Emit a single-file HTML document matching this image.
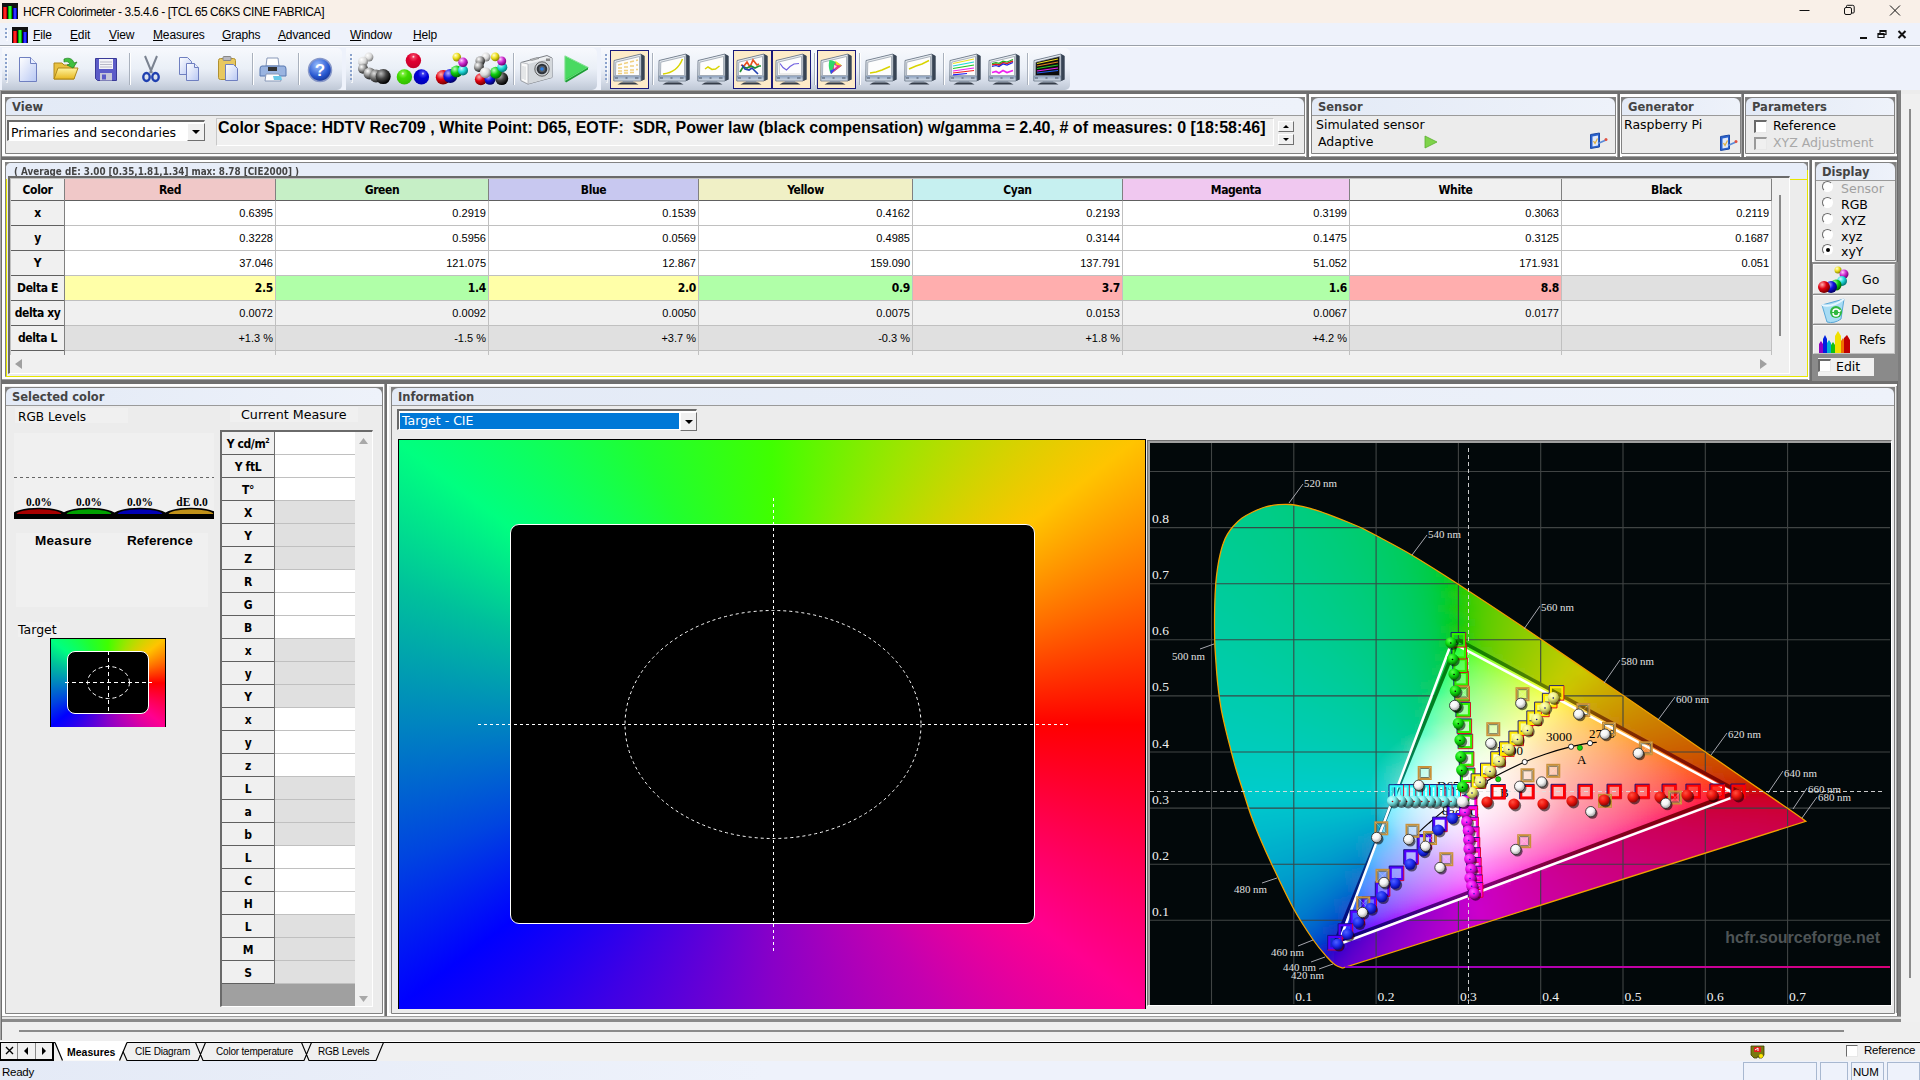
<!DOCTYPE html>
<html lang="en"><head><meta charset="utf-8"><title>HCFR Colorimeter</title>
<style>
html,body{margin:0;padding:0}
body{width:1920px;height:1080px;overflow:hidden;position:relative;background:#ececec;font-family:"Liberation Sans",sans-serif;color:#000}
.abs{position:absolute;white-space:nowrap}
.seg{font-family:"Liberation Sans",sans-serif}
.lsb{font-family:"Liberation Sans",sans-serif;font-weight:bold}
.vd{font-family:"DejaVu Sans","Liberation Sans",sans-serif}
.vdb{font-family:"DejaVu Sans","Liberation Sans",sans-serif;font-weight:bold}
.grip{width:2px;background:repeating-linear-gradient(180deg,#8aa2cc 0,#8aa2cc 2px,transparent 2px,transparent 4px);box-shadow:1px 1px 0 rgba(255,255,255,0.7)}
.tband{background:linear-gradient(180deg,#f7f9fd 0,#eaeff7 50%,#d5dce8 78%,#bfc8d6 100%);border-radius:0 5px 5px 0}
.gbox{background:#ececec;border:1px solid #828282;box-shadow:inset 0 0 0 0 #fff;border-radius:6px 6px 0 0}
.gbox::before{content:"";position:absolute;left:-1px;top:-1px;width:8px;height:8px;background:#828282;z-index:0}
.gbox::after{content:"";position:absolute;right:-1px;top:-1px;width:8px;height:8px;background:#828282;z-index:0}
.ghdr{position:relative;z-index:1;background:linear-gradient(90deg,#e3eaf6,#eef2fa);border-bottom:1px solid #9a9a9a;border-radius:6px 6px 0 0;box-sizing:border-box}
.ghdr span{position:absolute;left:6px;top:2px;font-family:"DejaVu Sans","Liberation Sans",sans-serif;font-weight:bold;font-size:11.500px;line-height:15px;color:#444}
.combo{background:#fff;border-left:2px solid #6a6a6a;border-top:2px solid #6a6a6a;border-right:1px solid #fff;border-bottom:1px solid #fff;box-sizing:border-box}
.cbtn{position:absolute;background:#f0f0f0;border-right:1px solid #707070;border-bottom:1px solid #707070;border-left:1px solid #fff;border-top:1px solid #fff;box-sizing:border-box}
.cbtn i{position:absolute;left:50%;top:50%;margin:-2px 0 0 -4px;border:4px solid transparent;border-top:4px solid #000;border-bottom:0}
.spin{width:16px;height:11px;background:#f0f0f0;border-right:1px solid #707070;border-bottom:1px solid #707070;border-left:1px solid #fff;border-top:1px solid #fff;box-sizing:border-box}
.spin i{position:absolute;left:4px;top:3px;border:3px solid transparent}
.spin i.up{border-bottom:3px solid #000;border-top:0}
.spin i.dn{border-top:3px solid #000;border-bottom:0}
.chk{width:13px;height:13px;background:#fff;border-left:2px solid #6a6a6a;border-top:2px solid #6a6a6a;border-right:1px solid #e8e8e8;border-bottom:1px solid #e8e8e8;box-sizing:border-box}
.chk.dis{background:#f0f0f0;border-left-color:#9a9a9a;border-top-color:#9a9a9a}
.chk.sm{width:12px;height:12px;border-left-width:1px;border-top-width:1px}
.radio{width:11px;height:11px;border-radius:50%;background:#fff;border:1px solid #fff;border-left:1.500px solid #6a6a6a;border-top:1.500px solid #6a6a6a;box-sizing:border-box}
.radio i{position:absolute;left:2.500px;top:2.500px;width:4px;height:4px;border-radius:50%;background:#000}
.hc,.rh,.cv{box-sizing:border-box;overflow:hidden}
.hc span,.rh span{display:block;text-align:center;font-family:"DejaVu Sans Condensed","DejaVu Sans","Liberation Sans",sans-serif;font-weight:bold;font-size:12px;letter-spacing:-0.4px}
.hc span{line-height:23px}
.rh{background:#f0f0f0}
.rh span{line-height:24px}
.rh sup{font-size:7px;line-height:0;vertical-align:5px}
.cv span{display:block;text-align:right;padding-right:2px;font-family:"Liberation Sans",sans-serif;font-size:11px;line-height:24px}
.cv.b span{font-family:"DejaVu Sans Condensed","DejaVu Sans",sans-serif;font-weight:bold;font-size:12px;letter-spacing:-0.3px}
.btn{background:#ebebeb;border-left:1px solid #f8f8f8;border-top:1px solid #f8f8f8;border-right:1px solid #c8c8c8;border-bottom:1px solid #c0c0c0;box-sizing:border-box}
</style></head>
<body>
<div class="abs" style="left:0;top:0;width:1920px;height:23px;background:#f9f0e8"></div>
<svg class="abs" style="left:2px;top:3px" width="18" height="18" viewBox="0 0 18 18"><rect x="0" y="0" width="16" height="16" fill="#111"/><rect x="1" y="4" width="4" height="12" fill="#c00"/><rect x="2" y="4" width="2" height="12" fill="#f22"/><rect x="6" y="3" width="4" height="13" fill="#0a0"/><rect x="7" y="3" width="2" height="13" fill="#3e3"/><rect x="11" y="5" width="4" height="11" fill="#00c"/><rect x="12" y="5" width="2" height="11" fill="#33f"/></svg>
<div class="abs seg" style="left:23px;top:4px;font-size:12px;line-height:16px;letter-spacing:-0.41px">HCFR Colorimeter - 3.5.4.6 - [TCL 65 C6KS CINE FABRICA]</div>
<svg class="abs" style="left:1780px;top:0" width="140" height="23" viewBox="0 0 140 23" fill="none" stroke="#111" stroke-width="1"><path d="M19.5 10.5h10"/><rect x="64.5" y="7.5" width="7" height="7" rx="1.5"/><path d="M66.5 7.5v-1.2a1 1 0 0 1 1-1h5.2a1.5 1.5 0 0 1 1.5 1.5v5.2a1 1 0 0 1 -1 1h-1.2"/><path d="M110 5.5l10 10M120 5.5l-10 10"/></svg>
<div class="abs" style="left:0;top:23px;width:1920px;height:23px;background:#eef2fb"></div>
<div class="abs" style="left:0;top:45px;width:1920px;height:1px;background:#9aa0a8"></div>
<div class="abs" style="left:0;top:46px;width:1920px;height:44px;background:#eef2fb"></div><div class="abs" style="left:0;top:46px;width:1920px;height:1px;background:#fff"></div>
<div class="abs grip" style="left:5px;top:28px;height:12px"></div>
<svg class="abs" style="left:12px;top:27px" width="18" height="18" viewBox="0 0 18 18"><rect x="0" y="0" width="16" height="16" fill="#111"/><rect x="1" y="4" width="4" height="12" fill="#c00"/><rect x="2" y="4" width="2" height="12" fill="#f22"/><rect x="6" y="3" width="4" height="13" fill="#0a0"/><rect x="7" y="3" width="2" height="13" fill="#3e3"/><rect x="11" y="5" width="4" height="11" fill="#00c"/><rect x="12" y="5" width="2" height="11" fill="#33f"/></svg>
<div class="abs seg" style="left:33px;top:27px;font-size:12px;line-height:16px;letter-spacing:-0.15px"><u>F</u>ile</div>
<div class="abs seg" style="left:70px;top:27px;font-size:12px;line-height:16px;letter-spacing:-0.15px"><u>E</u>dit</div>
<div class="abs seg" style="left:109px;top:27px;font-size:12px;line-height:16px;letter-spacing:-0.15px"><u>V</u>iew</div>
<div class="abs seg" style="left:153px;top:27px;font-size:12px;line-height:16px;letter-spacing:-0.15px"><u>M</u>easures</div>
<div class="abs seg" style="left:222px;top:27px;font-size:12px;line-height:16px;letter-spacing:-0.15px"><u>G</u>raphs</div>
<div class="abs seg" style="left:278px;top:27px;font-size:12px;line-height:16px;letter-spacing:-0.15px"><u>A</u>dvanced</div>
<div class="abs seg" style="left:350px;top:27px;font-size:12px;line-height:16px;letter-spacing:-0.15px"><u>W</u>indow</div>
<div class="abs seg" style="left:413px;top:27px;font-size:12px;line-height:16px;letter-spacing:-0.15px"><u>H</u>elp</div>
<svg class="abs" style="left:1850px;top:26px" width="70" height="16" viewBox="0 0 70 16" fill="none" stroke="#111"><path d="M10 12h7" stroke-width="2"/><path d="M28 7.5h6v4h-6z M28 8.5h6 M30 7v-2.5h6v4h-2 M30 5.5h6" stroke-width="1.2"/><path d="M48.500 5l7 7M55.500 5l-7 7" stroke-width="2"/></svg>
<div class="abs tband" style="left:2px;top:48px;width:340px;height:42px"></div>
<div class="abs grip" style="left:5px;top:54px;height:28px"></div>
<div class="abs tband" style="left:346px;top:48px;width:251px;height:42px"></div>
<div class="abs grip" style="left:350px;top:54px;height:28px"></div>
<div class="abs tband" style="left:601px;top:48px;width:469px;height:42px"></div>
<div class="abs grip" style="left:605px;top:54px;height:28px"></div>
<div class="abs" style="left:129px;top:53px;width:1px;height:32px;background:#a9b1bd"></div><div class="abs" style="left:130px;top:53px;width:1px;height:32px;background:#fff"></div>
<div class="abs" style="left:252px;top:53px;width:1px;height:32px;background:#a9b1bd"></div><div class="abs" style="left:253px;top:53px;width:1px;height:32px;background:#fff"></div>
<div class="abs" style="left:298px;top:53px;width:1px;height:32px;background:#a9b1bd"></div><div class="abs" style="left:299px;top:53px;width:1px;height:32px;background:#fff"></div>
<div class="abs" style="left:513px;top:53px;width:1px;height:32px;background:#a9b1bd"></div><div class="abs" style="left:514px;top:53px;width:1px;height:32px;background:#fff"></div>
<div class="abs" style="left:652px;top:53px;width:1px;height:32px;background:#a9b1bd"></div><div class="abs" style="left:653px;top:53px;width:1px;height:32px;background:#fff"></div>
<div class="abs" style="left:814px;top:53px;width:1px;height:32px;background:#a9b1bd"></div><div class="abs" style="left:815px;top:53px;width:1px;height:32px;background:#fff"></div>
<div class="abs" style="left:859px;top:53px;width:1px;height:32px;background:#a9b1bd"></div><div class="abs" style="left:860px;top:53px;width:1px;height:32px;background:#fff"></div>
<div class="abs" style="left:943px;top:53px;width:1px;height:32px;background:#a9b1bd"></div><div class="abs" style="left:944px;top:53px;width:1px;height:32px;background:#fff"></div>
<div class="abs" style="left:1027px;top:53px;width:1px;height:32px;background:#a9b1bd"></div><div class="abs" style="left:1028px;top:53px;width:1px;height:32px;background:#fff"></div>
<div class="abs" style="left:610px;top:50px;width:37px;height:37px;background:#fdebc8;border:1px solid #1a1a7a"></div>
<div class="abs" style="left:733px;top:50px;width:37px;height:37px;background:#fdebc8;border:1px solid #1a1a7a"></div>
<div class="abs" style="left:772px;top:50px;width:37px;height:37px;background:#fdebc8;border:1px solid #1a1a7a"></div>
<div class="abs" style="left:817px;top:50px;width:37px;height:37px;background:#fdebc8;border:1px solid #1a1a7a"></div>
<svg width="0" height="0" style="position:absolute"><defs><linearGradient id="gdoc" x1="0" y1="0" x2="1" y2="1"><stop offset="0" stop-color="#fff"/><stop offset="1" stop-color="#b8c8f4"/></linearGradient><linearGradient id="gfold" x1="0" y1="0" x2="0" y2="1"><stop offset="0" stop-color="#fff4a0"/><stop offset="1" stop-color="#e8b820"/></linearGradient><linearGradient id="gmon" x1="0" y1="0" x2="1" y2="1"><stop offset="0" stop-color="#f4f6f8"/><stop offset="1" stop-color="#8a95a3"/></linearGradient><radialGradient id="bgray" cx="0.35" cy="0.3" r="0.7"><stop offset="0" stop-color="#fff"/><stop offset="0.5" stop-color="#999"/><stop offset="1" stop-color="#222"/></radialGradient><radialGradient id="bdark" cx="0.35" cy="0.3" r="0.7"><stop offset="0" stop-color="#bbb"/><stop offset="0.5" stop-color="#444"/><stop offset="1" stop-color="#000"/></radialGradient><radialGradient id="bred" cx="0.35" cy="0.3" r="0.7"><stop offset="0" stop-color="#ffb0b0"/><stop offset="0.5" stop-color="#e00010"/><stop offset="1" stop-color="#700"/></radialGradient><radialGradient id="bgreen" cx="0.35" cy="0.3" r="0.7"><stop offset="0" stop-color="#c0ffc0"/><stop offset="0.5" stop-color="#10d010"/><stop offset="1" stop-color="#060"/></radialGradient><radialGradient id="bblue" cx="0.35" cy="0.3" r="0.7"><stop offset="0" stop-color="#b0b0ff"/><stop offset="0.5" stop-color="#1010e0"/><stop offset="1" stop-color="#006"/></radialGradient><radialGradient id="byel" cx="0.35" cy="0.3" r="0.7"><stop offset="0" stop-color="#ffffd0"/><stop offset="0.5" stop-color="#f0e020"/><stop offset="1" stop-color="#880"/></radialGradient><radialGradient id="bcya" cx="0.35" cy="0.3" r="0.7"><stop offset="0" stop-color="#d0ffff"/><stop offset="0.5" stop-color="#20d8d8"/><stop offset="1" stop-color="#077"/></radialGradient><radialGradient id="bmag" cx="0.35" cy="0.3" r="0.7"><stop offset="0" stop-color="#ffd0ff"/><stop offset="0.5" stop-color="#d030d0"/><stop offset="1" stop-color="#707"/></radialGradient><radialGradient id="bhelp" cx="0.4" cy="0.3" r="0.8"><stop offset="0" stop-color="#9cc0ff"/><stop offset="0.6" stop-color="#2858d0"/><stop offset="1" stop-color="#102880"/></radialGradient><radialGradient id="bwht" cx="0.35" cy="0.3" r="0.75"><stop offset="0" stop-color="#fff"/><stop offset="0.55" stop-color="#d8d8d8"/><stop offset="1" stop-color="#707070"/></radialGradient><radialGradient id="bmid" cx="0.35" cy="0.3" r="0.75"><stop offset="0" stop-color="#e0e0e0"/><stop offset="0.5" stop-color="#707070"/><stop offset="1" stop-color="#1a1a1a"/></radialGradient><radialGradient id="bred2" cx="0.5" cy="0.25" r="0.8"><stop offset="0" stop-color="#fff"/><stop offset="0.12" stop-color="#f04060"/><stop offset="0.4" stop-color="#e00030"/><stop offset="1" stop-color="#c00028"/></radialGradient><radialGradient id="bgreen2" cx="0.4" cy="0.28" r="0.8"><stop offset="0" stop-color="#fff"/><stop offset="0.12" stop-color="#80f040"/><stop offset="0.4" stop-color="#40d800"/><stop offset="1" stop-color="#30b800"/></radialGradient><radialGradient id="bblue2" cx="0.6" cy="0.28" r="0.8"><stop offset="0" stop-color="#fff"/><stop offset="0.12" stop-color="#4040f0"/><stop offset="0.4" stop-color="#0000d8"/><stop offset="1" stop-color="#0000a8"/></radialGradient></defs></svg>
<svg class="abs" style="left:12px;top:53px" width="32" height="32" viewBox="0 0 32 32"><path d="M7.5 4.5h11l6 6v18h-17z" fill="url(#gdoc)" stroke="#6f7fc0"/><path d="M18.5 4.5v6h6" fill="#e8eeff" stroke="#6f7fc0"/></svg>
<svg class="abs" style="left:50px;top:53px" width="32" height="32" viewBox="0 0 32 32"><path d="M4 10h8l2 2h10v14h-20z" fill="#e8c040" stroke="#b08818"/><path d="M4 26l4-11h20l-4 11z" fill="url(#gfold)" stroke="#b08818"/><path d="M14 6c5-2 9 0 10 4l3-1-4 6-6-3 3-1c-1-2-3-3-6-2z" fill="#40c040" stroke="#208020" stroke-width="0.7"/></svg>
<svg class="abs" style="left:90px;top:53px" width="32" height="32" viewBox="0 0 32 32"><path d="M5.5 5.5h21v22h-19l-2-2z" fill="#5c5cc8" stroke="#3a3a98"/><rect x="9" y="6" width="14" height="10" fill="#f4f4f8"/><path d="M10 9h12M10 11.5h12M10 14h12" stroke="#aab" stroke-width="0.8"/><rect x="10" y="20" width="12" height="7.5" fill="#c8c8d8"/><rect x="12" y="21.5" width="4" height="5" fill="#5c5cc8"/></svg>
<svg class="abs" style="left:135px;top:53px" width="32" height="32" viewBox="0 0 32 32"><path d="M10 3l7 17M22 3l-7 17" stroke="#7a8290" stroke-width="2" fill="none"/><ellipse cx="11.5" cy="24" rx="3.2" ry="4" fill="none" stroke="#2040b0" stroke-width="2.4"/><ellipse cx="20.5" cy="24" rx="3.2" ry="4" fill="none" stroke="#2040b0" stroke-width="2.4"/></svg>
<svg class="abs" style="left:173px;top:53px" width="32" height="32" viewBox="0 0 32 32"><path d="M6.5 4.5h8l4 4v13h-12z" fill="url(#gdoc)" stroke="#6f7fc0"/><path d="M13.5 10.5h8l4 4v13h-12z" fill="url(#gdoc)" stroke="#6f7fc0"/><path d="M21.5 10.5v4h4" fill="#e8eeff" stroke="#6f7fc0"/></svg>
<svg class="abs" style="left:212px;top:53px" width="32" height="32" viewBox="0 0 32 32"><rect x="6.5" y="5.5" width="17" height="21" rx="2" fill="#e8c860" stroke="#b09030"/><rect x="11" y="3.500" width="8" height="4" rx="1" fill="#b8b8c0" stroke="#888"/><path d="M13.5 11.5h8l4 4v12h-12z" fill="url(#gdoc)" stroke="#6f7fc0"/></svg>
<svg class="abs" style="left:257px;top:53px" width="32" height="32" viewBox="0 0 32 32"><path d="M10 5h11l1 8h-13z" fill="#fff" stroke="#8898b8"/><path d="M5 13h22q2 0 2 3v7h-26v-7q0-3 2-3z" fill="#9ab4e0" stroke="#5878b0"/><rect x="11" y="14" width="9" height="4" fill="#333"/><path d="M9 21h13l2 7h-16z" fill="#fff" stroke="#8898b8"/><path d="M16 23h8l1 4h-8z" fill="#68c8e8"/></svg>
<svg class="abs" style="left:304px;top:53px" width="32" height="32" viewBox="0 0 32 32"><circle cx="16" cy="17" r="11.5" fill="url(#bhelp)" stroke="#8898c8" stroke-width="1.5"/><text x="16" y="23" text-anchor="middle" font-family="Liberation Sans,sans-serif" font-weight="bold" font-size="17" fill="#fff">?</text></svg>
<svg class="abs" style="left:350px;top:48px" width="250" height="42" viewBox="350 48 250 42"><circle cx="368.9" cy="57.1" r="4.5" fill="url(#bwht)"/><circle cx="363" cy="61.7" r="5" fill="url(#bwht)"/><circle cx="363" cy="68.8" r="5" fill="url(#bgray)"/><circle cx="369.5" cy="73.4" r="6" fill="url(#bgray)"/><circle cx="376" cy="76" r="6.5" fill="url(#bmid)"/><circle cx="383.2" cy="76.6" r="7.5" fill="url(#bdark)"/><circle cx="413.4" cy="60.6" r="7.7" fill="url(#bred2)"/><circle cx="404.4" cy="76.9" r="7.7" fill="url(#bgreen2)"/><circle cx="421.4" cy="76.9" r="7.7" fill="url(#bblue2)"/><circle cx="443.1" cy="77.3" r="7.3" fill="url(#bred)"/><circle cx="450.3" cy="76" r="7" fill="url(#bblue)"/><circle cx="456.5" cy="71.4" r="6" fill="url(#bgreen)"/><circle cx="463" cy="70.4" r="5" fill="url(#bcya)"/><circle cx="456.8" cy="57.1" r="4.3" fill="url(#byel)"/><circle cx="463" cy="62.3" r="4.8" fill="url(#bmag)"/><circle cx="480.9" cy="79.3" r="6" fill="url(#bred)"/><circle cx="490" cy="79.3" r="5.5" fill="url(#bblue)"/><circle cx="501.7" cy="78.6" r="6.5" fill="url(#bdark)"/><circle cx="495.8" cy="72.7" r="6" fill="url(#bgreen)"/><circle cx="502.3" cy="67.3" r="5" fill="url(#bcya)"/><circle cx="501.7" cy="61" r="4.5" fill="url(#bmag)"/><circle cx="495.2" cy="56.9" r="4.3" fill="url(#byel)"/><circle cx="486" cy="57.1" r="4.5" fill="url(#bwht)"/><circle cx="480.2" cy="61" r="4.8" fill="url(#bgray)"/><circle cx="478.9" cy="66.9" r="5" fill="url(#bgray)"/><circle cx="485.4" cy="72.7" r="5.5" fill="url(#bwht)"/><path d="M521 62.500L547 55.500l5 2.500v19.500L528 84l-7-3.500z" fill="#eef0f2" stroke="#6e7278" stroke-width="0.900"/><path d="M552 58v19.500L528 84V64z" fill="#d4d8dc"/><path d="M521 62.500l7 1.500v20l-7-3.500z" fill="#fafafa" stroke="#9a9ea4" stroke-width="0.600"/><path d="M523 66v13M525 66.500v13.500" stroke="#c4c8cc" stroke-width="0.800"/><path d="M530 59.500l7-2 2 1-7 2z" fill="#b8bcc0" stroke="#777" stroke-width="0.500"/><rect x="546" y="58.500" width="4" height="2.500" fill="#888"/><circle cx="542" cy="69" r="7.200" fill="#c8ccd0" stroke="#555" stroke-width="0.900"/><circle cx="542" cy="69" r="5.300" fill="#30343a"/><circle cx="542" cy="69" r="3.300" fill="#555c66"/><circle cx="542" cy="69" r="1.800" fill="#2a80e8"/><path d="M565 56l23 11.500-23 13.500z" fill="#38d050" stroke="#7ee08e" stroke-width="1.200" stroke-linejoin="round"/><path d="M566 78.500l21-11-21-10z" fill="#58e070" opacity="0.550"/><path d="M565 81l23-13.500v2L566 82.500z" fill="#1c9c34"/></svg>
<svg width="0" height="0" style="position:absolute"><defs><linearGradient id="gmon2" x1="0" y1="0" x2="0" y2="1"><stop offset="0" stop-color="#e8ecf0"/><stop offset="0.780" stop-color="#dfe5ec"/><stop offset="0.820" stop-color="#90a4c0"/><stop offset="1" stop-color="#d8e0ea"/></linearGradient></defs></svg>
<svg class="abs" style="left:613px;top:53px" width="32" height="32" viewBox="0 0 32 32"><path d="M1 7.500L28 1l3.500 2v23.500L28 28H0.800z" fill="#5c6878"/><path d="M28 1l3.500 2v23.500L28 28z" fill="#384454"/><path d="M1 7.500L28 1v27H0.800z" fill="url(#gmon2)" stroke="#6a7686" stroke-width="0.800"/><path d="M2.800 9.200L26.500 3.500v19H2.500z" fill="#fdfdfd" stroke="#7a8696" stroke-width="0.600"/><path d="M5 12l4-1M11 10.500l4-1M17 9l4-1M23 7.500l2-.5M5 15h4M11 14h4M17 13h4M23 12h2M5 18h4M11 17.500h4M17 17h4M23 16.500h2M5 20.500h4M11 20h4M17 19.500h4" fill="none" stroke="#f0d080" stroke-width="1.6"/><path d="M2 25h3M12.500 25h2M22 25h3.500" stroke="#4a5666" stroke-width="1.200"/><path d="M10 28h10l1 1.500h-12z" fill="#8a96a6"/><path d="M4.500 31.500l3.500-2h14l3.500 2z" fill="#343c48"/></svg>
<svg class="abs" style="left:658px;top:53px" width="32" height="32" viewBox="0 0 32 32"><path d="M1 7.500L28 1l3.500 2v23.500L28 28H0.800z" fill="#5c6878"/><path d="M28 1l3.500 2v23.500L28 28z" fill="#384454"/><path d="M1 7.500L28 1v27H0.800z" fill="url(#gmon2)" stroke="#6a7686" stroke-width="0.800"/><path d="M2.800 9.200L26.500 3.500v19H2.500z" fill="#fdfdfd" stroke="#7a8696" stroke-width="0.600"/><path d="M5 21c9-1 16-6 19.500-15" fill="none" stroke="#d8d400" stroke-width="1.5"/><path d="M2 25h3M12.500 25h2M22 25h3.500" stroke="#4a5666" stroke-width="1.200"/><path d="M10 28h10l1 1.500h-12z" fill="#8a96a6"/><path d="M4.500 31.500l3.500-2h14l3.500 2z" fill="#343c48"/></svg>
<svg class="abs" style="left:697px;top:53px" width="32" height="32" viewBox="0 0 32 32"><path d="M1 7.500L28 1l3.500 2v23.500L28 28H0.800z" fill="#5c6878"/><path d="M28 1l3.500 2v23.500L28 28z" fill="#384454"/><path d="M1 7.500L28 1v27H0.800z" fill="url(#gmon2)" stroke="#6a7686" stroke-width="0.800"/><path d="M2.800 9.200L26.500 3.500v19H2.500z" fill="#fdfdfd" stroke="#7a8696" stroke-width="0.600"/><path d="M8 16l3-2 4 2.500 3.500-.5 4-3" fill="none" stroke="#d8d400" stroke-width="1.5"/><path d="M2 25h3M12.500 25h2M22 25h3.500" stroke="#4a5666" stroke-width="1.200"/><path d="M10 28h10l1 1.500h-12z" fill="#8a96a6"/><path d="M4.500 31.500l3.500-2h14l3.500 2z" fill="#343c48"/></svg>
<svg class="abs" style="left:736px;top:53px" width="32" height="32" viewBox="0 0 32 32"><path d="M1 7.500L28 1l3.500 2v23.500L28 28H0.800z" fill="#5c6878"/><path d="M28 1l3.500 2v23.500L28 28z" fill="#384454"/><path d="M1 7.500L28 1v27H0.800z" fill="url(#gmon2)" stroke="#6a7686" stroke-width="0.800"/><path d="M2.800 9.200L26.500 3.500v19H2.500z" fill="#fdfdfd" stroke="#7a8696" stroke-width="0.600"/><path d="M5 12l3 1 3-4 3 5 3-7 4 5 2-1" fill="none" stroke="#e85020" stroke-width="1.7"/><path d="M4 19l3-5 4 1 4-2 4 2 4-2 2 0" fill="none" stroke="#209030" stroke-width="1.7"/><path d="M6 12l3 4 4 1 3-2 3 3 3 3" fill="none" stroke="#2040b0" stroke-width="1.7"/><path d="M2 25h3M12.500 25h2M22 25h3.500" stroke="#4a5666" stroke-width="1.200"/><path d="M10 28h10l1 1.500h-12z" fill="#8a96a6"/><path d="M4.500 31.500l3.500-2h14l3.500 2z" fill="#343c48"/></svg>
<svg class="abs" style="left:775px;top:53px" width="32" height="32" viewBox="0 0 32 32"><path d="M1 7.500L28 1l3.500 2v23.500L28 28H0.800z" fill="#5c6878"/><path d="M28 1l3.500 2v23.500L28 28z" fill="#384454"/><path d="M1 7.500L28 1v27H0.800z" fill="url(#gmon2)" stroke="#6a7686" stroke-width="0.800"/><path d="M2.800 9.200L26.500 3.500v19H2.500z" fill="#fdfdfd" stroke="#7a8696" stroke-width="0.600"/><path d="M5 10.500l3 4 3.500 2.500 3.500-3.500 4-2.500 5-.5" fill="none" stroke="#7060e0" stroke-width="1.2"/><path d="M4.500 8v13h21" fill="none" stroke="#c8c8c8" stroke-width="0.7"/><path d="M2 25h3M12.500 25h2M22 25h3.500" stroke="#4a5666" stroke-width="1.200"/><path d="M10 28h10l1 1.500h-12z" fill="#8a96a6"/><path d="M4.500 31.500l3.500-2h14l3.500 2z" fill="#343c48"/></svg>
<svg class="abs" style="left:820px;top:53px" width="32" height="32" viewBox="0 0 32 32"><path d="M1 7.500L28 1l3.500 2v23.500L28 28H0.800z" fill="#5c6878"/><path d="M28 1l3.500 2v23.500L28 28z" fill="#384454"/><path d="M1 7.500L28 1v27H0.800z" fill="url(#gmon2)" stroke="#6a7686" stroke-width="0.800"/><path d="M2.800 9.200L26.500 3.500v19H2.500z" fill="#fdfdfd" stroke="#7a8696" stroke-width="0.600"/><path d="M9.500 7c-1.500 5-.5 10.500 1.500 14l11-8.500c-4.500-3-9-5.500-12.500-5.500z" fill="#30d868"/><path d="M11 21l11-8.500-7-2.500z" fill="#f03888"/><path d="M10 17.500l1 3.500 5-5.500z" fill="#3848f0"/><path d="M22 12.500l-7-5 1.500 4.500z" fill="#f0e020"/><path d="M14 12l3 1-3 3z" fill="#fff" opacity="0.800"/><path d="M2 25h3M12.500 25h2M22 25h3.500" stroke="#4a5666" stroke-width="1.200"/><path d="M10 28h10l1 1.500h-12z" fill="#8a96a6"/><path d="M4.500 31.500l3.500-2h14l3.500 2z" fill="#343c48"/></svg>
<svg class="abs" style="left:865px;top:53px" width="32" height="32" viewBox="0 0 32 32"><path d="M1 7.500L28 1l3.500 2v23.500L28 28H0.800z" fill="#5c6878"/><path d="M28 1l3.500 2v23.500L28 28z" fill="#384454"/><path d="M1 7.500L28 1v27H0.800z" fill="url(#gmon2)" stroke="#6a7686" stroke-width="0.800"/><path d="M2.800 9.200L26.500 3.500v19H2.500z" fill="#fdfdfd" stroke="#7a8696" stroke-width="0.600"/><path d="M5 20l6-1 6-2 8-3.500" fill="none" stroke="#d8d400" stroke-width="1.5"/><path d="M2 25h3M12.500 25h2M22 25h3.500" stroke="#4a5666" stroke-width="1.200"/><path d="M10 28h10l1 1.500h-12z" fill="#8a96a6"/><path d="M4.500 31.500l3.500-2h14l3.500 2z" fill="#343c48"/></svg>
<svg class="abs" style="left:904px;top:53px" width="32" height="32" viewBox="0 0 32 32"><path d="M1 7.500L28 1l3.500 2v23.500L28 28H0.800z" fill="#5c6878"/><path d="M28 1l3.500 2v23.500L28 28z" fill="#384454"/><path d="M1 7.500L28 1v27H0.800z" fill="url(#gmon2)" stroke="#6a7686" stroke-width="0.800"/><path d="M2.800 9.200L26.500 3.500v19H2.500z" fill="#fdfdfd" stroke="#7a8696" stroke-width="0.600"/><path d="M5 16l7-3 6-2 7-3.500" fill="none" stroke="#d8d400" stroke-width="1.5"/><path d="M2 25h3M12.500 25h2M22 25h3.500" stroke="#4a5666" stroke-width="1.200"/><path d="M10 28h10l1 1.500h-12z" fill="#8a96a6"/><path d="M4.500 31.500l3.500-2h14l3.500 2z" fill="#343c48"/></svg>
<svg class="abs" style="left:949px;top:53px" width="32" height="32" viewBox="0 0 32 32"><path d="M1 7.500L28 1l3.500 2v23.500L28 28H0.800z" fill="#5c6878"/><path d="M28 1l3.500 2v23.500L28 28z" fill="#384454"/><path d="M1 7.500L28 1v27H0.800z" fill="url(#gmon2)" stroke="#6a7686" stroke-width="0.800"/><path d="M2.800 9.200L26.500 3.500v19H2.500z" fill="#fdfdfd" stroke="#7a8696" stroke-width="0.600"/><path d="M4 10.500l21-4.500" fill="none" stroke="#f0e020" stroke-width="1.2"/><path d="M4 13l21-4" fill="none" stroke="#20d8d8" stroke-width="1.2"/><path d="M4 15.500l21-3.500" fill="none" stroke="#20c820" stroke-width="1.2"/><path d="M4 18l21-3" fill="none" stroke="#f020f0" stroke-width="1.2"/><path d="M4 20l21-2.500" fill="none" stroke="#f02020" stroke-width="1.2"/><path d="M4 21.800l14-1.300" fill="none" stroke="#2020f0" stroke-width="1.2"/><path d="M2 25h3M12.500 25h2M22 25h3.500" stroke="#4a5666" stroke-width="1.200"/><path d="M10 28h10l1 1.500h-12z" fill="#8a96a6"/><path d="M4.500 31.500l3.500-2h14l3.500 2z" fill="#343c48"/></svg>
<svg class="abs" style="left:988px;top:53px" width="32" height="32" viewBox="0 0 32 32"><path d="M1 7.500L28 1l3.500 2v23.500L28 28H0.800z" fill="#5c6878"/><path d="M28 1l3.500 2v23.500L28 28z" fill="#384454"/><path d="M1 7.500L28 1v27H0.800z" fill="url(#gmon2)" stroke="#6a7686" stroke-width="0.800"/><path d="M2.800 9.200L26.500 3.500v19H2.500z" fill="#fdfdfd" stroke="#7a8696" stroke-width="0.600"/><path d="M4 12l4-1 3 1 4-2.500 4 1 6-2.500" fill="none" stroke="#e02020" stroke-width="1.6"/><path d="M4 13.500l4-1 3 1 4-2.500 4 1 6-2.500" fill="none" stroke="#2020e0" stroke-width="1.2"/><path d="M4 10.700l4-1 3 .7 4-2.200 4 .8 6-2.500" fill="none" stroke="#20b020" stroke-width="1.2"/><path d="M4 19.500l4-1 3 1.500 4-2.500 4 2 6-2" fill="none" stroke="#f020f0" stroke-width="1.7"/><path d="M2 25h3M12.500 25h2M22 25h3.500" stroke="#4a5666" stroke-width="1.200"/><path d="M10 28h10l1 1.500h-12z" fill="#8a96a6"/><path d="M4.500 31.500l3.500-2h14l3.500 2z" fill="#343c48"/></svg>
<svg class="abs" style="left:1033px;top:53px" width="32" height="32" viewBox="0 0 32 32"><path d="M1 7.500L28 1l3.500 2v23.500L28 28H0.800z" fill="#5c6878"/><path d="M28 1l3.500 2v23.500L28 28z" fill="#384454"/><path d="M1 7.500L28 1v27H0.800z" fill="url(#gmon2)" stroke="#6a7686" stroke-width="0.800"/><path d="M2.800 9.200L26.500 3.500v19H2.500z" fill="#0c0c0c" stroke="#7a8696" stroke-width="0.600"/><path d="M4 10.500l21-4.500" fill="none" stroke="#f0e020" stroke-width="1.2"/><path d="M4 13l21-4" fill="none" stroke="#e08020" stroke-width="1.2"/><path d="M4 15.500l21-3.500" fill="none" stroke="#20c820" stroke-width="1.2"/><path d="M4 18l21-3" fill="none" stroke="#f020f0" stroke-width="1.2"/><path d="M4 20l21-2.500" fill="none" stroke="#2060f0" stroke-width="1.2"/><path d="M2 25h3M12.500 25h2M22 25h3.500" stroke="#4a5666" stroke-width="1.200"/><path d="M10 28h10l1 1.500h-12z" fill="#8a96a6"/><path d="M4.500 31.500l3.500-2h14l3.500 2z" fill="#343c48"/></svg>
<div class="abs" style="left:0;top:90px;width:1920px;height:950px;background:#ececec"></div>
<div class="abs" style="left:1901px;top:94px;width:19px;height:946px;background:#f0f0f0"></div>
<div class="abs" style="left:1909px;top:109px;width:2px;height:869px;background:#8a8a8a"></div>
<div class="abs" style="left:0;top:90px;width:1901px;height:1px;background:#a0a0a0"></div>
<div class="abs" style="left:1px;top:91px;width:1900px;height:3px;background:#6f6f6f"></div>
<div class="abs" style="left:0;top:90px;width:1px;height:950px;background:#a8a8a8"></div>
<div class="abs" style="left:1px;top:91px;width:1px;height:949px;background:#6f6f6f"></div>
<div class="abs" style="left:2px;top:94px;width:1895px;height:3px;background:#fff"></div>
<div class="abs" style="left:2px;top:94px;width:3px;height:930px;background:#fff"></div>
<div class="abs" style="left:1896px;top:94px;width:1px;height:926px;background:#a0a0a0"></div>
<div class="abs" style="left:1897px;top:91px;width:4px;height:929px;background:#7e7e7e"></div><div class="abs" style="left:1897px;top:94px;width:1px;height:926px;background:#6c6c6c"></div>
<div class="abs" style="left:2px;top:154px;width:1895px;height:8px;background:#fff"></div><div class="abs" style="left:2px;top:156px;width:1895px;height:1px;background:#a0a0a0"></div><div class="abs" style="left:2px;top:157px;width:1895px;height:3px;background:#6f6f6f"></div>
<div class="abs" style="left:2px;top:377px;width:1895px;height:9px;background:#fff"></div><div class="abs" style="left:2px;top:379px;width:1895px;height:1px;background:#a0a0a0"></div><div class="abs" style="left:2px;top:380px;width:1895px;height:4px;background:#6f6f6f"></div>
<div class="abs" style="left:2px;top:1013px;width:1895px;height:3px;background:#fff"></div>
<div class="abs" style="left:2px;top:1016px;width:1899px;height:1px;background:#a0a0a0"></div>
<div class="abs" style="left:2px;top:1017px;width:1899px;height:2px;background:#e4e4e4"></div>
<div class="abs" style="left:2px;top:1019px;width:1899px;height:3px;background:#8a8a8a"></div>
<div class="abs" style="left:2px;top:1022px;width:1918px;height:20px;background:#efefef"></div>
<div class="abs" style="left:19px;top:1030px;width:1825px;height:2px;background:#8a8a8a"></div>
<div class="abs" style="left:1305px;top:94px;width:6px;height:63px;background:#fff"></div><div class="abs" style="left:1306px;top:94px;width:1px;height:63px;background:#a0a0a0"></div><div class="abs" style="left:1307px;top:94px;width:2px;height:63px;background:#6f6f6f"></div>
<div class="abs" style="left:1616px;top:94px;width:6px;height:63px;background:#fff"></div><div class="abs" style="left:1617px;top:94px;width:1px;height:63px;background:#a0a0a0"></div><div class="abs" style="left:1618px;top:94px;width:2px;height:63px;background:#6f6f6f"></div>
<div class="abs" style="left:1740px;top:94px;width:6px;height:63px;background:#fff"></div><div class="abs" style="left:1741px;top:94px;width:1px;height:63px;background:#a0a0a0"></div><div class="abs" style="left:1742px;top:94px;width:2px;height:63px;background:#6f6f6f"></div>
<div class="abs" style="left:1808px;top:160px;width:6px;height:220px;background:#fff"></div><div class="abs" style="left:1809px;top:160px;width:1px;height:220px;background:#a0a0a0"></div><div class="abs" style="left:1810px;top:160px;width:2px;height:220px;background:#6f6f6f"></div>
<div class="abs" style="left:383px;top:384px;width:6px;height:632px;background:#fff"></div><div class="abs" style="left:384px;top:384px;width:1px;height:632px;background:#a0a0a0"></div><div class="abs" style="left:385px;top:384px;width:2px;height:632px;background:#6f6f6f"></div>
<div class="abs gbox " style="left:5px;top:97px;width:1298px;height:55px"><div class="ghdr" style="height:18px"><span>View</span></div><div class="abs combo" style="left:1px;top:22px;width:198px;height:21px"><span class="vd" style="position:absolute;left:2px;top:2px;font-size:12.500px;line-height:17px">Primaries and secondaries</span><div class="cbtn" style="left:178px;top:1px;width:18px;height:18px"><i></i></div></div><div class="abs" style="left:210px;top:20px;width:1056px;height:26px;background:#f0f0f0;border-left:1px solid #c8c8c8;border-top:1px solid #c8c8c8;border-right:1px solid #fff;border-bottom:1px solid #fff"></div><div class="abs lsb" style="left:212px;top:21px;font-size:16px;line-height:18px;letter-spacing:0.025px;white-space:pre" id="cs">Color Space: HDTV Rec709 , White Point: D65, EOTF:  SDR, Power law (black compensation) w/gamma = 2.40, # of measures: 0 [18:58:46]</div><div class="abs spin" style="left:1272px;top:23px"><i class="up"></i></div><div class="abs spin" style="left:1272px;top:36px"><i class="dn"></i></div></div>
<div class="abs gbox " style="left:1311px;top:97px;width:303px;height:55px"><div class="ghdr" style="height:18px"><span>Sensor</span></div><div class="abs vd" style="left:4px;top:18px;font-size:12.500px;line-height:17px">Simulated sensor</div><div class="abs vd" style="left:6px;top:35px;font-size:12.500px;line-height:17px">Adaptive</div><svg class="abs" style="left:112px;top:37px" width="14" height="14"><path d="M1 1l12 6-12 6z" fill="#7ed34a" stroke="#5cb030" stroke-width="0.8"/></svg><svg class="abs" style="left:277px;top:34px" width="20" height="18" viewBox="0 0 20 18"><path d="M1.500 2.500l9-1.500v14l-9 1.500z" fill="#2a62cc" stroke="#1c4aa8" stroke-width="1" stroke-linejoin="round"/><path d="M3.500 4.500l5.500-1v10l-5.500 1z" fill="#dfe9fb"/><path d="M4.500 9l1.500 2.500 2.500-5" fill="none" stroke="#e0b040" stroke-width="1.300"/><path d="M9 11.500l8-3.500" stroke="#5a8ad8" stroke-width="1.800"/><circle cx="17" cy="7.500" r="1.500" fill="#e05040"/></svg></div>
<div class="abs gbox " style="left:1621px;top:97px;width:118px;height:55px"><div class="ghdr" style="height:18px"><span>Generator</span></div><div class="abs vd" style="left:2px;top:18px;font-size:12.500px;line-height:17px">Raspberry Pi</div><svg class="abs" style="left:97px;top:36px" width="20" height="18" viewBox="0 0 20 18"><path d="M1.500 2.500l9-1.500v14l-9 1.500z" fill="#2a62cc" stroke="#1c4aa8" stroke-width="1" stroke-linejoin="round"/><path d="M3.500 4.500l5.500-1v10l-5.500 1z" fill="#dfe9fb"/><path d="M4.500 9l1.500 2.500 2.500-5" fill="none" stroke="#e0b040" stroke-width="1.300"/><path d="M9 11.500l8-3.500" stroke="#5a8ad8" stroke-width="1.800"/><circle cx="17" cy="7.500" r="1.500" fill="#e05040"/></svg></div>
<div class="abs gbox " style="left:1745px;top:97px;width:148px;height:55px"><div class="ghdr" style="height:18px"><span>Parameters</span></div><div class="abs chk" style="left:8px;top:22px"></div><div class="abs vd" style="left:27px;top:19px;font-size:12.500px;line-height:17px">Reference</div><div class="abs chk dis" style="left:8px;top:39px"></div><div class="abs vd" style="left:27px;top:36px;font-size:12.500px;line-height:17px;color:#a8a8a8">XYZ Adjustment</div></div>
<div class="abs" style="left:5px;top:162px;width:8px;height:8px;background:#828282"></div><div class="abs" style="left:1800px;top:162px;width:8px;height:8px;background:#828282"></div>
<div class="abs" style="left:5px;top:162px;width:1803px;height:215px;background:#ececec;border:1px solid #828282;border-radius:6px 6px 0 0;box-sizing:border-box"></div>
<div class="abs" style="left:6px;top:163px;width:1801px;height:15px;background:#e7edf8;border-radius:5px 5px 0 0"></div>
<div class="abs" style="left:6px;top:179px;width:1px;height:198px;background:#e6e600"></div>
<div class="abs" style="left:6px;top:376px;width:1802px;height:1px;background:#e6e600"></div>
<div class="abs" style="left:1807px;top:170px;width:1px;height:207px;background:#e6e600"></div>
<div class="abs" style="left:1790px;top:179px;width:18px;height:1px;background:#e6e600"></div>
<div class="abs" style="left:14px;top:163px;width:600px;height:13px;overflow:hidden"><div class="vdb" style="font-size:10px;line-height:13px;color:#444;margin-top:2px;white-space:pre;transform:scaleX(0.88);transform-origin:0 0">( Average dE: 3.00 [0.35,1.81,1.34] max: 8.78 [CIE2000] )</div></div>
<div class="abs" style="left:8px;top:176px;width:1782px;height:198px;background:#f0f0f0;border-left:2px solid #6a6a6a;border-top:2px solid #6a6a6a;border-right:1px solid #fff;border-bottom:1px solid #fff;box-sizing:border-box"></div>
<div class="abs" style="left:10px;top:178px;width:1762px;height:177px;background:#c0c0c0"></div>
<div class="abs hc" style="left:11px;top:179px;width:53px;height:21px;background:#f0f0f0"><span>Color</span></div>
<div class="abs hc" style="left:65px;top:179px;width:210px;height:21px;background:#f0c8c8"><span>Red</span></div>
<div class="abs hc" style="left:276px;top:179px;width:212px;height:21px;background:#c6efc6"><span>Green</span></div>
<div class="abs hc" style="left:489px;top:179px;width:209px;height:21px;background:#c8c8f0"><span>Blue</span></div>
<div class="abs hc" style="left:699px;top:179px;width:213px;height:21px;background:#f0f0c6"><span>Yellow</span></div>
<div class="abs hc" style="left:913px;top:179px;width:209px;height:21px;background:#c6f0f0"><span>Cyan</span></div>
<div class="abs hc" style="left:1123px;top:179px;width:226px;height:21px;background:#f0c8f0"><span>Magenta</span></div>
<div class="abs hc" style="left:1350px;top:179px;width:211px;height:21px;background:#f0f0f0"><span>White</span></div>
<div class="abs hc" style="left:1562px;top:179px;width:209px;height:21px;background:#f0f0f0"><span>Black</span></div>
<div class="abs" style="left:11px;top:200px;width:1760px;height:1px;background:#606060"></div>
<div class="abs" style="left:64px;top:179px;width:1px;height:22px;background:#808080"></div>
<div class="abs" style="left:275px;top:179px;width:1px;height:22px;background:#808080"></div>
<div class="abs" style="left:488px;top:179px;width:1px;height:22px;background:#808080"></div>
<div class="abs" style="left:698px;top:179px;width:1px;height:22px;background:#808080"></div>
<div class="abs" style="left:912px;top:179px;width:1px;height:22px;background:#808080"></div>
<div class="abs" style="left:1122px;top:179px;width:1px;height:22px;background:#808080"></div>
<div class="abs" style="left:1349px;top:179px;width:1px;height:22px;background:#808080"></div>
<div class="abs" style="left:1561px;top:179px;width:1px;height:22px;background:#808080"></div>
<div class="abs" style="left:1771px;top:179px;width:1px;height:22px;background:#808080"></div>
<div class="abs rh" style="left:11px;top:201px;width:53px;height:24px"><span>x</span></div>
<div class="abs" style="left:11px;top:225px;width:53px;height:1px;background:#606060"></div>
<div class="abs cv" style="left:65px;top:201px;width:210px;height:24px;background:#fff"><span>0.6395</span></div>
<div class="abs cv" style="left:276px;top:201px;width:212px;height:24px;background:#fff"><span>0.2919</span></div>
<div class="abs cv" style="left:489px;top:201px;width:209px;height:24px;background:#fff"><span>0.1539</span></div>
<div class="abs cv" style="left:699px;top:201px;width:213px;height:24px;background:#fff"><span>0.4162</span></div>
<div class="abs cv" style="left:913px;top:201px;width:209px;height:24px;background:#fff"><span>0.2193</span></div>
<div class="abs cv" style="left:1123px;top:201px;width:226px;height:24px;background:#fff"><span>0.3199</span></div>
<div class="abs cv" style="left:1350px;top:201px;width:211px;height:24px;background:#fff"><span>0.3063</span></div>
<div class="abs cv" style="left:1562px;top:201px;width:209px;height:24px;background:#fff"><span>0.2119</span></div>
<div class="abs rh" style="left:11px;top:226px;width:53px;height:24px"><span>y</span></div>
<div class="abs" style="left:11px;top:250px;width:53px;height:1px;background:#606060"></div>
<div class="abs cv" style="left:65px;top:226px;width:210px;height:24px;background:#fff"><span>0.3228</span></div>
<div class="abs cv" style="left:276px;top:226px;width:212px;height:24px;background:#fff"><span>0.5956</span></div>
<div class="abs cv" style="left:489px;top:226px;width:209px;height:24px;background:#fff"><span>0.0569</span></div>
<div class="abs cv" style="left:699px;top:226px;width:213px;height:24px;background:#fff"><span>0.4985</span></div>
<div class="abs cv" style="left:913px;top:226px;width:209px;height:24px;background:#fff"><span>0.3144</span></div>
<div class="abs cv" style="left:1123px;top:226px;width:226px;height:24px;background:#fff"><span>0.1475</span></div>
<div class="abs cv" style="left:1350px;top:226px;width:211px;height:24px;background:#fff"><span>0.3125</span></div>
<div class="abs cv" style="left:1562px;top:226px;width:209px;height:24px;background:#fff"><span>0.1687</span></div>
<div class="abs rh" style="left:11px;top:251px;width:53px;height:24px"><span>Y</span></div>
<div class="abs" style="left:11px;top:275px;width:53px;height:1px;background:#606060"></div>
<div class="abs cv" style="left:65px;top:251px;width:210px;height:24px;background:#fff"><span>37.046</span></div>
<div class="abs cv" style="left:276px;top:251px;width:212px;height:24px;background:#fff"><span>121.075</span></div>
<div class="abs cv" style="left:489px;top:251px;width:209px;height:24px;background:#fff"><span>12.867</span></div>
<div class="abs cv" style="left:699px;top:251px;width:213px;height:24px;background:#fff"><span>159.090</span></div>
<div class="abs cv" style="left:913px;top:251px;width:209px;height:24px;background:#fff"><span>137.791</span></div>
<div class="abs cv" style="left:1123px;top:251px;width:226px;height:24px;background:#fff"><span>51.052</span></div>
<div class="abs cv" style="left:1350px;top:251px;width:211px;height:24px;background:#fff"><span>171.931</span></div>
<div class="abs cv" style="left:1562px;top:251px;width:209px;height:24px;background:#fff"><span>0.051</span></div>
<div class="abs rh" style="left:11px;top:276px;width:53px;height:24px"><span>Delta E</span></div>
<div class="abs" style="left:11px;top:300px;width:53px;height:1px;background:#606060"></div>
<div class="abs cv b" style="left:65px;top:276px;width:210px;height:24px;background:#ffffa8"><span>2.5</span></div>
<div class="abs cv b" style="left:276px;top:276px;width:212px;height:24px;background:#b0ffa8"><span>1.4</span></div>
<div class="abs cv b" style="left:489px;top:276px;width:209px;height:24px;background:#ffffa8"><span>2.0</span></div>
<div class="abs cv b" style="left:699px;top:276px;width:213px;height:24px;background:#b0ffa8"><span>0.9</span></div>
<div class="abs cv b" style="left:913px;top:276px;width:209px;height:24px;background:#ffaeae"><span>3.7</span></div>
<div class="abs cv b" style="left:1123px;top:276px;width:226px;height:24px;background:#b0ffa8"><span>1.6</span></div>
<div class="abs cv b" style="left:1350px;top:276px;width:211px;height:24px;background:#ffaeae"><span>8.8</span></div>
<div class="abs cv b" style="left:1562px;top:276px;width:209px;height:24px;background:#e0e0e0"><span></span></div>
<div class="abs rh" style="left:11px;top:301px;width:53px;height:24px"><span>delta xy</span></div>
<div class="abs" style="left:11px;top:325px;width:53px;height:1px;background:#606060"></div>
<div class="abs cv" style="left:65px;top:301px;width:210px;height:24px;background:#f0f0f0"><span>0.0072</span></div>
<div class="abs cv" style="left:276px;top:301px;width:212px;height:24px;background:#f0f0f0"><span>0.0092</span></div>
<div class="abs cv" style="left:489px;top:301px;width:209px;height:24px;background:#f0f0f0"><span>0.0050</span></div>
<div class="abs cv" style="left:699px;top:301px;width:213px;height:24px;background:#f0f0f0"><span>0.0075</span></div>
<div class="abs cv" style="left:913px;top:301px;width:209px;height:24px;background:#f0f0f0"><span>0.0153</span></div>
<div class="abs cv" style="left:1123px;top:301px;width:226px;height:24px;background:#f0f0f0"><span>0.0067</span></div>
<div class="abs cv" style="left:1350px;top:301px;width:211px;height:24px;background:#f0f0f0"><span>0.0177</span></div>
<div class="abs cv" style="left:1562px;top:301px;width:209px;height:24px;background:#f0f0f0"><span></span></div>
<div class="abs rh" style="left:11px;top:326px;width:53px;height:24px"><span>delta L</span></div>
<div class="abs" style="left:11px;top:350px;width:53px;height:1px;background:#606060"></div>
<div class="abs cv" style="left:65px;top:326px;width:210px;height:24px;background:#e0e0e0"><span>+1.3 %</span></div>
<div class="abs cv" style="left:276px;top:326px;width:212px;height:24px;background:#e0e0e0"><span>-1.5 %</span></div>
<div class="abs cv" style="left:489px;top:326px;width:209px;height:24px;background:#e0e0e0"><span>+3.7 %</span></div>
<div class="abs cv" style="left:699px;top:326px;width:213px;height:24px;background:#e0e0e0"><span>-0.3 %</span></div>
<div class="abs cv" style="left:913px;top:326px;width:209px;height:24px;background:#e0e0e0"><span>+1.8 %</span></div>
<div class="abs cv" style="left:1123px;top:326px;width:226px;height:24px;background:#e0e0e0"><span>+4.2 %</span></div>
<div class="abs cv" style="left:1350px;top:326px;width:211px;height:24px;background:#e0e0e0"><span></span></div>
<div class="abs cv" style="left:1562px;top:326px;width:209px;height:24px;background:#e0e0e0"><span></span></div>
<div class="abs rh" style="left:11px;top:351px;width:53px;height:4px"></div>
<div class="abs" style="left:65px;top:351px;width:210px;height:4px;background:#f0f0f0"></div>
<div class="abs" style="left:276px;top:351px;width:212px;height:4px;background:#f0f0f0"></div>
<div class="abs" style="left:489px;top:351px;width:209px;height:4px;background:#f0f0f0"></div>
<div class="abs" style="left:699px;top:351px;width:213px;height:4px;background:#f0f0f0"></div>
<div class="abs" style="left:913px;top:351px;width:209px;height:4px;background:#f0f0f0"></div>
<div class="abs" style="left:1123px;top:351px;width:226px;height:4px;background:#f0f0f0"></div>
<div class="abs" style="left:1350px;top:351px;width:211px;height:4px;background:#f0f0f0"></div>
<div class="abs" style="left:1562px;top:351px;width:209px;height:4px;background:#f0f0f0"></div>
<div class="abs" style="left:64px;top:201px;width:1px;height:154px;background:#808080"></div>
<div class="abs" style="left:1772px;top:178px;width:17px;height:177px;background:#f0f0f0"></div>
<div class="abs" style="left:1779px;top:195px;width:2px;height:141px;background:#8a8a8a"></div>
<div class="abs" style="left:10px;top:355px;width:1779px;height:18px;background:#f0f0f0"></div>
<svg class="abs" style="left:14px;top:358px" width="10" height="12"><path d="M8 1v10l-7-5z" fill="#a0a0a0"/></svg>
<svg class="abs" style="left:1758px;top:358px" width="10" height="12"><path d="M2 1v10l7-5z" fill="#a0a0a0"/></svg>
<div class="abs gbox " style="left:1815px;top:162px;width:79px;height:97px"><div class="ghdr" style="height:18px"><span>Display</span></div><div class="abs radio" style="left:6px;top:18px"></div><div class="abs vd" style="left:25px;top:18px;font-size:12.500px;line-height:16px;color:#a0a0a0">Sensor</div><div class="abs radio" style="left:6px;top:34px"></div><div class="abs vd" style="left:25px;top:34px;font-size:12.500px;line-height:16px;color:#000">RGB</div><div class="abs radio" style="left:6px;top:50px"></div><div class="abs vd" style="left:25px;top:50px;font-size:12.500px;line-height:16px;color:#000">XYZ</div><div class="abs radio" style="left:6px;top:66px"></div><div class="abs vd" style="left:25px;top:66px;font-size:12.500px;line-height:16px;color:#000">xyz</div><div class="abs radio" style="left:6px;top:81px"><i></i></div><div class="abs vd" style="left:25px;top:81px;font-size:12.500px;line-height:16px;color:#000">xyY</div></div>
<div class="abs" style="left:1812px;top:262px;width:86px;height:119px;background:#8a8a8a"></div>
<div class="abs btn" style="left:1813px;top:264px;width:82px;height:30px"><svg style="position:absolute;left:4px;top:1px" width="32" height="28" viewBox="0 0 32 28"><circle cx="20" cy="4" r="3.5" fill="url(#byel)"/><circle cx="26" cy="8" r="4.5" fill="url(#bmag)"/><circle cx="24" cy="15" r="5" fill="url(#bcya)"/><circle cx="18" cy="19" r="5.500" fill="url(#bgreen)"/><circle cx="13" cy="21" r="6" fill="url(#bblue)"/><circle cx="6" cy="21" r="6" fill="url(#bred)"/></svg><span class="vd" style="position:absolute;left:48px;top:6px;font-size:12.500px;line-height:17px">Go</span></div>
<div class="abs btn" style="left:1813px;top:295px;width:82px;height:29px"><svg style="position:absolute;left:5px;top:1px" width="30" height="28" viewBox="0 0 30 28"><path d="M3 8l22-6-3 20q-7 5-14 3z" fill="#a8dcf4" stroke="#5aa8d8" stroke-width="1"/><path d="M3 8q10 3 22-6" fill="none" stroke="#e8f6ff" stroke-width="2"/><circle cx="17" cy="15" r="6" fill="#30b840"/><path d="M14 15a3 3 0 0 1 6 0M20 15l1.500-2M14 16a3 3 0 0 0 6 0" stroke="#fff" stroke-width="1.500" fill="none"/></svg><span class="vd" style="position:absolute;left:37px;top:5px;font-size:12.500px;line-height:17px">Delete</span></div>
<div class="abs btn" style="left:1813px;top:325px;width:82px;height:29px"><svg style="position:absolute;left:4px;top:2px" width="34" height="26" viewBox="0 0 34 26"><path d="M1 25v-9l2-3 2 3v9z" fill="#9000c0"/><path d="M5 25v-14l2-4 2 4v14z" fill="#0020e0"/><path d="M9 25v-10l2-3 2 3v10z" fill="#00b0d0"/><path d="M13 25v-8l2-3 2 3v8z" fill="#10c010"/><path d="M17 25v-17l3-5 3 5v17z" fill="#f0e000"/><path d="M23 25v-12l2-3 2 3v12z" fill="#f07000"/><path d="M26 25v-15l3-3 3 5v13z" fill="#c00000"/></svg><span class="vd" style="position:absolute;left:45px;top:5px;font-size:12.500px;line-height:17px">Refs</span></div>
<div class="abs" style="left:1818px;top:358px;width:56px;height:18px;background:#f0f0f0"></div>
<div class="abs chk" style="left:1818px;top:359px"></div><div class="abs vd" style="left:1836px;top:358px;font-size:12.500px;line-height:17px">Edit</div>
<div class="abs gbox " style="left:5px;top:387px;width:376px;height:625px"><div class="ghdr" style="height:18px"><span>Selected color</span></div><div class="abs" style="left:12px;top:234px;width:42px;height:15px;background:#f0f0f0"></div><div class="abs" style="left:9px;top:20px;width:113px;height:15px;background:#f0f0f0"></div><div class="abs vd" style="left:12px;top:21px;font-size:12.100px;line-height:16px">RGB Levels</div><div class="abs" style="left:224px;top:19px;width:128px;height:15px;background:#f0f0f0"></div><div class="abs vd" style="left:235px;top:19px;font-size:12.700px;line-height:16px">Current Measure</div><div class="abs" style="left:8px;top:45px;width:200px;height:86px;background:#f0f0f0"></div><svg class="abs" style="left:8px;top:45px" width="200" height="86" viewBox="14 433 200 86"><path d="M14 477.500H214" stroke="#666" stroke-width="1" stroke-dasharray="3 3"/><rect x="14" y="513" width="200" height="6" fill="#000"/><clipPath id="mc"><rect x="14" y="500" width="200" height="14"/></clipPath><g clip-path="url(#mc)"><ellipse cx="39" cy="515" rx="27" ry="7.200" fill="#000"/><ellipse cx="39" cy="514.500" rx="22.500" ry="5.200" fill="#a80000"/><ellipse cx="89" cy="515" rx="27" ry="7.200" fill="#000"/><ellipse cx="89" cy="514.500" rx="22.500" ry="5.200" fill="#00a000"/><ellipse cx="140" cy="515" rx="27" ry="7.200" fill="#000"/><ellipse cx="140" cy="514.500" rx="22.500" ry="5.200" fill="#0000b4"/><ellipse cx="191" cy="515" rx="27" ry="7.200" fill="#000"/><ellipse cx="191" cy="514.500" rx="22.500" ry="5.200" fill="#c09018"/></g><g font-family="Liberation Serif,serif" font-weight="bold" font-size="11.500" text-anchor="middle" fill="#000"><text x="39" y="506">0.0%</text><text x="89" y="506">0.0%</text><text x="140" y="506">0.0%</text><text x="192" y="506">dE 0.0</text></g></svg><div class="abs" style="left:10px;top:145px;width:192px;height:74px;background:#f0f0f0"></div><div class="abs lsb" style="left:29px;top:145px;font-size:13.500px;line-height:16px;letter-spacing:0.3px">Measure</div><div class="abs lsb" style="left:121px;top:145px;font-size:13.500px;line-height:16px;letter-spacing:0.05px">Reference</div><div class="abs vd" style="left:12px;top:234px;font-size:12.500px;line-height:16px">Target</div><div class="abs" style="left:44px;top:250px;width:116px;height:89px;background:conic-gradient(from 0deg at 50% 50%, #40ff00 0deg, #a0e400 26deg, #ffc400 52deg, #ff6a00 70deg, #ff0000 90deg, #ff0050 110deg, #ff0090 127deg, #c400b0 150deg, #8800c8 180deg, #4000e4 210deg, #0000ff 233deg, #0044e0 250deg, #0084c0 270deg, #00c09c 290deg, #00ff80 307deg, #20ff30 335deg, #40ff00 360deg);border-left:1px solid #000;border-top:1px solid #000;border-right:1px solid #000;box-sizing:border-box"><div class="abs" style="left:16px;top:12px;width:80px;height:61px;background:#000;border:1px solid #fff;border-radius:8px"></div><svg class="abs" style="left:-1px;top:-1px" width="116" height="89"><path d="M58.500 13V76M15 44.500H102" stroke="#fff" stroke-width="1" stroke-dasharray="4 3"/><ellipse cx="58.500" cy="44.500" rx="21" ry="16" fill="none" stroke="#fff" stroke-width="1" stroke-dasharray="4 3"/></svg></div><div class="abs" style="left:214px;top:42px;width:153px;height:577px;background:#f0f0f0;border-left:2px solid #6a6a6a;border-top:2px solid #6a6a6a;border-right:1px solid #fff;border-bottom:1px solid #fff;box-sizing:border-box"></div><div class="abs" style="left:216px;top:44px;width:133px;height:552px;background:#c0c0c0"></div><div class="abs rh" style="left:216px;top:44px;width:52px;height:22px"><span>Y cd/m<sup>2</sup></span></div><div class="abs" style="left:216px;top:66px;width:53px;height:1px;background:#606060"></div><div class="abs" style="left:269px;top:44px;width:80px;height:22px;background:#fff"></div><div class="abs rh" style="left:216px;top:67px;width:52px;height:22px"><span>Y ftL</span></div><div class="abs" style="left:216px;top:89px;width:53px;height:1px;background:#606060"></div><div class="abs" style="left:269px;top:67px;width:80px;height:22px;background:#fff"></div><div class="abs rh" style="left:216px;top:90px;width:52px;height:22px"><span>T°</span></div><div class="abs" style="left:216px;top:112px;width:53px;height:1px;background:#606060"></div><div class="abs" style="left:269px;top:90px;width:80px;height:22px;background:#fff"></div><div class="abs rh" style="left:216px;top:113px;width:52px;height:22px"><span>X</span></div><div class="abs" style="left:216px;top:135px;width:53px;height:1px;background:#606060"></div><div class="abs" style="left:269px;top:113px;width:80px;height:22px;background:#e0e0e0"></div><div class="abs rh" style="left:216px;top:136px;width:52px;height:22px"><span>Y</span></div><div class="abs" style="left:216px;top:158px;width:53px;height:1px;background:#606060"></div><div class="abs" style="left:269px;top:136px;width:80px;height:22px;background:#e0e0e0"></div><div class="abs rh" style="left:216px;top:159px;width:52px;height:22px"><span>Z</span></div><div class="abs" style="left:216px;top:181px;width:53px;height:1px;background:#606060"></div><div class="abs" style="left:269px;top:159px;width:80px;height:22px;background:#e0e0e0"></div><div class="abs rh" style="left:216px;top:182px;width:52px;height:22px"><span>R</span></div><div class="abs" style="left:216px;top:204px;width:53px;height:1px;background:#606060"></div><div class="abs" style="left:269px;top:182px;width:80px;height:22px;background:#fff"></div><div class="abs rh" style="left:216px;top:205px;width:52px;height:22px"><span>G</span></div><div class="abs" style="left:216px;top:227px;width:53px;height:1px;background:#606060"></div><div class="abs" style="left:269px;top:205px;width:80px;height:22px;background:#fff"></div><div class="abs rh" style="left:216px;top:228px;width:52px;height:22px"><span>B</span></div><div class="abs" style="left:216px;top:250px;width:53px;height:1px;background:#606060"></div><div class="abs" style="left:269px;top:228px;width:80px;height:22px;background:#fff"></div><div class="abs rh" style="left:216px;top:251px;width:52px;height:22px"><span>x</span></div><div class="abs" style="left:216px;top:273px;width:53px;height:1px;background:#606060"></div><div class="abs" style="left:269px;top:251px;width:80px;height:22px;background:#e0e0e0"></div><div class="abs rh" style="left:216px;top:274px;width:52px;height:22px"><span>y</span></div><div class="abs" style="left:216px;top:296px;width:53px;height:1px;background:#606060"></div><div class="abs" style="left:269px;top:274px;width:80px;height:22px;background:#e0e0e0"></div><div class="abs rh" style="left:216px;top:297px;width:52px;height:22px"><span>Y</span></div><div class="abs" style="left:216px;top:319px;width:53px;height:1px;background:#606060"></div><div class="abs" style="left:269px;top:297px;width:80px;height:22px;background:#e0e0e0"></div><div class="abs rh" style="left:216px;top:320px;width:52px;height:22px"><span>x</span></div><div class="abs" style="left:216px;top:342px;width:53px;height:1px;background:#606060"></div><div class="abs" style="left:269px;top:320px;width:80px;height:22px;background:#fff"></div><div class="abs rh" style="left:216px;top:343px;width:52px;height:22px"><span>y</span></div><div class="abs" style="left:216px;top:365px;width:53px;height:1px;background:#606060"></div><div class="abs" style="left:269px;top:343px;width:80px;height:22px;background:#fff"></div><div class="abs rh" style="left:216px;top:366px;width:52px;height:22px"><span>z</span></div><div class="abs" style="left:216px;top:388px;width:53px;height:1px;background:#606060"></div><div class="abs" style="left:269px;top:366px;width:80px;height:22px;background:#fff"></div><div class="abs rh" style="left:216px;top:389px;width:52px;height:22px"><span>L</span></div><div class="abs" style="left:216px;top:411px;width:53px;height:1px;background:#606060"></div><div class="abs" style="left:269px;top:389px;width:80px;height:22px;background:#e0e0e0"></div><div class="abs rh" style="left:216px;top:412px;width:52px;height:22px"><span>a</span></div><div class="abs" style="left:216px;top:434px;width:53px;height:1px;background:#606060"></div><div class="abs" style="left:269px;top:412px;width:80px;height:22px;background:#e0e0e0"></div><div class="abs rh" style="left:216px;top:435px;width:52px;height:22px"><span>b</span></div><div class="abs" style="left:216px;top:457px;width:53px;height:1px;background:#606060"></div><div class="abs" style="left:269px;top:435px;width:80px;height:22px;background:#e0e0e0"></div><div class="abs rh" style="left:216px;top:458px;width:52px;height:22px"><span>L</span></div><div class="abs" style="left:216px;top:480px;width:53px;height:1px;background:#606060"></div><div class="abs" style="left:269px;top:458px;width:80px;height:22px;background:#fff"></div><div class="abs rh" style="left:216px;top:481px;width:52px;height:22px"><span>C</span></div><div class="abs" style="left:216px;top:503px;width:53px;height:1px;background:#606060"></div><div class="abs" style="left:269px;top:481px;width:80px;height:22px;background:#fff"></div><div class="abs rh" style="left:216px;top:504px;width:52px;height:22px"><span>H</span></div><div class="abs" style="left:216px;top:526px;width:53px;height:1px;background:#606060"></div><div class="abs" style="left:269px;top:504px;width:80px;height:22px;background:#fff"></div><div class="abs rh" style="left:216px;top:527px;width:52px;height:22px"><span>L</span></div><div class="abs" style="left:216px;top:549px;width:53px;height:1px;background:#606060"></div><div class="abs" style="left:269px;top:527px;width:80px;height:22px;background:#e0e0e0"></div><div class="abs rh" style="left:216px;top:550px;width:52px;height:22px"><span>M</span></div><div class="abs" style="left:216px;top:572px;width:53px;height:1px;background:#606060"></div><div class="abs" style="left:269px;top:550px;width:80px;height:22px;background:#e0e0e0"></div><div class="abs rh" style="left:216px;top:573px;width:52px;height:22px"><span>S</span></div><div class="abs" style="left:216px;top:595px;width:53px;height:1px;background:#606060"></div><div class="abs" style="left:269px;top:573px;width:80px;height:22px;background:#e0e0e0"></div><div class="abs" style="left:268px;top:44px;width:1px;height:552px;background:#707070"></div><div class="abs" style="left:216px;top:596px;width:133px;height:22px;background:#a0a0a0"></div><svg class="abs" style="left:353px;top:49px" width="10" height="8"><path d="M0 7h9l-4.500-6z" fill="#a8a8a8"/></svg><svg class="abs" style="left:353px;top:607px" width="10" height="8"><path d="M0 1h9l-4.500 6z" fill="#a8a8a8"/></svg></div>
<div class="abs gbox " style="left:391px;top:387px;width:1502px;height:625px"><div class="ghdr" style="height:18px"><span>Information</span></div><div class="abs combo" style="left:5px;top:21px;width:300px;height:21px"><div class="abs" style="left:1px;top:2px;width:279px;height:16px;background:#0078d7"></div><span class="vd" style="position:absolute;left:3px;top:1px;font-size:12.500px;line-height:17px;color:#fff">Target - CIE</span><div class="cbtn" style="left:281px;top:1px;width:17px;height:19px"><i></i></div></div><div class="abs" style="left:6px;top:51px;width:748px;height:570px;background:conic-gradient(from 0deg at 50% 50%, #40ff00 0deg, #a0e400 26deg, #ffc400 52deg, #ff6a00 70deg, #ff0000 90deg, #ff0050 110deg, #ff0090 127deg, #c400b0 150deg, #8800c8 180deg, #4000e4 210deg, #0000ff 233deg, #0044e0 250deg, #0084c0 270deg, #00c09c 290deg, #00ff80 307deg, #20ff30 335deg, #40ff00 360deg);border-left:1px solid #000;border-top:1px solid #000;border-right:1px solid #000;box-sizing:border-box"><div class="abs" style="left:111px;top:84px;width:523px;height:398px;background:#000;border:1px solid #fff;border-radius:9px"></div><svg class="abs" style="left:0;top:0" width="748" height="570"><path d="M374.500 58V513M79 284.500H669" stroke="#fff" stroke-width="1" stroke-dasharray="3 3" fill="none"/><ellipse cx="374" cy="284.500" rx="148" ry="114" fill="none" stroke="#fff" stroke-width="1" stroke-dasharray="3 3"/></svg></div><div class="abs" style="left:755px;top:52px;width:745px;height:566px;background:#02080a;border-left:1px solid #707070;border-top:1px solid #707070;border-right:1px solid #fff;border-bottom:1px solid #fff;box-shadow:inset 2px 2px 0 #a0a0a0;box-sizing:border-box"></div></div>
<svg class="abs" style="left:1150px;top:443px" width="740" height="561" viewBox="1150 443 740 561">
<defs>
<clipPath id="cl"><path d="M1342.5 968.0C1341.2 967.5 1337.6 966.6 1335.0 964.7C1332.4 962.8 1330.3 960.8 1326.7 956.7C1323.1 952.6 1318.9 948.1 1313.3 940.0C1307.7 931.9 1300.2 920.9 1293.3 908.3C1286.4 895.7 1277.1 875.6 1271.7 864.2C1266.3 852.8 1264.2 848.0 1260.8 840.0C1257.4 832.0 1254.1 824.0 1251.2 816.0C1248.3 808.0 1245.9 799.7 1243.3 791.7C1240.7 783.8 1238.0 775.8 1235.8 768.3C1233.6 760.8 1231.8 753.6 1230.0 746.7C1228.2 739.8 1226.5 733.4 1225.0 726.7C1223.5 720.0 1222.0 714.2 1220.8 706.7C1219.5 699.2 1218.3 689.5 1217.5 681.7C1216.7 673.9 1216.3 667.0 1215.8 660.0C1215.3 653.0 1214.9 648.9 1214.7 640.0C1214.5 631.1 1214.5 616.2 1214.7 606.7C1214.9 597.2 1215.3 589.7 1215.8 583.3C1216.3 576.9 1216.8 573.0 1217.5 568.3C1218.2 563.6 1219.0 559.2 1220.0 555.0C1221.0 550.8 1222.0 546.8 1223.3 543.3C1224.5 539.8 1225.8 537.0 1227.5 534.2C1229.2 531.4 1230.9 528.9 1233.3 526.3C1235.7 523.6 1238.6 520.6 1241.7 518.3C1244.8 516.0 1247.8 514.4 1251.7 512.5C1255.6 510.6 1260.6 508.3 1265.0 507.0C1269.4 505.7 1274.1 505.1 1278.3 504.7C1282.5 504.3 1285.8 504.2 1290.0 504.5C1294.2 504.8 1298.8 505.7 1303.3 506.7C1307.8 507.7 1311.7 508.7 1316.7 510.3C1321.7 511.9 1327.8 514.2 1333.3 516.3C1338.8 518.4 1345.3 521.0 1350.0 523.0C1354.7 525.0 1357.2 525.9 1361.7 528.0C1366.2 530.1 1368.4 531.3 1376.7 535.8C1385.0 540.3 1398.1 546.9 1411.7 555.0C1425.3 563.1 1440.2 572.5 1458.3 584.2C1476.3 595.9 1492.6 606.5 1520.0 625.0C1547.4 643.5 1591.7 673.9 1622.5 695.0C1653.3 716.1 1677.5 732.8 1705.0 751.7C1732.5 770.6 1770.7 796.7 1787.5 808.3C1804.3 819.9 1802.8 819.1 1805.8 821.3Z"/></clipPath>
<linearGradient id="s0" gradientUnits="userSpaceOnUse" x1="1255" x2="1316" y1="0" y2="0"><stop offset="0.000" stop-color="#00ffab"/><stop offset="0.333" stop-color="#00ffa5"/><stop offset="0.667" stop-color="#00ffa0"/><stop offset="1.000" stop-color="#00ff99"/></linearGradient>
<linearGradient id="s1" gradientUnits="userSpaceOnUse" x1="1239" x2="1338" y1="0" y2="0"><stop offset="0.000" stop-color="#00ffaf"/><stop offset="0.250" stop-color="#00ffaa"/><stop offset="0.500" stop-color="#00ffa3"/><stop offset="0.750" stop-color="#00ff9b"/><stop offset="1.000" stop-color="#00ff92"/></linearGradient>
<linearGradient id="s2" gradientUnits="userSpaceOnUse" x1="1230" x2="1356" y1="0" y2="0"><stop offset="0.000" stop-color="#00ffb2"/><stop offset="0.200" stop-color="#00ffad"/><stop offset="0.400" stop-color="#00ffa7"/><stop offset="0.600" stop-color="#00ff9f"/><stop offset="0.800" stop-color="#00ff96"/><stop offset="1.000" stop-color="#00ff8b"/></linearGradient>
<linearGradient id="s3" gradientUnits="userSpaceOnUse" x1="1223" x2="1372" y1="0" y2="0"><stop offset="0.000" stop-color="#00ffb5"/><stop offset="0.167" stop-color="#00ffb0"/><stop offset="0.333" stop-color="#00ffaa"/><stop offset="0.500" stop-color="#00ffa3"/><stop offset="0.667" stop-color="#00ff9b"/><stop offset="0.833" stop-color="#00ff91"/><stop offset="1.000" stop-color="#00ff84"/></linearGradient>
<linearGradient id="s4" gradientUnits="userSpaceOnUse" x1="1219" x2="1385" y1="0" y2="0"><stop offset="0.000" stop-color="#00ffb7"/><stop offset="0.143" stop-color="#00ffb2"/><stop offset="0.286" stop-color="#00ffad"/><stop offset="0.429" stop-color="#00ffa7"/><stop offset="0.571" stop-color="#00ff9f"/><stop offset="0.714" stop-color="#00ff96"/><stop offset="0.857" stop-color="#00ff8b"/><stop offset="1.000" stop-color="#00ff7d"/></linearGradient>
<linearGradient id="s5" gradientUnits="userSpaceOnUse" x1="1215" x2="1398" y1="0" y2="0"><stop offset="0.000" stop-color="#00ffb9"/><stop offset="0.125" stop-color="#00ffb4"/><stop offset="0.250" stop-color="#00ffaf"/><stop offset="0.375" stop-color="#00ffaa"/><stop offset="0.500" stop-color="#00ffa3"/><stop offset="0.625" stop-color="#00ff9b"/><stop offset="0.750" stop-color="#00ff91"/><stop offset="0.875" stop-color="#00ff85"/><stop offset="1.000" stop-color="#00ff75"/></linearGradient>
<linearGradient id="s6" gradientUnits="userSpaceOnUse" x1="1213" x2="1411" y1="0" y2="0"><stop offset="0.000" stop-color="#00ffba"/><stop offset="0.125" stop-color="#00ffb6"/><stop offset="0.250" stop-color="#00ffb0"/><stop offset="0.375" stop-color="#00ffaa"/><stop offset="0.500" stop-color="#00ffa3"/><stop offset="0.625" stop-color="#00ff9a"/><stop offset="0.750" stop-color="#00ff8e"/><stop offset="0.875" stop-color="#00ff80"/><stop offset="1.000" stop-color="#00ff6b"/></linearGradient>
<linearGradient id="s7" gradientUnits="userSpaceOnUse" x1="1212" x2="1423" y1="0" y2="0"><stop offset="0.000" stop-color="#00ffbc"/><stop offset="0.111" stop-color="#00ffb8"/><stop offset="0.222" stop-color="#00ffb3"/><stop offset="0.333" stop-color="#00ffad"/><stop offset="0.444" stop-color="#00ffa6"/><stop offset="0.556" stop-color="#00ff9e"/><stop offset="0.667" stop-color="#00ff94"/><stop offset="0.778" stop-color="#00ff88"/><stop offset="0.889" stop-color="#00ff77"/><stop offset="1.000" stop-color="#00ff5f"/></linearGradient>
<linearGradient id="s8" gradientUnits="userSpaceOnUse" x1="1210" x2="1434" y1="0" y2="0"><stop offset="0.000" stop-color="#00ffbe"/><stop offset="0.111" stop-color="#00ffb9"/><stop offset="0.222" stop-color="#00ffb4"/><stop offset="0.333" stop-color="#00ffae"/><stop offset="0.444" stop-color="#00ffa6"/><stop offset="0.556" stop-color="#00ff9e"/><stop offset="0.667" stop-color="#00ff92"/><stop offset="0.778" stop-color="#00ff84"/><stop offset="0.889" stop-color="#00ff70"/><stop offset="1.000" stop-color="#00ff50"/></linearGradient>
<linearGradient id="s9" gradientUnits="userSpaceOnUse" x1="1209" x2="1445" y1="0" y2="0"><stop offset="0.000" stop-color="#00ffbf"/><stop offset="0.100" stop-color="#00ffbb"/><stop offset="0.200" stop-color="#00ffb6"/><stop offset="0.300" stop-color="#00ffb0"/><stop offset="0.400" stop-color="#00ffaa"/><stop offset="0.500" stop-color="#00ffa2"/><stop offset="0.600" stop-color="#00ff98"/><stop offset="0.700" stop-color="#00ff8c"/><stop offset="0.800" stop-color="#00ff7c"/><stop offset="0.900" stop-color="#00ff64"/><stop offset="1.000" stop-color="#00ff38"/></linearGradient>
<linearGradient id="s10" gradientUnits="userSpaceOnUse" x1="1208" x2="1456" y1="0" y2="0"><stop offset="0.000" stop-color="#00ffc1"/><stop offset="0.100" stop-color="#00ffbc"/><stop offset="0.200" stop-color="#00ffb7"/><stop offset="0.300" stop-color="#00ffb1"/><stop offset="0.400" stop-color="#00ffaa"/><stop offset="0.500" stop-color="#00ffa2"/><stop offset="0.600" stop-color="#00ff97"/><stop offset="0.700" stop-color="#00ff89"/><stop offset="0.800" stop-color="#00ff76"/><stop offset="0.900" stop-color="#00ff58"/><stop offset="1.000" stop-color="#23ff00"/></linearGradient>
<linearGradient id="s11" gradientUnits="userSpaceOnUse" x1="1208" x2="1468" y1="0" y2="0"><stop offset="0.000" stop-color="#00ffc2"/><stop offset="0.100" stop-color="#00ffbe"/><stop offset="0.200" stop-color="#00ffb8"/><stop offset="0.300" stop-color="#00ffb2"/><stop offset="0.400" stop-color="#00ffab"/><stop offset="0.500" stop-color="#00ffa1"/><stop offset="0.600" stop-color="#00ff96"/><stop offset="0.700" stop-color="#00ff86"/><stop offset="0.800" stop-color="#00ff6f"/><stop offset="0.900" stop-color="#00ff47"/><stop offset="1.000" stop-color="#4aff00"/></linearGradient>
<linearGradient id="s12" gradientUnits="userSpaceOnUse" x1="1207" x2="1478" y1="0" y2="0"><stop offset="0.000" stop-color="#00ffc4"/><stop offset="0.091" stop-color="#00ffbf"/><stop offset="0.182" stop-color="#00ffbb"/><stop offset="0.273" stop-color="#00ffb5"/><stop offset="0.364" stop-color="#00ffae"/><stop offset="0.455" stop-color="#00ffa6"/><stop offset="0.545" stop-color="#00ff9c"/><stop offset="0.636" stop-color="#00ff8e"/><stop offset="0.727" stop-color="#00ff7c"/><stop offset="0.818" stop-color="#00ff60"/><stop offset="0.909" stop-color="#00ff1a"/><stop offset="1.000" stop-color="#61ff00"/></linearGradient>
<linearGradient id="s13" gradientUnits="userSpaceOnUse" x1="1207" x2="1489" y1="0" y2="0"><stop offset="0.000" stop-color="#00ffc5"/><stop offset="0.091" stop-color="#00ffc1"/><stop offset="0.182" stop-color="#00ffbc"/><stop offset="0.273" stop-color="#00ffb6"/><stop offset="0.364" stop-color="#00ffaf"/><stop offset="0.455" stop-color="#00ffa6"/><stop offset="0.545" stop-color="#00ff9b"/><stop offset="0.636" stop-color="#00ff8c"/><stop offset="0.727" stop-color="#00ff77"/><stop offset="0.818" stop-color="#00ff54"/><stop offset="0.909" stop-color="#3cff00"/><stop offset="1.000" stop-color="#74ff00"/></linearGradient>
<linearGradient id="s14" gradientUnits="userSpaceOnUse" x1="1207" x2="1499" y1="0" y2="0"><stop offset="0.000" stop-color="#00ffc7"/><stop offset="0.083" stop-color="#00ffc3"/><stop offset="0.167" stop-color="#00ffbe"/><stop offset="0.250" stop-color="#00ffb8"/><stop offset="0.333" stop-color="#00ffb2"/><stop offset="0.417" stop-color="#00ffaa"/><stop offset="0.500" stop-color="#00ffa0"/><stop offset="0.583" stop-color="#00ff94"/><stop offset="0.667" stop-color="#00ff82"/><stop offset="0.750" stop-color="#00ff68"/><stop offset="0.833" stop-color="#00ff32"/><stop offset="0.917" stop-color="#5cff00"/><stop offset="1.000" stop-color="#85ff00"/></linearGradient>
<linearGradient id="s15" gradientUnits="userSpaceOnUse" x1="1207" x2="1510" y1="0" y2="0"><stop offset="0.000" stop-color="#00ffc8"/><stop offset="0.083" stop-color="#00ffc4"/><stop offset="0.167" stop-color="#00ffbf"/><stop offset="0.250" stop-color="#00ffba"/><stop offset="0.333" stop-color="#00ffb3"/><stop offset="0.417" stop-color="#00ffaa"/><stop offset="0.500" stop-color="#00ffa0"/><stop offset="0.583" stop-color="#00ff92"/><stop offset="0.667" stop-color="#00ff7e"/><stop offset="0.750" stop-color="#00ff5e"/><stop offset="0.833" stop-color="#29ff00"/><stop offset="0.917" stop-color="#6fff00"/><stop offset="1.000" stop-color="#95ff00"/></linearGradient>
<linearGradient id="s16" gradientUnits="userSpaceOnUse" x1="1207" x2="1520" y1="0" y2="0"><stop offset="0.000" stop-color="#00ffca"/><stop offset="0.077" stop-color="#00ffc6"/><stop offset="0.154" stop-color="#00ffc1"/><stop offset="0.231" stop-color="#00ffbc"/><stop offset="0.308" stop-color="#00ffb6"/><stop offset="0.385" stop-color="#00ffae"/><stop offset="0.462" stop-color="#00ffa5"/><stop offset="0.538" stop-color="#00ff99"/><stop offset="0.615" stop-color="#00ff88"/><stop offset="0.692" stop-color="#00ff70"/><stop offset="0.769" stop-color="#00ff41"/><stop offset="0.846" stop-color="#56ff00"/><stop offset="0.923" stop-color="#84ff00"/><stop offset="1.000" stop-color="#a4ff00"/></linearGradient>
<linearGradient id="s17" gradientUnits="userSpaceOnUse" x1="1207" x2="1531" y1="0" y2="0"><stop offset="0.000" stop-color="#00ffcb"/><stop offset="0.077" stop-color="#00ffc7"/><stop offset="0.154" stop-color="#00ffc3"/><stop offset="0.231" stop-color="#00ffbd"/><stop offset="0.308" stop-color="#00ffb7"/><stop offset="0.385" stop-color="#00ffaf"/><stop offset="0.462" stop-color="#00ffa5"/><stop offset="0.538" stop-color="#00ff98"/><stop offset="0.615" stop-color="#00ff85"/><stop offset="0.692" stop-color="#00ff68"/><stop offset="0.769" stop-color="#00ff1a"/><stop offset="0.846" stop-color="#6bff00"/><stop offset="0.923" stop-color="#94ff00"/><stop offset="1.000" stop-color="#b2ff00"/></linearGradient>
<linearGradient id="s18" gradientUnits="userSpaceOnUse" x1="1207" x2="1541" y1="0" y2="0"><stop offset="0.000" stop-color="#00ffcd"/><stop offset="0.077" stop-color="#00ffc9"/><stop offset="0.154" stop-color="#00ffc4"/><stop offset="0.231" stop-color="#00ffbf"/><stop offset="0.308" stop-color="#00ffb8"/><stop offset="0.385" stop-color="#00ffb0"/><stop offset="0.462" stop-color="#00ffa5"/><stop offset="0.538" stop-color="#00ff96"/><stop offset="0.615" stop-color="#00ff81"/><stop offset="0.692" stop-color="#00ff5e"/><stop offset="0.769" stop-color="#3bff00"/><stop offset="0.846" stop-color="#7cff00"/><stop offset="0.923" stop-color="#a3ff00"/><stop offset="1.000" stop-color="#c0ff00"/></linearGradient>
<linearGradient id="s19" gradientUnits="userSpaceOnUse" x1="1207" x2="1551" y1="0" y2="0"><stop offset="0.000" stop-color="#00ffce"/><stop offset="0.071" stop-color="#00ffcb"/><stop offset="0.143" stop-color="#00ffc6"/><stop offset="0.214" stop-color="#00ffc1"/><stop offset="0.286" stop-color="#00ffbb"/><stop offset="0.357" stop-color="#00ffb4"/><stop offset="0.429" stop-color="#00ffaa"/><stop offset="0.500" stop-color="#00ff9e"/><stop offset="0.571" stop-color="#00ff8c"/><stop offset="0.643" stop-color="#00ff71"/><stop offset="0.714" stop-color="#00ff37"/><stop offset="0.786" stop-color="#65ff00"/><stop offset="0.857" stop-color="#93ff00"/><stop offset="0.929" stop-color="#b3ff00"/><stop offset="1.000" stop-color="#ceff00"/></linearGradient>
<linearGradient id="s20" gradientUnits="userSpaceOnUse" x1="1207" x2="1562" y1="0" y2="0"><stop offset="0.000" stop-color="#00ffd0"/><stop offset="0.071" stop-color="#00ffcc"/><stop offset="0.143" stop-color="#00ffc8"/><stop offset="0.214" stop-color="#00ffc3"/><stop offset="0.286" stop-color="#00ffbc"/><stop offset="0.357" stop-color="#00ffb5"/><stop offset="0.429" stop-color="#00ffaa"/><stop offset="0.500" stop-color="#00ff9d"/><stop offset="0.571" stop-color="#00ff89"/><stop offset="0.643" stop-color="#00ff69"/><stop offset="0.714" stop-color="#2aff1b"/><stop offset="0.786" stop-color="#78ff00"/><stop offset="0.857" stop-color="#a2ff00"/><stop offset="0.929" stop-color="#c2ff00"/><stop offset="1.000" stop-color="#dcff00"/></linearGradient>
<linearGradient id="s21" gradientUnits="userSpaceOnUse" x1="1207" x2="1572" y1="0" y2="0"><stop offset="0.000" stop-color="#00ffd2"/><stop offset="0.067" stop-color="#00ffce"/><stop offset="0.133" stop-color="#00ffca"/><stop offset="0.200" stop-color="#00ffc5"/><stop offset="0.267" stop-color="#00ffc0"/><stop offset="0.333" stop-color="#00ffb8"/><stop offset="0.400" stop-color="#00ffaf"/><stop offset="0.467" stop-color="#00ffa4"/><stop offset="0.533" stop-color="#00ff93"/><stop offset="0.600" stop-color="#00ff7a"/><stop offset="0.667" stop-color="#00ff48"/><stop offset="0.733" stop-color="#61ff18"/><stop offset="0.800" stop-color="#92ff00"/><stop offset="0.867" stop-color="#b6ff00"/><stop offset="0.933" stop-color="#d2ff00"/><stop offset="1.000" stop-color="#ebff00"/></linearGradient>
<linearGradient id="s22" gradientUnits="userSpaceOnUse" x1="1207" x2="1582" y1="0" y2="0"><stop offset="0.000" stop-color="#00ffd3"/><stop offset="0.067" stop-color="#00ffd0"/><stop offset="0.133" stop-color="#00ffcc"/><stop offset="0.200" stop-color="#00ffc7"/><stop offset="0.267" stop-color="#00ffc1"/><stop offset="0.333" stop-color="#00ffba"/><stop offset="0.400" stop-color="#00ffb0"/><stop offset="0.467" stop-color="#00ffa3"/><stop offset="0.533" stop-color="#00ff91"/><stop offset="0.600" stop-color="#00ff74"/><stop offset="0.667" stop-color="#38ff43"/><stop offset="0.733" stop-color="#77ff25"/><stop offset="0.800" stop-color="#a2ff00"/><stop offset="0.867" stop-color="#c5ff00"/><stop offset="0.933" stop-color="#e1ff00"/><stop offset="1.000" stop-color="#faff00"/></linearGradient>
<linearGradient id="s23" gradientUnits="userSpaceOnUse" x1="1208" x2="1592" y1="0" y2="0"><stop offset="0.000" stop-color="#00ffd5"/><stop offset="0.067" stop-color="#00ffd2"/><stop offset="0.133" stop-color="#00ffcd"/><stop offset="0.200" stop-color="#00ffc8"/><stop offset="0.267" stop-color="#00ffc2"/><stop offset="0.333" stop-color="#00ffbb"/><stop offset="0.400" stop-color="#00ffb1"/><stop offset="0.467" stop-color="#00ffa3"/><stop offset="0.533" stop-color="#00ff8f"/><stop offset="0.600" stop-color="#00ff6c"/><stop offset="0.667" stop-color="#58ff49"/><stop offset="0.733" stop-color="#8bff2f"/><stop offset="0.800" stop-color="#b2ff00"/><stop offset="0.867" stop-color="#d4ff00"/><stop offset="0.933" stop-color="#f0ff00"/><stop offset="1.000" stop-color="#fff600"/></linearGradient>
<linearGradient id="s24" gradientUnits="userSpaceOnUse" x1="1208" x2="1603" y1="0" y2="0"><stop offset="0.000" stop-color="#00ffd7"/><stop offset="0.062" stop-color="#00ffd4"/><stop offset="0.125" stop-color="#00ffd0"/><stop offset="0.188" stop-color="#00ffcb"/><stop offset="0.250" stop-color="#00ffc6"/><stop offset="0.312" stop-color="#00ffbf"/><stop offset="0.375" stop-color="#00ffb6"/><stop offset="0.438" stop-color="#00ffaa"/><stop offset="0.500" stop-color="#00ff99"/><stop offset="0.562" stop-color="#00ff7d"/><stop offset="0.625" stop-color="#45ff5a"/><stop offset="0.688" stop-color="#7fff49"/><stop offset="0.750" stop-color="#a7ff2e"/><stop offset="0.812" stop-color="#c9ff00"/><stop offset="0.875" stop-color="#e7ff00"/><stop offset="0.938" stop-color="#fffd00"/><stop offset="1.000" stop-color="#ffe800"/></linearGradient>
<linearGradient id="s25" gradientUnits="userSpaceOnUse" x1="1209" x2="1613" y1="0" y2="0"><stop offset="0.000" stop-color="#00ffd9"/><stop offset="0.062" stop-color="#00ffd5"/><stop offset="0.125" stop-color="#00ffd2"/><stop offset="0.188" stop-color="#00ffcd"/><stop offset="0.250" stop-color="#00ffc7"/><stop offset="0.312" stop-color="#00ffc0"/><stop offset="0.375" stop-color="#00ffb7"/><stop offset="0.438" stop-color="#00ffaa"/><stop offset="0.500" stop-color="#00ff97"/><stop offset="0.562" stop-color="#00ff77"/><stop offset="0.625" stop-color="#61ff60"/><stop offset="0.688" stop-color="#92ff50"/><stop offset="0.750" stop-color="#b8ff37"/><stop offset="0.812" stop-color="#d9ff00"/><stop offset="0.875" stop-color="#f7ff00"/><stop offset="0.938" stop-color="#ffee00"/><stop offset="1.000" stop-color="#ffdb00"/></linearGradient>
<linearGradient id="s26" gradientUnits="userSpaceOnUse" x1="1209" x2="1623" y1="0" y2="0"><stop offset="0.000" stop-color="#00ffda"/><stop offset="0.062" stop-color="#00ffd7"/><stop offset="0.125" stop-color="#00ffd3"/><stop offset="0.188" stop-color="#00ffcf"/><stop offset="0.250" stop-color="#00ffc9"/><stop offset="0.312" stop-color="#00ffc2"/><stop offset="0.375" stop-color="#00ffb8"/><stop offset="0.438" stop-color="#00ffaa"/><stop offset="0.500" stop-color="#00ff95"/><stop offset="0.562" stop-color="#26ff73"/><stop offset="0.625" stop-color="#78ff66"/><stop offset="0.688" stop-color="#a4ff56"/><stop offset="0.750" stop-color="#c9ff3f"/><stop offset="0.812" stop-color="#eaff00"/><stop offset="0.875" stop-color="#fff600"/><stop offset="0.938" stop-color="#ffe000"/><stop offset="1.000" stop-color="#ffce00"/></linearGradient>
<linearGradient id="s27" gradientUnits="userSpaceOnUse" x1="1210" x2="1633" y1="0" y2="0"><stop offset="0.000" stop-color="#00ffdc"/><stop offset="0.059" stop-color="#00ffd9"/><stop offset="0.118" stop-color="#00ffd6"/><stop offset="0.176" stop-color="#00ffd2"/><stop offset="0.235" stop-color="#00ffcc"/><stop offset="0.294" stop-color="#00ffc6"/><stop offset="0.353" stop-color="#00ffbd"/><stop offset="0.412" stop-color="#00ffb1"/><stop offset="0.471" stop-color="#00ff9f"/><stop offset="0.529" stop-color="#00ff82"/><stop offset="0.588" stop-color="#6cff74"/><stop offset="0.647" stop-color="#9cff67"/><stop offset="0.706" stop-color="#c1ff57"/><stop offset="0.765" stop-color="#e2ff3f"/><stop offset="0.824" stop-color="#fffd00"/><stop offset="0.882" stop-color="#ffe400"/><stop offset="0.941" stop-color="#ffd100"/><stop offset="1.000" stop-color="#ffc300"/></linearGradient>
<linearGradient id="s28" gradientUnits="userSpaceOnUse" x1="1211" x2="1644" y1="0" y2="0"><stop offset="0.000" stop-color="#00ffde"/><stop offset="0.059" stop-color="#00ffdb"/><stop offset="0.118" stop-color="#00ffd8"/><stop offset="0.176" stop-color="#00ffd4"/><stop offset="0.235" stop-color="#00ffce"/><stop offset="0.294" stop-color="#00ffc8"/><stop offset="0.353" stop-color="#00ffbf"/><stop offset="0.412" stop-color="#00ffb2"/><stop offset="0.471" stop-color="#00ff9e"/><stop offset="0.529" stop-color="#3cff84"/><stop offset="0.588" stop-color="#82ff7a"/><stop offset="0.647" stop-color="#adff6e"/><stop offset="0.706" stop-color="#d2ff5e"/><stop offset="0.765" stop-color="#f4ff47"/><stop offset="0.824" stop-color="#ffec12"/><stop offset="0.882" stop-color="#ffd600"/><stop offset="0.941" stop-color="#ffc500"/><stop offset="1.000" stop-color="#ffb800"/></linearGradient>
<linearGradient id="s29" gradientUnits="userSpaceOnUse" x1="1212" x2="1654" y1="0" y2="0"><stop offset="0.000" stop-color="#00ffe0"/><stop offset="0.059" stop-color="#00ffdd"/><stop offset="0.118" stop-color="#00ffda"/><stop offset="0.176" stop-color="#00ffd6"/><stop offset="0.235" stop-color="#00ffd0"/><stop offset="0.294" stop-color="#00ffca"/><stop offset="0.353" stop-color="#00ffc0"/><stop offset="0.412" stop-color="#00ffb3"/><stop offset="0.471" stop-color="#00ff9d"/><stop offset="0.529" stop-color="#5cff8a"/><stop offset="0.588" stop-color="#95ff80"/><stop offset="0.647" stop-color="#bfff74"/><stop offset="0.706" stop-color="#e4ff65"/><stop offset="0.765" stop-color="#fff84d"/><stop offset="0.824" stop-color="#ffdc20"/><stop offset="0.882" stop-color="#ffc800"/><stop offset="0.941" stop-color="#ffb900"/><stop offset="1.000" stop-color="#ffad00"/></linearGradient>
<linearGradient id="s30" gradientUnits="userSpaceOnUse" x1="1213" x2="1664" y1="0" y2="0"><stop offset="0.000" stop-color="#00ffe2"/><stop offset="0.056" stop-color="#00ffe0"/><stop offset="0.111" stop-color="#00ffdc"/><stop offset="0.167" stop-color="#00ffd9"/><stop offset="0.222" stop-color="#00ffd4"/><stop offset="0.278" stop-color="#00ffce"/><stop offset="0.333" stop-color="#00ffc6"/><stop offset="0.389" stop-color="#00ffba"/><stop offset="0.444" stop-color="#00ffa8"/><stop offset="0.500" stop-color="#4fff95"/><stop offset="0.556" stop-color="#8dff8c"/><stop offset="0.611" stop-color="#b8ff83"/><stop offset="0.667" stop-color="#ddff77"/><stop offset="0.722" stop-color="#fffe67"/><stop offset="0.778" stop-color="#ffe147"/><stop offset="0.833" stop-color="#ffca1f"/><stop offset="0.889" stop-color="#ffba00"/><stop offset="0.944" stop-color="#ffad00"/><stop offset="1.000" stop-color="#ffa300"/></linearGradient>
<linearGradient id="s31" gradientUnits="userSpaceOnUse" x1="1215" x2="1674" y1="0" y2="0"><stop offset="0.000" stop-color="#00ffe4"/><stop offset="0.056" stop-color="#00ffe2"/><stop offset="0.111" stop-color="#00ffdf"/><stop offset="0.167" stop-color="#00ffdb"/><stop offset="0.222" stop-color="#00ffd6"/><stop offset="0.278" stop-color="#00ffd0"/><stop offset="0.333" stop-color="#00ffc8"/><stop offset="0.389" stop-color="#00ffbb"/><stop offset="0.444" stop-color="#00ffa8"/><stop offset="0.500" stop-color="#6aff9b"/><stop offset="0.556" stop-color="#a0ff93"/><stop offset="0.611" stop-color="#caff8a"/><stop offset="0.667" stop-color="#efff7e"/><stop offset="0.722" stop-color="#ffed67"/><stop offset="0.778" stop-color="#ffd249"/><stop offset="0.833" stop-color="#ffbd26"/><stop offset="0.889" stop-color="#ffad00"/><stop offset="0.944" stop-color="#ffa200"/><stop offset="1.000" stop-color="#ff9900"/></linearGradient>
<linearGradient id="s32" gradientUnits="userSpaceOnUse" x1="1216" x2="1684" y1="0" y2="0"><stop offset="0.000" stop-color="#00ffe6"/><stop offset="0.053" stop-color="#00ffe4"/><stop offset="0.105" stop-color="#00ffe1"/><stop offset="0.158" stop-color="#00ffde"/><stop offset="0.211" stop-color="#00ffda"/><stop offset="0.263" stop-color="#00ffd4"/><stop offset="0.316" stop-color="#00ffcd"/><stop offset="0.368" stop-color="#00ffc2"/><stop offset="0.421" stop-color="#00ffb2"/><stop offset="0.474" stop-color="#61ffa5"/><stop offset="0.526" stop-color="#9aff9e"/><stop offset="0.579" stop-color="#c5ff97"/><stop offset="0.632" stop-color="#ebff8d"/><stop offset="0.684" stop-color="#fff17a"/><stop offset="0.737" stop-color="#ffd65f"/><stop offset="0.789" stop-color="#ffc045"/><stop offset="0.842" stop-color="#ffad25"/><stop offset="0.895" stop-color="#ffa000"/><stop offset="0.947" stop-color="#ff9700"/><stop offset="1.000" stop-color="#ff8f00"/></linearGradient>
<linearGradient id="s33" gradientUnits="userSpaceOnUse" x1="1218" x2="1695" y1="0" y2="0"><stop offset="0.000" stop-color="#00ffe9"/><stop offset="0.053" stop-color="#00ffe6"/><stop offset="0.105" stop-color="#00ffe4"/><stop offset="0.158" stop-color="#00ffe1"/><stop offset="0.211" stop-color="#00ffdd"/><stop offset="0.263" stop-color="#00ffd7"/><stop offset="0.316" stop-color="#00ffd0"/><stop offset="0.368" stop-color="#00ffc5"/><stop offset="0.421" stop-color="#00ffb3"/><stop offset="0.474" stop-color="#7affac"/><stop offset="0.526" stop-color="#aeffa6"/><stop offset="0.579" stop-color="#d8ff9e"/><stop offset="0.632" stop-color="#feff95"/><stop offset="0.684" stop-color="#ffe079"/><stop offset="0.737" stop-color="#ffc760"/><stop offset="0.789" stop-color="#ffb347"/><stop offset="0.842" stop-color="#ffa22a"/><stop offset="0.895" stop-color="#ff9400"/><stop offset="0.947" stop-color="#ff8c00"/><stop offset="1.000" stop-color="#ff8500"/></linearGradient>
<linearGradient id="s34" gradientUnits="userSpaceOnUse" x1="1220" x2="1705" y1="0" y2="0"><stop offset="0.000" stop-color="#00ffeb"/><stop offset="0.053" stop-color="#00ffe9"/><stop offset="0.105" stop-color="#00ffe6"/><stop offset="0.158" stop-color="#00ffe3"/><stop offset="0.211" stop-color="#00ffdf"/><stop offset="0.263" stop-color="#00ffda"/><stop offset="0.316" stop-color="#00ffd3"/><stop offset="0.368" stop-color="#00ffc7"/><stop offset="0.421" stop-color="#45ffb9"/><stop offset="0.474" stop-color="#90ffb4"/><stop offset="0.526" stop-color="#c1ffae"/><stop offset="0.579" stop-color="#ebffa6"/><stop offset="0.632" stop-color="#ffed93"/><stop offset="0.684" stop-color="#ffd077"/><stop offset="0.737" stop-color="#ffb960"/><stop offset="0.789" stop-color="#ffa649"/><stop offset="0.842" stop-color="#ff962e"/><stop offset="0.895" stop-color="#ff8900"/><stop offset="0.947" stop-color="#ff8100"/><stop offset="1.000" stop-color="#ff7b00"/></linearGradient>
<linearGradient id="s35" gradientUnits="userSpaceOnUse" x1="1221" x2="1715" y1="0" y2="0"><stop offset="0.000" stop-color="#00ffed"/><stop offset="0.053" stop-color="#00ffeb"/><stop offset="0.105" stop-color="#00ffe9"/><stop offset="0.158" stop-color="#00ffe6"/><stop offset="0.211" stop-color="#00ffe3"/><stop offset="0.263" stop-color="#00ffdd"/><stop offset="0.316" stop-color="#00ffd6"/><stop offset="0.368" stop-color="#00ffca"/><stop offset="0.421" stop-color="#65ffc1"/><stop offset="0.474" stop-color="#a5ffbc"/><stop offset="0.526" stop-color="#d4ffb6"/><stop offset="0.579" stop-color="#ffffaf"/><stop offset="0.632" stop-color="#ffdc90"/><stop offset="0.684" stop-color="#ffc276"/><stop offset="0.737" stop-color="#ffac60"/><stop offset="0.789" stop-color="#ff9a4a"/><stop offset="0.842" stop-color="#ff8a31"/><stop offset="0.895" stop-color="#ff7d00"/><stop offset="0.947" stop-color="#ff7600"/><stop offset="1.000" stop-color="#ff7000"/></linearGradient>
<linearGradient id="s36" gradientUnits="userSpaceOnUse" x1="1223" x2="1725" y1="0" y2="0"><stop offset="0.000" stop-color="#00fff0"/><stop offset="0.050" stop-color="#00ffee"/><stop offset="0.100" stop-color="#00ffec"/><stop offset="0.150" stop-color="#00ffea"/><stop offset="0.200" stop-color="#00ffe7"/><stop offset="0.250" stop-color="#00ffe3"/><stop offset="0.300" stop-color="#00ffdc"/><stop offset="0.350" stop-color="#00ffd3"/><stop offset="0.400" stop-color="#5fffca"/><stop offset="0.450" stop-color="#a1ffc6"/><stop offset="0.500" stop-color="#d1ffc2"/><stop offset="0.550" stop-color="#fcffbc"/><stop offset="0.600" stop-color="#ffde9e"/><stop offset="0.650" stop-color="#ffc385"/><stop offset="0.700" stop-color="#ffae6f"/><stop offset="0.750" stop-color="#ff9b5b"/><stop offset="0.800" stop-color="#ff8b47"/><stop offset="0.850" stop-color="#ff7d30"/><stop offset="0.900" stop-color="#ff7000"/><stop offset="0.950" stop-color="#ff6b00"/><stop offset="1.000" stop-color="#ff6600"/></linearGradient>
<linearGradient id="s37" gradientUnits="userSpaceOnUse" x1="1225" x2="1735" y1="0" y2="0"><stop offset="0.000" stop-color="#00fff2"/><stop offset="0.050" stop-color="#00fff1"/><stop offset="0.100" stop-color="#00ffef"/><stop offset="0.150" stop-color="#00ffed"/><stop offset="0.200" stop-color="#00ffea"/><stop offset="0.250" stop-color="#00ffe7"/><stop offset="0.300" stop-color="#00ffe1"/><stop offset="0.350" stop-color="#00ffd8"/><stop offset="0.400" stop-color="#7affd3"/><stop offset="0.450" stop-color="#b6ffcf"/><stop offset="0.500" stop-color="#e6ffcb"/><stop offset="0.550" stop-color="#ffeeb9"/><stop offset="0.600" stop-color="#ffce9b"/><stop offset="0.650" stop-color="#ffb583"/><stop offset="0.700" stop-color="#ffa16e"/><stop offset="0.750" stop-color="#ff8f5b"/><stop offset="0.800" stop-color="#ff8048"/><stop offset="0.850" stop-color="#ff7232"/><stop offset="0.900" stop-color="#ff640a"/><stop offset="0.950" stop-color="#ff5f00"/><stop offset="1.000" stop-color="#ff5b00"/></linearGradient>
<linearGradient id="s38" gradientUnits="userSpaceOnUse" x1="1227" x2="1746" y1="0" y2="0"><stop offset="0.000" stop-color="#00fff5"/><stop offset="0.050" stop-color="#00fff4"/><stop offset="0.100" stop-color="#00fff3"/><stop offset="0.150" stop-color="#00fff1"/><stop offset="0.200" stop-color="#00ffef"/><stop offset="0.250" stop-color="#00ffeb"/><stop offset="0.300" stop-color="#00ffe6"/><stop offset="0.350" stop-color="#32ffde"/><stop offset="0.400" stop-color="#92ffdc"/><stop offset="0.450" stop-color="#cbffd9"/><stop offset="0.500" stop-color="#fbffd6"/><stop offset="0.550" stop-color="#ffdcb4"/><stop offset="0.600" stop-color="#ffbf99"/><stop offset="0.650" stop-color="#ffa782"/><stop offset="0.700" stop-color="#ff946e"/><stop offset="0.750" stop-color="#ff835b"/><stop offset="0.800" stop-color="#ff7449"/><stop offset="0.850" stop-color="#ff6635"/><stop offset="0.900" stop-color="#ff5815"/><stop offset="0.950" stop-color="#ff5200"/><stop offset="1.000" stop-color="#ff4f00"/></linearGradient>
<linearGradient id="s39" gradientUnits="userSpaceOnUse" x1="1229" x2="1756" y1="0" y2="0"><stop offset="0.000" stop-color="#00fff8"/><stop offset="0.048" stop-color="#00fff7"/><stop offset="0.095" stop-color="#00fff6"/><stop offset="0.143" stop-color="#00fff5"/><stop offset="0.190" stop-color="#00fff3"/><stop offset="0.238" stop-color="#00fff1"/><stop offset="0.286" stop-color="#00ffee"/><stop offset="0.333" stop-color="#2affe8"/><stop offset="0.381" stop-color="#90ffe7"/><stop offset="0.429" stop-color="#caffe5"/><stop offset="0.476" stop-color="#faffe2"/><stop offset="0.524" stop-color="#ffdcc1"/><stop offset="0.571" stop-color="#ffbea4"/><stop offset="0.619" stop-color="#ffa78e"/><stop offset="0.667" stop-color="#ff947a"/><stop offset="0.714" stop-color="#ff8368"/><stop offset="0.762" stop-color="#ff7357"/><stop offset="0.810" stop-color="#ff6546"/><stop offset="0.857" stop-color="#ff5733"/><stop offset="0.905" stop-color="#ff4917"/><stop offset="0.952" stop-color="#ff4400"/><stop offset="1.000" stop-color="#ff4100"/></linearGradient>
<linearGradient id="s40" gradientUnits="userSpaceOnUse" x1="1231" x2="1766" y1="0" y2="0"><stop offset="0.000" stop-color="#00fffb"/><stop offset="0.048" stop-color="#00fffb"/><stop offset="0.095" stop-color="#00fffa"/><stop offset="0.143" stop-color="#00fff9"/><stop offset="0.190" stop-color="#00fff8"/><stop offset="0.238" stop-color="#00fff7"/><stop offset="0.286" stop-color="#00fff5"/><stop offset="0.333" stop-color="#5afff2"/><stop offset="0.381" stop-color="#a8fff1"/><stop offset="0.429" stop-color="#e0fff0"/><stop offset="0.476" stop-color="#ffeedf"/><stop offset="0.524" stop-color="#ffcabc"/><stop offset="0.571" stop-color="#ffafa1"/><stop offset="0.619" stop-color="#ff9a8c"/><stop offset="0.667" stop-color="#ff8779"/><stop offset="0.714" stop-color="#ff7668"/><stop offset="0.762" stop-color="#ff6758"/><stop offset="0.810" stop-color="#ff5847"/><stop offset="0.857" stop-color="#ff4a35"/><stop offset="0.905" stop-color="#ff3a1c"/><stop offset="0.952" stop-color="#ff3200"/><stop offset="1.000" stop-color="#ff3000"/></linearGradient>
<linearGradient id="s41" gradientUnits="userSpaceOnUse" x1="1233" x2="1776" y1="0" y2="0"><stop offset="0.000" stop-color="#00fffe"/><stop offset="0.048" stop-color="#00fffe"/><stop offset="0.095" stop-color="#00fffe"/><stop offset="0.143" stop-color="#00fffe"/><stop offset="0.190" stop-color="#00fffe"/><stop offset="0.238" stop-color="#00fffd"/><stop offset="0.286" stop-color="#00fffd"/><stop offset="0.333" stop-color="#7afffd"/><stop offset="0.381" stop-color="#bffffd"/><stop offset="0.429" stop-color="#f7fffc"/><stop offset="0.476" stop-color="#ffdad8"/><stop offset="0.524" stop-color="#ffbab8"/><stop offset="0.571" stop-color="#ffa19f"/><stop offset="0.619" stop-color="#ff8c8a"/><stop offset="0.667" stop-color="#ff7a78"/><stop offset="0.714" stop-color="#ff6a68"/><stop offset="0.762" stop-color="#ff5a58"/><stop offset="0.810" stop-color="#ff4a48"/><stop offset="0.857" stop-color="#ff3937"/><stop offset="0.905" stop-color="#ff2420"/><stop offset="0.952" stop-color="#ff1100"/><stop offset="1.000" stop-color="#ff1000"/></linearGradient>
<linearGradient id="s42" gradientUnits="userSpaceOnUse" x1="1236" x2="1786" y1="0" y2="0"><stop offset="0.000" stop-color="#00fdff"/><stop offset="0.045" stop-color="#00fcff"/><stop offset="0.091" stop-color="#00fcff"/><stop offset="0.136" stop-color="#00fbff"/><stop offset="0.182" stop-color="#00faff"/><stop offset="0.227" stop-color="#00f9ff"/><stop offset="0.273" stop-color="#00f8ff"/><stop offset="0.318" stop-color="#76f6ff"/><stop offset="0.364" stop-color="#baf5ff"/><stop offset="0.409" stop-color="#eff4ff"/><stop offset="0.455" stop-color="#ffd8e2"/><stop offset="0.500" stop-color="#ffb8c2"/><stop offset="0.545" stop-color="#ff9fa9"/><stop offset="0.591" stop-color="#ff8a94"/><stop offset="0.636" stop-color="#ff7882"/><stop offset="0.682" stop-color="#ff6872"/><stop offset="0.727" stop-color="#ff5863"/><stop offset="0.773" stop-color="#ff4855"/><stop offset="0.818" stop-color="#ff3646"/><stop offset="0.864" stop-color="#ff1e36"/><stop offset="0.909" stop-color="#ff002d"/><stop offset="0.955" stop-color="#ff002b"/><stop offset="1.000" stop-color="#ff002a"/></linearGradient>
<linearGradient id="s43" gradientUnits="userSpaceOnUse" x1="1238" x2="1796" y1="0" y2="0"><stop offset="0.000" stop-color="#00f9ff"/><stop offset="0.045" stop-color="#00f8ff"/><stop offset="0.091" stop-color="#00f7ff"/><stop offset="0.136" stop-color="#00f6ff"/><stop offset="0.182" stop-color="#00f4ff"/><stop offset="0.227" stop-color="#00f1ff"/><stop offset="0.273" stop-color="#00edff"/><stop offset="0.318" stop-color="#8bebff"/><stop offset="0.364" stop-color="#c7e9ff"/><stop offset="0.409" stop-color="#f9e7ff"/><stop offset="0.455" stop-color="#ffc5dc"/><stop offset="0.500" stop-color="#ffa8be"/><stop offset="0.545" stop-color="#ff90a6"/><stop offset="0.591" stop-color="#ff7d92"/><stop offset="0.636" stop-color="#ff6b81"/><stop offset="0.682" stop-color="#ff5a72"/><stop offset="0.727" stop-color="#ff4963"/><stop offset="0.773" stop-color="#ff3655"/><stop offset="0.818" stop-color="#ff1b47"/><stop offset="0.864" stop-color="#ff0040"/><stop offset="0.909" stop-color="#ff003e"/><stop offset="0.955" stop-color="#ff003b"/><stop offset="1.000" stop-color="#ff0039"/></linearGradient>
<linearGradient id="s44" gradientUnits="userSpaceOnUse" x1="1240" x2="1806" y1="0" y2="0"><stop offset="0.000" stop-color="#00f6ff"/><stop offset="0.045" stop-color="#00f4ff"/><stop offset="0.091" stop-color="#00f3ff"/><stop offset="0.136" stop-color="#00f0ff"/><stop offset="0.182" stop-color="#00edff"/><stop offset="0.227" stop-color="#00e8ff"/><stop offset="0.273" stop-color="#48e2ff"/><stop offset="0.318" stop-color="#9be0ff"/><stop offset="0.364" stop-color="#d2ddff"/><stop offset="0.409" stop-color="#ffd7fc"/><stop offset="0.455" stop-color="#ffb4d6"/><stop offset="0.500" stop-color="#ff99ba"/><stop offset="0.545" stop-color="#ff82a4"/><stop offset="0.591" stop-color="#ff6f91"/><stop offset="0.636" stop-color="#ff5c80"/><stop offset="0.682" stop-color="#ff4a71"/><stop offset="0.727" stop-color="#ff3663"/><stop offset="0.773" stop-color="#ff1a56"/><stop offset="0.818" stop-color="#ff004f"/><stop offset="0.864" stop-color="#ff004c"/><stop offset="0.909" stop-color="#ff0049"/><stop offset="0.955" stop-color="#ff0046"/><stop offset="1.000" stop-color="#ff0044"/></linearGradient>
<linearGradient id="s45" gradientUnits="userSpaceOnUse" x1="1243" x2="1814" y1="0" y2="0"><stop offset="0.000" stop-color="#00f2ff"/><stop offset="0.045" stop-color="#00f0ff"/><stop offset="0.091" stop-color="#00eeff"/><stop offset="0.136" stop-color="#00ebff"/><stop offset="0.182" stop-color="#00e6ff"/><stop offset="0.227" stop-color="#00dfff"/><stop offset="0.273" stop-color="#62d8ff"/><stop offset="0.318" stop-color="#a8d4ff"/><stop offset="0.364" stop-color="#dbd1ff"/><stop offset="0.409" stop-color="#ffc5f6"/><stop offset="0.455" stop-color="#ffa4d3"/><stop offset="0.500" stop-color="#ff8ab8"/><stop offset="0.545" stop-color="#ff75a3"/><stop offset="0.591" stop-color="#ff6191"/><stop offset="0.636" stop-color="#ff4e81"/><stop offset="0.682" stop-color="#ff3972"/><stop offset="0.727" stop-color="#ff1c64"/><stop offset="0.773" stop-color="#ff005d"/><stop offset="0.818" stop-color="#ff0059"/><stop offset="0.864" stop-color="#ff0055"/><stop offset="0.909" stop-color="#ff0052"/><stop offset="0.955" stop-color="#ff004f"/><stop offset="1.000" stop-color="#ff004d"/></linearGradient>
<linearGradient id="s46" gradientUnits="userSpaceOnUse" x1="1245" x2="1814" y1="0" y2="0"><stop offset="0.000" stop-color="#00eeff"/><stop offset="0.045" stop-color="#00ecff"/><stop offset="0.091" stop-color="#00e9ff"/><stop offset="0.136" stop-color="#00e4ff"/><stop offset="0.182" stop-color="#00deff"/><stop offset="0.227" stop-color="#00d4ff"/><stop offset="0.273" stop-color="#70cdff"/><stop offset="0.318" stop-color="#aec9ff"/><stop offset="0.364" stop-color="#dec4ff"/><stop offset="0.409" stop-color="#ffb7f4"/><stop offset="0.455" stop-color="#ff98d3"/><stop offset="0.500" stop-color="#ff7fb9"/><stop offset="0.545" stop-color="#ff6aa5"/><stop offset="0.591" stop-color="#ff5593"/><stop offset="0.636" stop-color="#ff4083"/><stop offset="0.682" stop-color="#ff2675"/><stop offset="0.727" stop-color="#ff006b"/><stop offset="0.773" stop-color="#ff0066"/><stop offset="0.818" stop-color="#ff0061"/><stop offset="0.864" stop-color="#ff005d"/><stop offset="0.909" stop-color="#ff005a"/><stop offset="0.955" stop-color="#ff0057"/><stop offset="1.000" stop-color="#ff0054"/></linearGradient>
<linearGradient id="s47" gradientUnits="userSpaceOnUse" x1="1248" x2="1793" y1="0" y2="0"><stop offset="0.000" stop-color="#00eaff"/><stop offset="0.048" stop-color="#00e7ff"/><stop offset="0.095" stop-color="#00e3ff"/><stop offset="0.143" stop-color="#00deff"/><stop offset="0.190" stop-color="#00d6ff"/><stop offset="0.238" stop-color="#00c8ff"/><stop offset="0.286" stop-color="#7fc3ff"/><stop offset="0.333" stop-color="#b7beff"/><stop offset="0.381" stop-color="#e5b8ff"/><stop offset="0.429" stop-color="#ffa7f0"/><stop offset="0.476" stop-color="#ff89d1"/><stop offset="0.524" stop-color="#ff71b9"/><stop offset="0.571" stop-color="#ff5ba4"/><stop offset="0.619" stop-color="#ff4593"/><stop offset="0.667" stop-color="#ff2b84"/><stop offset="0.714" stop-color="#ff0078"/><stop offset="0.762" stop-color="#ff0072"/><stop offset="0.810" stop-color="#ff006d"/><stop offset="0.857" stop-color="#ff0068"/><stop offset="0.905" stop-color="#ff0064"/><stop offset="0.952" stop-color="#ff0061"/><stop offset="1.000" stop-color="#ff005d"/></linearGradient>
<linearGradient id="s48" gradientUnits="userSpaceOnUse" x1="1251" x2="1771" y1="0" y2="0"><stop offset="0.000" stop-color="#00e6ff"/><stop offset="0.050" stop-color="#00e2ff"/><stop offset="0.100" stop-color="#00ddff"/><stop offset="0.150" stop-color="#00d6ff"/><stop offset="0.200" stop-color="#00ccff"/><stop offset="0.250" stop-color="#35bdff"/><stop offset="0.300" stop-color="#8bb8ff"/><stop offset="0.350" stop-color="#bfb2ff"/><stop offset="0.400" stop-color="#eaabff"/><stop offset="0.450" stop-color="#ff97ed"/><stop offset="0.500" stop-color="#ff7bcf"/><stop offset="0.550" stop-color="#ff63b8"/><stop offset="0.600" stop-color="#ff4ca5"/><stop offset="0.650" stop-color="#ff3294"/><stop offset="0.700" stop-color="#ff0086"/><stop offset="0.750" stop-color="#ff007f"/><stop offset="0.800" stop-color="#ff0078"/><stop offset="0.850" stop-color="#ff0073"/><stop offset="0.900" stop-color="#ff006e"/><stop offset="0.950" stop-color="#ff006a"/><stop offset="1.000" stop-color="#ff0066"/></linearGradient>
<linearGradient id="s49" gradientUnits="userSpaceOnUse" x1="1254" x2="1748" y1="0" y2="0"><stop offset="0.000" stop-color="#00e1ff"/><stop offset="0.050" stop-color="#00ddff"/><stop offset="0.100" stop-color="#00d8ff"/><stop offset="0.150" stop-color="#00d0ff"/><stop offset="0.200" stop-color="#00c5ff"/><stop offset="0.250" stop-color="#30b4ff"/><stop offset="0.300" stop-color="#85afff"/><stop offset="0.350" stop-color="#b6a8ff"/><stop offset="0.400" stop-color="#dfa1ff"/><stop offset="0.450" stop-color="#ff94fa"/><stop offset="0.500" stop-color="#ff78db"/><stop offset="0.550" stop-color="#ff60c3"/><stop offset="0.600" stop-color="#ff48b0"/><stop offset="0.650" stop-color="#ff2d9f"/><stop offset="0.700" stop-color="#ff0092"/><stop offset="0.750" stop-color="#ff008a"/><stop offset="0.800" stop-color="#ff0083"/><stop offset="0.850" stop-color="#ff007d"/><stop offset="0.900" stop-color="#ff0078"/><stop offset="0.950" stop-color="#ff0073"/><stop offset="1.000" stop-color="#ff006f"/></linearGradient>
<linearGradient id="s50" gradientUnits="userSpaceOnUse" x1="1257" x2="1726" y1="0" y2="0"><stop offset="0.000" stop-color="#00ddff"/><stop offset="0.053" stop-color="#00d8ff"/><stop offset="0.105" stop-color="#00d1ff"/><stop offset="0.158" stop-color="#00c8ff"/><stop offset="0.211" stop-color="#00baff"/><stop offset="0.263" stop-color="#4daaff"/><stop offset="0.316" stop-color="#8fa4ff"/><stop offset="0.368" stop-color="#bd9cff"/><stop offset="0.421" stop-color="#e493ff"/><stop offset="0.474" stop-color="#ff84f6"/><stop offset="0.526" stop-color="#ff68da"/><stop offset="0.579" stop-color="#ff4fc3"/><stop offset="0.632" stop-color="#ff33b0"/><stop offset="0.684" stop-color="#ff00a0"/><stop offset="0.737" stop-color="#ff0097"/><stop offset="0.789" stop-color="#ff008e"/><stop offset="0.842" stop-color="#ff0088"/><stop offset="0.895" stop-color="#ff0082"/><stop offset="0.947" stop-color="#ff007d"/><stop offset="1.000" stop-color="#ff0078"/></linearGradient>
<linearGradient id="s51" gradientUnits="userSpaceOnUse" x1="1260" x2="1704" y1="0" y2="0"><stop offset="0.000" stop-color="#00d8ff"/><stop offset="0.056" stop-color="#00d2ff"/><stop offset="0.111" stop-color="#00caff"/><stop offset="0.167" stop-color="#00bfff"/><stop offset="0.222" stop-color="#00aeff"/><stop offset="0.278" stop-color="#60a0ff"/><stop offset="0.333" stop-color="#9998ff"/><stop offset="0.389" stop-color="#c38fff"/><stop offset="0.444" stop-color="#e885ff"/><stop offset="0.500" stop-color="#ff72f4"/><stop offset="0.556" stop-color="#ff56d8"/><stop offset="0.611" stop-color="#ff39c2"/><stop offset="0.667" stop-color="#ff00b0"/><stop offset="0.722" stop-color="#ff00a4"/><stop offset="0.778" stop-color="#ff009b"/><stop offset="0.833" stop-color="#ff0093"/><stop offset="0.889" stop-color="#ff008c"/><stop offset="0.944" stop-color="#ff0086"/><stop offset="1.000" stop-color="#ff0081"/></linearGradient>
<linearGradient id="s52" gradientUnits="userSpaceOnUse" x1="1263" x2="1682" y1="0" y2="0"><stop offset="0.000" stop-color="#00d3ff"/><stop offset="0.059" stop-color="#00ccff"/><stop offset="0.118" stop-color="#00c3ff"/><stop offset="0.176" stop-color="#00b5ff"/><stop offset="0.235" stop-color="#00a0ff"/><stop offset="0.294" stop-color="#6e95ff"/><stop offset="0.353" stop-color="#a18cff"/><stop offset="0.412" stop-color="#c982ff"/><stop offset="0.471" stop-color="#ec75ff"/><stop offset="0.529" stop-color="#ff5ff1"/><stop offset="0.588" stop-color="#ff40d7"/><stop offset="0.647" stop-color="#ff0ec2"/><stop offset="0.706" stop-color="#ff00b3"/><stop offset="0.765" stop-color="#ff00a8"/><stop offset="0.824" stop-color="#ff009f"/><stop offset="0.882" stop-color="#ff0097"/><stop offset="0.941" stop-color="#ff0090"/><stop offset="1.000" stop-color="#ff008a"/></linearGradient>
<linearGradient id="s53" gradientUnits="userSpaceOnUse" x1="1267" x2="1660" y1="0" y2="0"><stop offset="0.000" stop-color="#00cdff"/><stop offset="0.062" stop-color="#00c6ff"/><stop offset="0.125" stop-color="#00bbff"/><stop offset="0.188" stop-color="#00aaff"/><stop offset="0.250" stop-color="#2691ff"/><stop offset="0.312" stop-color="#7a89ff"/><stop offset="0.375" stop-color="#a87fff"/><stop offset="0.438" stop-color="#ce73ff"/><stop offset="0.500" stop-color="#f063ff"/><stop offset="0.562" stop-color="#ff48ef"/><stop offset="0.625" stop-color="#ff1cd6"/><stop offset="0.688" stop-color="#ff00c4"/><stop offset="0.750" stop-color="#ff00b6"/><stop offset="0.812" stop-color="#ff00ab"/><stop offset="0.875" stop-color="#ff00a2"/><stop offset="0.938" stop-color="#ff009a"/><stop offset="1.000" stop-color="#ff0094"/></linearGradient>
<linearGradient id="s54" gradientUnits="userSpaceOnUse" x1="1270" x2="1638" y1="0" y2="0"><stop offset="0.000" stop-color="#00c8ff"/><stop offset="0.067" stop-color="#00beff"/><stop offset="0.133" stop-color="#00b2ff"/><stop offset="0.200" stop-color="#009eff"/><stop offset="0.267" stop-color="#4586ff"/><stop offset="0.333" stop-color="#857dff"/><stop offset="0.400" stop-color="#af71ff"/><stop offset="0.467" stop-color="#d362ff"/><stop offset="0.533" stop-color="#f44eff"/><stop offset="0.600" stop-color="#ff26ed"/><stop offset="0.667" stop-color="#ff00d6"/><stop offset="0.733" stop-color="#ff00c6"/><stop offset="0.800" stop-color="#ff00b9"/><stop offset="0.867" stop-color="#ff00ae"/><stop offset="0.933" stop-color="#ff00a5"/><stop offset="1.000" stop-color="#ff009d"/></linearGradient>
<linearGradient id="s55" gradientUnits="userSpaceOnUse" x1="1273" x2="1616" y1="0" y2="0"><stop offset="0.000" stop-color="#00c1ff"/><stop offset="0.071" stop-color="#00b7ff"/><stop offset="0.143" stop-color="#00a8ff"/><stop offset="0.214" stop-color="#0090ff"/><stop offset="0.286" stop-color="#587bff"/><stop offset="0.357" stop-color="#8e6fff"/><stop offset="0.429" stop-color="#b561ff"/><stop offset="0.500" stop-color="#d84eff"/><stop offset="0.571" stop-color="#f72eff"/><stop offset="0.643" stop-color="#ff00eb"/><stop offset="0.714" stop-color="#ff00d7"/><stop offset="0.786" stop-color="#ff00c7"/><stop offset="0.857" stop-color="#ff00bb"/><stop offset="0.929" stop-color="#ff00b0"/><stop offset="1.000" stop-color="#ff00a8"/></linearGradient>
<linearGradient id="s56" gradientUnits="userSpaceOnUse" x1="1277" x2="1594" y1="0" y2="0"><stop offset="0.000" stop-color="#00bbff"/><stop offset="0.077" stop-color="#00aeff"/><stop offset="0.154" stop-color="#009dff"/><stop offset="0.231" stop-color="#007fff"/><stop offset="0.308" stop-color="#676eff"/><stop offset="0.385" stop-color="#9660ff"/><stop offset="0.462" stop-color="#bb4fff"/><stop offset="0.538" stop-color="#dc32ff"/><stop offset="0.615" stop-color="#fa00ff"/><stop offset="0.692" stop-color="#ff00ea"/><stop offset="0.769" stop-color="#ff00d7"/><stop offset="0.846" stop-color="#ff00c9"/><stop offset="0.923" stop-color="#ff00bd"/><stop offset="1.000" stop-color="#ff00b3"/></linearGradient>
<linearGradient id="s57" gradientUnits="userSpaceOnUse" x1="1280" x2="1572" y1="0" y2="0"><stop offset="0.000" stop-color="#00b3ff"/><stop offset="0.083" stop-color="#00a5ff"/><stop offset="0.167" stop-color="#0090ff"/><stop offset="0.250" stop-color="#216cff"/><stop offset="0.333" stop-color="#7260ff"/><stop offset="0.417" stop-color="#9d4fff"/><stop offset="0.500" stop-color="#c035ff"/><stop offset="0.583" stop-color="#e000ff"/><stop offset="0.667" stop-color="#fd00ff"/><stop offset="0.750" stop-color="#ff00ea"/><stop offset="0.833" stop-color="#ff00d8"/><stop offset="0.917" stop-color="#ff00ca"/><stop offset="1.000" stop-color="#ff00bf"/></linearGradient>
<linearGradient id="s58" gradientUnits="userSpaceOnUse" x1="1284" x2="1549" y1="0" y2="0"><stop offset="0.000" stop-color="#00acff"/><stop offset="0.091" stop-color="#009bff"/><stop offset="0.182" stop-color="#0081ff"/><stop offset="0.273" stop-color="#405fff"/><stop offset="0.364" stop-color="#7c4fff"/><stop offset="0.455" stop-color="#a437ff"/><stop offset="0.545" stop-color="#c600ff"/><stop offset="0.636" stop-color="#e500ff"/><stop offset="0.727" stop-color="#ff00ff"/><stop offset="0.818" stop-color="#ff00e9"/><stop offset="0.909" stop-color="#ff00d9"/><stop offset="1.000" stop-color="#ff00cc"/></linearGradient>
<linearGradient id="s59" gradientUnits="userSpaceOnUse" x1="1288" x2="1527" y1="0" y2="0"><stop offset="0.000" stop-color="#00a3ff"/><stop offset="0.100" stop-color="#008fff"/><stop offset="0.200" stop-color="#006fff"/><stop offset="0.300" stop-color="#534fff"/><stop offset="0.400" stop-color="#8639ff"/><stop offset="0.500" stop-color="#ab00ff"/><stop offset="0.600" stop-color="#cc00ff"/><stop offset="0.700" stop-color="#e800ff"/><stop offset="0.800" stop-color="#ff00fd"/><stop offset="0.900" stop-color="#ff00e9"/><stop offset="1.000" stop-color="#ff00da"/></linearGradient>
<linearGradient id="s60" gradientUnits="userSpaceOnUse" x1="1292" x2="1505" y1="0" y2="0"><stop offset="0.000" stop-color="#0099ff"/><stop offset="0.111" stop-color="#0081ff"/><stop offset="0.222" stop-color="#0056ff"/><stop offset="0.333" stop-color="#6239ff"/><stop offset="0.444" stop-color="#8e00ff"/><stop offset="0.556" stop-color="#b400ff"/><stop offset="0.667" stop-color="#d200ff"/><stop offset="0.778" stop-color="#ec00ff"/><stop offset="0.889" stop-color="#ff00fc"/><stop offset="1.000" stop-color="#ff00e9"/></linearGradient>
<linearGradient id="s61" gradientUnits="userSpaceOnUse" x1="1296" x2="1483" y1="0" y2="0"><stop offset="0.000" stop-color="#008dff"/><stop offset="0.125" stop-color="#0070ff"/><stop offset="0.250" stop-color="#293aff"/><stop offset="0.375" stop-color="#6e0eff"/><stop offset="0.500" stop-color="#9b00ff"/><stop offset="0.625" stop-color="#bb00ff"/><stop offset="0.750" stop-color="#d700ff"/><stop offset="0.875" stop-color="#ee00ff"/><stop offset="1.000" stop-color="#ff00fb"/></linearGradient>
<linearGradient id="s62" gradientUnits="userSpaceOnUse" x1="1301" x2="1461" y1="0" y2="0"><stop offset="0.000" stop-color="#0080ff"/><stop offset="0.143" stop-color="#005aff"/><stop offset="0.286" stop-color="#4413ff"/><stop offset="0.429" stop-color="#7f00ff"/><stop offset="0.571" stop-color="#a400ff"/><stop offset="0.714" stop-color="#c100ff"/><stop offset="0.857" stop-color="#da00ff"/><stop offset="1.000" stop-color="#f000ff"/></linearGradient>
<linearGradient id="s63" gradientUnits="userSpaceOnUse" x1="1305" x2="1439" y1="0" y2="0"><stop offset="0.000" stop-color="#006fff"/><stop offset="0.167" stop-color="#003aff"/><stop offset="0.333" stop-color="#5f00ff"/><stop offset="0.500" stop-color="#8c00ff"/><stop offset="0.667" stop-color="#ac00ff"/><stop offset="0.833" stop-color="#c600ff"/><stop offset="1.000" stop-color="#dc00ff"/></linearGradient>
<linearGradient id="s64" gradientUnits="userSpaceOnUse" x1="1311" x2="1417" y1="0" y2="0"><stop offset="0.000" stop-color="#0058ff"/><stop offset="0.200" stop-color="#3600ff"/><stop offset="0.400" stop-color="#7200ff"/><stop offset="0.600" stop-color="#9600ff"/><stop offset="0.800" stop-color="#b100ff"/><stop offset="1.000" stop-color="#c800ff"/></linearGradient>
<linearGradient id="s65" gradientUnits="userSpaceOnUse" x1="1317" x2="1395" y1="0" y2="0"><stop offset="0.000" stop-color="#0031ff"/><stop offset="0.250" stop-color="#5700ff"/><stop offset="0.500" stop-color="#8000ff"/><stop offset="0.750" stop-color="#9c00ff"/><stop offset="1.000" stop-color="#b400ff"/></linearGradient>
<linearGradient id="s66" gradientUnits="userSpaceOnUse" x1="1323" x2="1373" y1="0" y2="0"><stop offset="0.000" stop-color="#4200ff"/><stop offset="0.500" stop-color="#7b00ff"/><stop offset="1.000" stop-color="#9e00ff"/></linearGradient>
<linearGradient id="s67" gradientUnits="userSpaceOnUse" x1="1334" x2="1350" y1="0" y2="0"><stop offset="0.000" stop-color="#6c00ff"/><stop offset="0.500" stop-color="#7a00ff"/><stop offset="1.000" stop-color="#8600ff"/></linearGradient>
<filter id="vb" x="-5%" y="-5%" width="110%" height="110%"><feGaussianBlur stdDeviation="2 3"/></filter>
<radialGradient id="glow" cx="0.5" cy="0.5" r="0.5"><stop offset="0" stop-color="#fff" stop-opacity="0.75"/><stop offset="0.55" stop-color="#fff" stop-opacity="0.35"/><stop offset="1" stop-color="#fff" stop-opacity="0"/></radialGradient>
<radialGradient id="pR" cx="0.38" cy="0.32" r="0.75"><stop offset="0" stop-color="#ff5040"/><stop offset="0.45" stop-color="#f01810"/><stop offset="1" stop-color="#800000"/></radialGradient>
<radialGradient id="pG" cx="0.38" cy="0.32" r="0.75"><stop offset="0" stop-color="#60ff50"/><stop offset="0.45" stop-color="#10e010"/><stop offset="1" stop-color="#006000"/></radialGradient>
<radialGradient id="pB" cx="0.38" cy="0.32" r="0.75"><stop offset="0" stop-color="#5060ff"/><stop offset="0.45" stop-color="#2030f0"/><stop offset="1" stop-color="#000080"/></radialGradient>
<radialGradient id="pY" cx="0.38" cy="0.32" r="0.75"><stop offset="0" stop-color="#ffffc0"/><stop offset="0.45" stop-color="#f0f080"/><stop offset="1" stop-color="#808030"/></radialGradient>
<radialGradient id="pC" cx="0.38" cy="0.32" r="0.75"><stop offset="0" stop-color="#c0ffff"/><stop offset="0.45" stop-color="#80f0f0"/><stop offset="1" stop-color="#307070"/></radialGradient>
<radialGradient id="pM" cx="0.38" cy="0.32" r="0.75"><stop offset="0" stop-color="#ff60ff"/><stop offset="0.45" stop-color="#f010f0"/><stop offset="1" stop-color="#700070"/></radialGradient>
<radialGradient id="pW" cx="0.38" cy="0.32" r="0.75"><stop offset="0" stop-color="#ffffff"/><stop offset="0.45" stop-color="#f4f4f4"/><stop offset="1" stop-color="#909090"/></radialGradient>
<linearGradient id="eGR" gradientUnits="userSpaceOnUse" x1="1458.4" y1="639.8" x2="1738.2" y2="791.3"><stop offset="0.000" stop-color="#018001"/><stop offset="0.125" stop-color="#238001"/><stop offset="0.250" stop-color="#4f8001"/><stop offset="0.375" stop-color="#807301"/><stop offset="0.500" stop-color="#804501"/><stop offset="0.625" stop-color="#802a01"/><stop offset="0.750" stop-color="#801801"/><stop offset="0.875" stop-color="#800a01"/><stop offset="1.000" stop-color="#800101"/></linearGradient>
<linearGradient id="eRB" gradientUnits="userSpaceOnUse" x1="1738.2" y1="791.3" x2="1335.0" y2="942.7"><stop offset="0.000" stop-color="#800101"/><stop offset="0.125" stop-color="#80010a"/><stop offset="0.250" stop-color="#800117"/><stop offset="0.375" stop-color="#80012a"/><stop offset="0.500" stop-color="#800145"/><stop offset="0.625" stop-color="#800172"/><stop offset="0.750" stop-color="#500180"/><stop offset="0.875" stop-color="#230180"/><stop offset="1.000" stop-color="#010180"/></linearGradient>
<linearGradient id="eBG" gradientUnits="userSpaceOnUse" x1="1335.0" y1="942.7" x2="1458.4" y2="639.8"><stop offset="0.000" stop-color="#010180"/><stop offset="0.125" stop-color="#011380"/><stop offset="0.250" stop-color="#012c80"/><stop offset="0.375" stop-color="#024e80"/><stop offset="0.500" stop-color="#02807e"/><stop offset="0.625" stop-color="#02804c"/><stop offset="0.750" stop-color="#01802b"/><stop offset="0.875" stop-color="#018013"/><stop offset="1.000" stop-color="#018001"/></linearGradient>
<linearGradient id="pl" x1="0" x2="1" y1="0" y2="0"><stop offset="0" stop-color="#8800c8"/><stop offset="0.5" stop-color="#c000a8"/><stop offset="1" stop-color="#d80078"/></linearGradient>
<clipPath id="it"><path d="M1458.4 639.8L1738.2 791.3L1335.0 942.7Z"/></clipPath><radialGradient id="glow2" cx="0.5" cy="0.5" r="0.5"><stop offset="0" stop-color="#fff" stop-opacity="0.42"/><stop offset="0.6" stop-color="#fff" stop-opacity="0.2"/><stop offset="1" stop-color="#fff" stop-opacity="0"/></radialGradient>
<clipPath id="ot"><path clip-rule="evenodd" d="M1150 442H1890V1005H1150ZM1458.4 639.8L1738.2 791.3L1335.0 942.7Z"/></clipPath>
</defs>
<rect x="1150" y="443" width="740" height="561" fill="#02080a"/>
<path d="M1211.5 443V1004M1293.8 443V1004M1376.1 443V1004M1458.4 443V1004M1540.7 443V1004M1623.0 443V1004M1705.3 443V1004M1787.6 443V1004M1150 920.3H1890M1150 864.2H1890M1150 808.1H1890M1150 752.0H1890M1150 695.9H1890M1150 639.8H1890M1150 583.7H1890M1150 527.6H1890M1150 471.5H1890" stroke="#404444" stroke-width="1.1" fill="none"/>
<g clip-path="url(#cl)"><g filter="url(#vb)"><rect x="1255" y="500" width="62" height="8" fill="url(#s0)"/><rect x="1239" y="507" width="98" height="8" fill="url(#s1)"/><rect x="1230" y="514" width="126" height="8" fill="url(#s2)"/><rect x="1223" y="521" width="148" height="8" fill="url(#s3)"/><rect x="1219" y="528" width="166" height="8" fill="url(#s4)"/><rect x="1215" y="535" width="182" height="8" fill="url(#s5)"/><rect x="1213" y="542" width="197" height="8" fill="url(#s6)"/><rect x="1212" y="549" width="211" height="8" fill="url(#s7)"/><rect x="1210" y="556" width="224" height="8" fill="url(#s8)"/><rect x="1209" y="563" width="236" height="8" fill="url(#s9)"/><rect x="1208" y="570" width="248" height="8" fill="url(#s10)"/><rect x="1208" y="577" width="260" height="8" fill="url(#s11)"/><rect x="1207" y="584" width="271" height="8" fill="url(#s12)"/><rect x="1207" y="591" width="282" height="8" fill="url(#s13)"/><rect x="1207" y="598" width="293" height="8" fill="url(#s14)"/><rect x="1207" y="605" width="303" height="8" fill="url(#s15)"/><rect x="1207" y="612" width="314" height="8" fill="url(#s16)"/><rect x="1207" y="619" width="324" height="8" fill="url(#s17)"/><rect x="1207" y="626" width="334" height="8" fill="url(#s18)"/><rect x="1207" y="633" width="345" height="8" fill="url(#s19)"/><rect x="1207" y="640" width="355" height="8" fill="url(#s20)"/><rect x="1207" y="647" width="365" height="8" fill="url(#s21)"/><rect x="1207" y="654" width="375" height="8" fill="url(#s22)"/><rect x="1208" y="661" width="385" height="8" fill="url(#s23)"/><rect x="1208" y="668" width="394" height="8" fill="url(#s24)"/><rect x="1209" y="675" width="404" height="8" fill="url(#s25)"/><rect x="1209" y="682" width="414" height="8" fill="url(#s26)"/><rect x="1210" y="689" width="423" height="8" fill="url(#s27)"/><rect x="1211" y="696" width="432" height="8" fill="url(#s28)"/><rect x="1212" y="703" width="442" height="8" fill="url(#s29)"/><rect x="1213" y="710" width="451" height="8" fill="url(#s30)"/><rect x="1215" y="717" width="459" height="8" fill="url(#s31)"/><rect x="1216" y="724" width="468" height="8" fill="url(#s32)"/><rect x="1218" y="731" width="477" height="8" fill="url(#s33)"/><rect x="1220" y="738" width="485" height="8" fill="url(#s34)"/><rect x="1221" y="745" width="494" height="8" fill="url(#s35)"/><rect x="1223" y="752" width="502" height="8" fill="url(#s36)"/><rect x="1225" y="759" width="510" height="8" fill="url(#s37)"/><rect x="1227" y="766" width="519" height="8" fill="url(#s38)"/><rect x="1229" y="773" width="527" height="8" fill="url(#s39)"/><rect x="1231" y="780" width="535" height="8" fill="url(#s40)"/><rect x="1233" y="787" width="543" height="8" fill="url(#s41)"/><rect x="1236" y="794" width="551" height="8" fill="url(#s42)"/><rect x="1238" y="801" width="558" height="8" fill="url(#s43)"/><rect x="1240" y="808" width="566" height="8" fill="url(#s44)"/><rect x="1243" y="815" width="571" height="8" fill="url(#s45)"/><rect x="1245" y="822" width="569" height="8" fill="url(#s46)"/><rect x="1248" y="829" width="545" height="8" fill="url(#s47)"/><rect x="1251" y="836" width="520" height="8" fill="url(#s48)"/><rect x="1254" y="843" width="495" height="8" fill="url(#s49)"/><rect x="1257" y="850" width="469" height="8" fill="url(#s50)"/><rect x="1260" y="857" width="444" height="8" fill="url(#s51)"/><rect x="1263" y="864" width="419" height="8" fill="url(#s52)"/><rect x="1267" y="871" width="393" height="8" fill="url(#s53)"/><rect x="1270" y="878" width="368" height="8" fill="url(#s54)"/><rect x="1273" y="885" width="342" height="8" fill="url(#s55)"/><rect x="1277" y="892" width="317" height="8" fill="url(#s56)"/><rect x="1280" y="899" width="291" height="8" fill="url(#s57)"/><rect x="1284" y="906" width="266" height="8" fill="url(#s58)"/><rect x="1288" y="913" width="240" height="8" fill="url(#s59)"/><rect x="1292" y="920" width="213" height="8" fill="url(#s60)"/><rect x="1296" y="927" width="187" height="8" fill="url(#s61)"/><rect x="1301" y="934" width="160" height="8" fill="url(#s62)"/><rect x="1305" y="941" width="134" height="8" fill="url(#s63)"/><rect x="1311" y="948" width="106" height="8" fill="url(#s64)"/><rect x="1317" y="955" width="78" height="8" fill="url(#s65)"/><rect x="1323" y="962" width="49" height="8" fill="url(#s66)"/><rect x="1334" y="969" width="16" height="8" fill="url(#s67)"/></g>
<path d="M1150 442H1890V1005H1150ZM1458.4 639.8L1738.2 791.3L1335.0 942.7Z" fill="#000" fill-opacity="0.2" fill-rule="evenodd"/>
<ellipse cx="1468.9" cy="791.8" rx="100" ry="72" fill="url(#glow)"/>
<g clip-path="url(#it)"><ellipse cx="1478.9" cy="791.8" rx="230" ry="150" fill="url(#glow2)"/></g>
</g>
<g clip-path="url(#cl)"><g clip-path="url(#ot)"><path d="M1211.5 443V1004M1293.8 443V1004M1376.1 443V1004M1458.4 443V1004M1540.7 443V1004M1623.0 443V1004M1705.3 443V1004M1787.6 443V1004M1150 920.3H1890M1150 864.2H1890M1150 808.1H1890M1150 752.0H1890M1150 695.9H1890M1150 639.8H1890M1150 583.7H1890M1150 527.6H1890M1150 471.5H1890" stroke="#3a4242" stroke-width="1.1" fill="none" opacity="0.95"/></g></g>
<path d="M1342.5 968.0C1341.2 967.5 1337.6 966.6 1335.0 964.7C1332.4 962.8 1330.3 960.8 1326.7 956.7C1323.1 952.6 1318.9 948.1 1313.3 940.0C1307.7 931.9 1300.2 920.9 1293.3 908.3C1286.4 895.7 1277.1 875.6 1271.7 864.2C1266.3 852.8 1264.2 848.0 1260.8 840.0C1257.4 832.0 1254.1 824.0 1251.2 816.0C1248.3 808.0 1245.9 799.7 1243.3 791.7C1240.7 783.8 1238.0 775.8 1235.8 768.3C1233.6 760.8 1231.8 753.6 1230.0 746.7C1228.2 739.8 1226.5 733.4 1225.0 726.7C1223.5 720.0 1222.0 714.2 1220.8 706.7C1219.5 699.2 1218.3 689.5 1217.5 681.7C1216.7 673.9 1216.3 667.0 1215.8 660.0C1215.3 653.0 1214.9 648.9 1214.7 640.0C1214.5 631.1 1214.5 616.2 1214.7 606.7C1214.9 597.2 1215.3 589.7 1215.8 583.3C1216.3 576.9 1216.8 573.0 1217.5 568.3C1218.2 563.6 1219.0 559.2 1220.0 555.0C1221.0 550.8 1222.0 546.8 1223.3 543.3C1224.5 539.8 1225.8 537.0 1227.5 534.2C1229.2 531.4 1230.9 528.9 1233.3 526.3C1235.7 523.6 1238.6 520.6 1241.7 518.3C1244.8 516.0 1247.8 514.4 1251.7 512.5C1255.6 510.6 1260.6 508.3 1265.0 507.0C1269.4 505.7 1274.1 505.1 1278.3 504.7C1282.5 504.3 1285.8 504.2 1290.0 504.5C1294.2 504.8 1298.8 505.7 1303.3 506.7C1307.8 507.7 1311.7 508.7 1316.7 510.3C1321.7 511.9 1327.8 514.2 1333.3 516.3C1338.8 518.4 1345.3 521.0 1350.0 523.0C1354.7 525.0 1357.2 525.9 1361.7 528.0C1366.2 530.1 1368.4 531.3 1376.7 535.8C1385.0 540.3 1398.1 546.9 1411.7 555.0C1425.3 563.1 1440.2 572.5 1458.3 584.2C1476.3 595.9 1492.6 606.5 1520.0 625.0C1547.4 643.5 1591.7 673.9 1622.5 695.0C1653.3 716.1 1677.5 732.8 1705.0 751.7C1732.5 770.6 1770.7 796.7 1787.5 808.3C1804.3 819.9 1802.8 819.1 1805.8 821.3Z" fill="none" stroke="#f0a000" stroke-width="1.3"/>
<rect x="1345" y="966" width="545" height="2" fill="url(#pl)"/>
<path d="M1468.5 448V1004M1150 791.5H1884" stroke="#e0e0e0" stroke-width="1" stroke-dasharray="4 3" fill="none" opacity="0.9"/>
<path d="M1458.4 639.8L1738.2 791.3" stroke="url(#eGR)" stroke-width="3.6" fill="none"/>
<path d="M1738.2 791.3L1335.0 942.7" stroke="url(#eRB)" stroke-width="3.6" fill="none"/>
<path d="M1335.0 942.7L1458.4 639.8" stroke="url(#eBG)" stroke-width="3.6" fill="none"/>
<path d="M1451.7 642.3L1737.8 795.3L1338.2 944.5Z" stroke="#fff" stroke-width="2.5" fill="none" stroke-linejoin="round"/>
<path d="M1596.7 742.3C1595.6 742.4 1594.3 742.3 1590.0 743.1C1585.7 743.8 1578.6 744.8 1571.1 746.7C1563.6 748.6 1552.8 751.7 1545.1 754.2C1537.3 756.8 1532.9 758.4 1524.7 762.0C1516.4 765.7 1502.1 772.8 1495.5 776.2C1488.9 779.5 1489.5 779.4 1485.1 782.0C1480.8 784.7 1473.9 788.9 1469.5 791.8C1465.1 794.7 1462.7 796.5 1458.7 799.3C1454.8 802.2 1450.9 804.9 1445.9 808.9C1440.9 812.9 1433.0 819.6 1428.5 823.4C1424.1 827.2 1420.8 830.4 1419.3 831.9" stroke="#000" stroke-width="1.2" fill="none"/>
<g font-family="Liberation Serif,serif" font-size="13" fill="#000"><text x="1546" y="741">3000</text><text x="1589" y="738">2700</text><text x="1577" y="764">A</text><text x="1497" y="755">5500</text><text x="1437" y="790">D65</text><text x="1500" y="797">B</text><text x="1470" y="816">C</text><text x="1442" y="818">9300</text></g>
<circle cx="1571.1" cy="746.7" r="2.6" fill="#fff" stroke="#000" stroke-width="0.8"/>
<circle cx="1590.0" cy="743.1" r="2.6" fill="#fff" stroke="#000" stroke-width="0.8"/>
<circle cx="1524.7" cy="762.0" r="2.6" fill="#fff" stroke="#000" stroke-width="0.8"/>
<circle cx="1485.1" cy="782.0" r="2.6" fill="#fff" stroke="#000" stroke-width="0.8"/>
<circle cx="1445.9" cy="808.9" r="2.6" fill="#fff" stroke="#000" stroke-width="0.8"/>
<circle cx="1579.9" cy="747.8" r="2.6" fill="#10d010" stroke="#006000" stroke-width="0.6"/>
<circle cx="1498.2" cy="779.2" r="2.6" fill="#10d010" stroke="#006000" stroke-width="0.6"/>
<circle cx="1466.7" cy="799.0" r="2.6" fill="#10d010" stroke="#006000" stroke-width="0.6"/>
<path d="M1289 503L1303 484M1412 555L1427 535M1524 629L1540 606M1604 683L1620 660M1658 720L1675 697M1711 755L1727 733M1768 793L1783 771M1793 809L1807 788M1802 818L1817 797M1214 644L1200 649M1277 878L1262 883M1313 940L1298 946M1325 957L1311 962M1333 964L1319 969" stroke="#b8b8c0" stroke-width="0.9" fill="none"/>
<g font-family="Liberation Serif,serif" font-size="10.900" fill="#e0e0e0"><text x="1304" y="487">520 nm</text><text x="1428" y="538">540 nm</text><text x="1541" y="611">560 nm</text><text x="1621" y="665">580 nm</text><text x="1676" y="703">600 nm</text><text x="1728" y="738">620 nm</text><text x="1784" y="777">640 nm</text><text x="1808" y="793">660 nm</text><text x="1818" y="801">680 nm</text><text x="1172" y="660">500 nm</text><text x="1234" y="893">480 nm</text><text x="1271" y="956">460 nm</text><text x="1283" y="971">440 nm</text><text x="1291" y="979">420 nm</text></g>
<g font-family="Liberation Serif,serif" font-size="13.500" fill="#f0f0f0"><text x="1152" y="915.8">0.1</text><text x="1152" y="859.7">0.2</text><text x="1152" y="803.6">0.3</text><text x="1152" y="747.5">0.4</text><text x="1152" y="691.4">0.5</text><text x="1152" y="635.3">0.6</text><text x="1152" y="579.2">0.7</text><text x="1152" y="523.1">0.8</text><text x="1295.3" y="1000.5">0.1</text><text x="1377.6" y="1000.5">0.2</text><text x="1459.9" y="1000.5">0.3</text><text x="1542.2" y="1000.5">0.4</text><text x="1624.5" y="1000.5">0.5</text><text x="1706.8" y="1000.5">0.6</text><text x="1789.1" y="1000.5">0.7</text></g>
<text x="1880" y="943" text-anchor="end" font-family="Liberation Sans,sans-serif" font-weight="bold" font-size="16" fill="#4e5456">hcfr.sourceforge.net</text>
<rect x="1492.2" y="785.8" width="12" height="12" fill="none" stroke="#ff0000" stroke-width="2.6"/><path d="M1490.9 799.1V784.5H1505.5" stroke="#10107a" stroke-width="0.9" fill="none"/><path d="M1490.9 799.1H1505.5V784.5" stroke="#e00020" stroke-width="0.9" fill="none"/>
<rect x="1521.0" y="785.7" width="12" height="12" fill="none" stroke="#ff0000" stroke-width="2.6"/><path d="M1519.7 799.0V784.4H1534.3" stroke="#10107a" stroke-width="0.9" fill="none"/><path d="M1519.7 799.0H1534.3V784.4" stroke="#e00020" stroke-width="0.9" fill="none"/>
<rect x="1552.3" y="785.6" width="12" height="12" fill="none" stroke="#ff0000" stroke-width="2.6"/><path d="M1551.0 798.9V784.3H1565.6" stroke="#10107a" stroke-width="0.9" fill="none"/><path d="M1551.0 798.9H1565.6V784.3" stroke="#e00020" stroke-width="0.9" fill="none"/>
<rect x="1579.2" y="785.6" width="12" height="12" fill="none" stroke="#ff0000" stroke-width="2.6"/><path d="M1577.9 798.9V784.3H1592.5" stroke="#10107a" stroke-width="0.9" fill="none"/><path d="M1577.9 798.9H1592.5V784.3" stroke="#e00020" stroke-width="0.9" fill="none"/>
<rect x="1608.3" y="785.5" width="12" height="12" fill="none" stroke="#ff0000" stroke-width="2.6"/><path d="M1607.0 798.8V784.2H1621.6" stroke="#10107a" stroke-width="0.9" fill="none"/><path d="M1607.0 798.8H1621.6V784.2" stroke="#e00020" stroke-width="0.9" fill="none"/>
<rect x="1636.3" y="785.5" width="12" height="12" fill="none" stroke="#ff0000" stroke-width="2.6"/><path d="M1635.0 798.8V784.2H1649.6" stroke="#10107a" stroke-width="0.9" fill="none"/><path d="M1635.0 798.8H1649.6V784.2" stroke="#e00020" stroke-width="0.9" fill="none"/>
<rect x="1663.3" y="785.4" width="12" height="12" fill="none" stroke="#ff0000" stroke-width="2.6"/><path d="M1662.0 798.7V784.1H1676.6" stroke="#10107a" stroke-width="0.9" fill="none"/><path d="M1662.0 798.7H1676.6V784.1" stroke="#e00020" stroke-width="0.9" fill="none"/>
<rect x="1687.2" y="785.4" width="12" height="12" fill="none" stroke="#ff0000" stroke-width="2.6"/><path d="M1685.9 798.7V784.1H1700.5" stroke="#10107a" stroke-width="0.9" fill="none"/><path d="M1685.9 798.7H1700.5V784.1" stroke="#e00020" stroke-width="0.9" fill="none"/>
<rect x="1711.2" y="785.3" width="12" height="12" fill="none" stroke="#ff0000" stroke-width="2.6"/><path d="M1709.9 798.6V784.0H1724.5" stroke="#10107a" stroke-width="0.9" fill="none"/><path d="M1709.9 798.6H1724.5V784.0" stroke="#e00020" stroke-width="0.9" fill="none"/>
<rect x="1732.2" y="785.3" width="12" height="12" fill="none" stroke="#ff0000" stroke-width="2.6"/><path d="M1730.9 798.6V784.0H1745.5" stroke="#10107a" stroke-width="0.9" fill="none"/><path d="M1730.9 798.6H1745.5V784.0" stroke="#e00020" stroke-width="0.9" fill="none"/>
<rect x="1461.7" y="769.3" width="12" height="12" fill="none" stroke="#30f000" stroke-width="2.6"/><path d="M1460.4 782.6V768.0H1475.0" stroke="#10107a" stroke-width="0.9" fill="none"/><path d="M1460.4 782.6H1475.0V768.0" stroke="#e00020" stroke-width="0.9" fill="none"/>
<rect x="1460.6" y="753.0" width="12" height="12" fill="none" stroke="#30f000" stroke-width="2.6"/><path d="M1459.3 766.3V751.7H1473.9" stroke="#10107a" stroke-width="0.9" fill="none"/><path d="M1459.3 766.3H1473.9V751.7" stroke="#e00020" stroke-width="0.9" fill="none"/>
<rect x="1459.4" y="735.4" width="12" height="12" fill="none" stroke="#30f000" stroke-width="2.6"/><path d="M1458.1 748.7V734.1H1472.7" stroke="#10107a" stroke-width="0.9" fill="none"/><path d="M1458.1 748.7H1472.7V734.1" stroke="#e00020" stroke-width="0.9" fill="none"/>
<rect x="1458.3" y="720.2" width="12" height="12" fill="none" stroke="#30f000" stroke-width="2.6"/><path d="M1457.0 733.5V718.9H1471.6" stroke="#10107a" stroke-width="0.9" fill="none"/><path d="M1457.0 733.5H1471.6V718.9" stroke="#e00020" stroke-width="0.9" fill="none"/>
<rect x="1457.2" y="703.7" width="12" height="12" fill="none" stroke="#30f000" stroke-width="2.6"/><path d="M1455.9 717.0V702.4H1470.5" stroke="#10107a" stroke-width="0.9" fill="none"/><path d="M1455.9 717.0H1470.5V702.4" stroke="#e00020" stroke-width="0.9" fill="none"/>
<rect x="1456.1" y="687.9" width="12" height="12" fill="none" stroke="#30f000" stroke-width="2.6"/><path d="M1454.8 701.2V686.6H1469.4" stroke="#10107a" stroke-width="0.9" fill="none"/><path d="M1454.8 701.2H1469.4V686.6" stroke="#e00020" stroke-width="0.9" fill="none"/>
<rect x="1455.1" y="672.7" width="12" height="12" fill="none" stroke="#30f000" stroke-width="2.6"/><path d="M1453.8 686.0V671.4H1468.4" stroke="#10107a" stroke-width="0.9" fill="none"/><path d="M1453.8 686.0H1468.4V671.4" stroke="#e00020" stroke-width="0.9" fill="none"/>
<rect x="1454.1" y="659.2" width="12" height="12" fill="none" stroke="#30f000" stroke-width="2.6"/><path d="M1452.8 672.5V657.9H1467.4" stroke="#10107a" stroke-width="0.9" fill="none"/><path d="M1452.8 672.5H1467.4V657.9" stroke="#e00020" stroke-width="0.9" fill="none"/>
<rect x="1453.2" y="645.7" width="12" height="12" fill="none" stroke="#30f000" stroke-width="2.6"/><path d="M1451.9 659.0V644.4H1466.5" stroke="#10107a" stroke-width="0.9" fill="none"/><path d="M1451.9 659.0H1466.5V644.4" stroke="#e00020" stroke-width="0.9" fill="none"/>
<rect x="1452.4" y="633.8" width="12" height="12" fill="none" stroke="#30f000" stroke-width="2.6"/><path d="M1451.1 647.1V632.5H1465.7" stroke="#10107a" stroke-width="0.9" fill="none"/><path d="M1451.1 647.1H1465.7V632.5" stroke="#e00020" stroke-width="0.9" fill="none"/>
<rect x="1448.3" y="802.3" width="12" height="12" fill="none" stroke="#5000ff" stroke-width="2.6"/><path d="M1447.0 815.6V801.0H1461.6" stroke="#10107a" stroke-width="0.9" fill="none"/><path d="M1447.0 815.6H1461.6V801.0" stroke="#e00020" stroke-width="0.9" fill="none"/>
<rect x="1433.9" y="818.4" width="12" height="12" fill="none" stroke="#5000ff" stroke-width="2.6"/><path d="M1432.6 831.7V817.1H1447.2" stroke="#10107a" stroke-width="0.9" fill="none"/><path d="M1432.6 831.7H1447.2V817.1" stroke="#e00020" stroke-width="0.9" fill="none"/>
<rect x="1418.4" y="835.9" width="12" height="12" fill="none" stroke="#5000ff" stroke-width="2.6"/><path d="M1417.1 849.2V834.6H1431.7" stroke="#10107a" stroke-width="0.9" fill="none"/><path d="M1417.1 849.2H1431.7V834.6" stroke="#e00020" stroke-width="0.9" fill="none"/>
<rect x="1405.0" y="851.0" width="12" height="12" fill="none" stroke="#5000ff" stroke-width="2.6"/><path d="M1403.7 864.3V849.7H1418.3" stroke="#10107a" stroke-width="0.9" fill="none"/><path d="M1403.7 864.3H1418.3V849.7" stroke="#e00020" stroke-width="0.9" fill="none"/>
<rect x="1390.5" y="867.3" width="12" height="12" fill="none" stroke="#5000ff" stroke-width="2.6"/><path d="M1389.2 880.6V866.0H1403.8" stroke="#10107a" stroke-width="0.9" fill="none"/><path d="M1389.2 880.6H1403.8V866.0" stroke="#e00020" stroke-width="0.9" fill="none"/>
<rect x="1376.6" y="883.0" width="12" height="12" fill="none" stroke="#5000ff" stroke-width="2.6"/><path d="M1375.3 896.3V881.7H1389.9" stroke="#10107a" stroke-width="0.9" fill="none"/><path d="M1375.3 896.3H1389.9V881.7" stroke="#e00020" stroke-width="0.9" fill="none"/>
<rect x="1363.2" y="898.1" width="12" height="12" fill="none" stroke="#5000ff" stroke-width="2.6"/><path d="M1361.9 911.4V896.8H1376.5" stroke="#10107a" stroke-width="0.9" fill="none"/><path d="M1361.9 911.4H1376.5V896.8" stroke="#e00020" stroke-width="0.9" fill="none"/>
<rect x="1351.3" y="911.5" width="12" height="12" fill="none" stroke="#5000ff" stroke-width="2.6"/><path d="M1350.0 924.8V910.2H1364.6" stroke="#10107a" stroke-width="0.9" fill="none"/><path d="M1350.0 924.8H1364.6V910.2" stroke="#e00020" stroke-width="0.9" fill="none"/>
<rect x="1339.4" y="925.0" width="12" height="12" fill="none" stroke="#5000ff" stroke-width="2.6"/><path d="M1338.1 938.3V923.7H1352.7" stroke="#10107a" stroke-width="0.9" fill="none"/><path d="M1338.1 938.3H1352.7V923.7" stroke="#e00020" stroke-width="0.9" fill="none"/>
<rect x="1329.0" y="936.7" width="12" height="12" fill="none" stroke="#5000ff" stroke-width="2.6"/><path d="M1327.7 950.0V935.4H1342.2" stroke="#10107a" stroke-width="0.9" fill="none"/><path d="M1327.7 950.0H1342.2V935.4" stroke="#e00020" stroke-width="0.9" fill="none"/>
<rect x="1472.4" y="775.1" width="12" height="12" fill="none" stroke="#ffe800" stroke-width="2.6"/><path d="M1471.1 788.4V773.8H1485.7" stroke="#10107a" stroke-width="0.9" fill="none"/><path d="M1471.1 788.4H1485.7V773.8" stroke="#e00020" stroke-width="0.9" fill="none"/>
<rect x="1481.8" y="764.5" width="12" height="12" fill="none" stroke="#ffe800" stroke-width="2.6"/><path d="M1480.5 777.8V763.2H1495.1" stroke="#10107a" stroke-width="0.9" fill="none"/><path d="M1480.5 777.8H1495.1V763.2" stroke="#e00020" stroke-width="0.9" fill="none"/>
<rect x="1492.0" y="753.0" width="12" height="12" fill="none" stroke="#ffe800" stroke-width="2.6"/><path d="M1490.7 766.3V751.7H1505.3" stroke="#10107a" stroke-width="0.9" fill="none"/><path d="M1490.7 766.3H1505.3V751.7" stroke="#e00020" stroke-width="0.9" fill="none"/>
<rect x="1500.8" y="743.1" width="12" height="12" fill="none" stroke="#ffe800" stroke-width="2.6"/><path d="M1499.5 756.4V741.8H1514.1" stroke="#10107a" stroke-width="0.9" fill="none"/><path d="M1499.5 756.4H1514.1V741.8" stroke="#e00020" stroke-width="0.9" fill="none"/>
<rect x="1510.2" y="732.4" width="12" height="12" fill="none" stroke="#ffe800" stroke-width="2.6"/><path d="M1508.9 745.7V731.1H1523.5" stroke="#10107a" stroke-width="0.9" fill="none"/><path d="M1508.9 745.7H1523.5V731.1" stroke="#e00020" stroke-width="0.9" fill="none"/>
<rect x="1519.4" y="722.1" width="12" height="12" fill="none" stroke="#ffe800" stroke-width="2.6"/><path d="M1518.1 735.4V720.8H1532.7" stroke="#10107a" stroke-width="0.9" fill="none"/><path d="M1518.1 735.4H1532.7V720.8" stroke="#e00020" stroke-width="0.9" fill="none"/>
<rect x="1528.1" y="712.2" width="12" height="12" fill="none" stroke="#ffe800" stroke-width="2.6"/><path d="M1526.8 725.5V710.9H1541.4" stroke="#10107a" stroke-width="0.9" fill="none"/><path d="M1526.8 725.5H1541.4V710.9" stroke="#e00020" stroke-width="0.9" fill="none"/>
<rect x="1535.9" y="703.4" width="12" height="12" fill="none" stroke="#ffe800" stroke-width="2.6"/><path d="M1534.6 716.7V702.1H1549.2" stroke="#10107a" stroke-width="0.9" fill="none"/><path d="M1534.6 716.7H1549.2V702.1" stroke="#e00020" stroke-width="0.9" fill="none"/>
<rect x="1543.7" y="694.6" width="12" height="12" fill="none" stroke="#ffe800" stroke-width="2.6"/><path d="M1542.4 707.9V693.3H1557.0" stroke="#10107a" stroke-width="0.9" fill="none"/><path d="M1542.4 707.9H1557.0V693.3" stroke="#e00020" stroke-width="0.9" fill="none"/>
<rect x="1550.6" y="686.9" width="12" height="12" fill="none" stroke="#ffe800" stroke-width="2.6"/><path d="M1549.3 700.2V685.6H1563.9" stroke="#10107a" stroke-width="0.9" fill="none"/><path d="M1549.3 700.2H1563.9V685.6" stroke="#e00020" stroke-width="0.9" fill="none"/>
<rect x="1454.9" y="785.8" width="12" height="12" fill="none" stroke="#30ffff" stroke-width="2.6"/><path d="M1453.6 799.1V784.5H1468.2" stroke="#10107a" stroke-width="0.9" fill="none"/><path d="M1453.6 799.1H1468.2V784.5" stroke="#e00020" stroke-width="0.9" fill="none"/>
<rect x="1447.2" y="785.9" width="12" height="12" fill="none" stroke="#30ffff" stroke-width="2.6"/><path d="M1445.9 799.2V784.6H1460.5" stroke="#10107a" stroke-width="0.9" fill="none"/><path d="M1445.9 799.2H1460.5V784.6" stroke="#e00020" stroke-width="0.9" fill="none"/>
<rect x="1438.8" y="785.9" width="12" height="12" fill="none" stroke="#30ffff" stroke-width="2.6"/><path d="M1437.5 799.2V784.6H1452.1" stroke="#10107a" stroke-width="0.9" fill="none"/><path d="M1437.5 799.2H1452.1V784.6" stroke="#e00020" stroke-width="0.9" fill="none"/>
<rect x="1431.5" y="785.9" width="12" height="12" fill="none" stroke="#30ffff" stroke-width="2.6"/><path d="M1430.2 799.2V784.6H1444.8" stroke="#10107a" stroke-width="0.9" fill="none"/><path d="M1430.2 799.2H1444.8V784.6" stroke="#e00020" stroke-width="0.9" fill="none"/>
<rect x="1423.7" y="785.9" width="12" height="12" fill="none" stroke="#30ffff" stroke-width="2.6"/><path d="M1422.4 799.2V784.6H1437.0" stroke="#10107a" stroke-width="0.9" fill="none"/><path d="M1422.4 799.2H1437.0V784.6" stroke="#e00020" stroke-width="0.9" fill="none"/>
<rect x="1416.2" y="785.9" width="12" height="12" fill="none" stroke="#30ffff" stroke-width="2.6"/><path d="M1414.9 799.2V784.6H1429.5" stroke="#10107a" stroke-width="0.9" fill="none"/><path d="M1414.9 799.2H1429.5V784.6" stroke="#e00020" stroke-width="0.9" fill="none"/>
<rect x="1408.9" y="786.0" width="12" height="12" fill="none" stroke="#30ffff" stroke-width="2.6"/><path d="M1407.6 799.3V784.7H1422.2" stroke="#10107a" stroke-width="0.9" fill="none"/><path d="M1407.6 799.3H1422.2V784.7" stroke="#e00020" stroke-width="0.9" fill="none"/>
<rect x="1402.5" y="786.0" width="12" height="12" fill="none" stroke="#30ffff" stroke-width="2.6"/><path d="M1401.2 799.3V784.7H1415.8" stroke="#10107a" stroke-width="0.9" fill="none"/><path d="M1401.2 799.3H1415.8V784.7" stroke="#e00020" stroke-width="0.9" fill="none"/>
<rect x="1396.0" y="786.0" width="12" height="12" fill="none" stroke="#30ffff" stroke-width="2.6"/><path d="M1394.7 799.3V784.7H1409.3" stroke="#10107a" stroke-width="0.9" fill="none"/><path d="M1394.7 799.3H1409.3V784.7" stroke="#e00020" stroke-width="0.9" fill="none"/>
<rect x="1390.3" y="786.0" width="12" height="12" fill="none" stroke="#30ffff" stroke-width="2.6"/><path d="M1389.0 799.3V784.7H1403.6" stroke="#10107a" stroke-width="0.9" fill="none"/><path d="M1389.0 799.3H1403.6V784.7" stroke="#e00020" stroke-width="0.9" fill="none"/>
<rect x="1463.6" y="796.5" width="12" height="12" fill="none" stroke="#ff00e0" stroke-width="2.6"/><path d="M1462.3 809.8V795.2H1476.9" stroke="#10107a" stroke-width="0.9" fill="none"/><path d="M1462.3 809.8H1476.9V795.2" stroke="#e00020" stroke-width="0.9" fill="none"/>
<rect x="1464.3" y="807.0" width="12" height="12" fill="none" stroke="#ff00e0" stroke-width="2.6"/><path d="M1463.0 820.3V805.7H1477.6" stroke="#10107a" stroke-width="0.9" fill="none"/><path d="M1463.0 820.3H1477.6V805.7" stroke="#e00020" stroke-width="0.9" fill="none"/>
<rect x="1465.1" y="818.4" width="12" height="12" fill="none" stroke="#ff00e0" stroke-width="2.6"/><path d="M1463.8 831.7V817.1H1478.4" stroke="#10107a" stroke-width="0.9" fill="none"/><path d="M1463.8 831.7H1478.4V817.1" stroke="#e00020" stroke-width="0.9" fill="none"/>
<rect x="1465.8" y="828.2" width="12" height="12" fill="none" stroke="#ff00e0" stroke-width="2.6"/><path d="M1464.5 841.5V826.9H1479.1" stroke="#10107a" stroke-width="0.9" fill="none"/><path d="M1464.5 841.5H1479.1V826.9" stroke="#e00020" stroke-width="0.9" fill="none"/>
<rect x="1466.5" y="838.8" width="12" height="12" fill="none" stroke="#ff00e0" stroke-width="2.6"/><path d="M1465.2 852.1V837.5H1479.8" stroke="#10107a" stroke-width="0.9" fill="none"/><path d="M1465.2 852.1H1479.8V837.5" stroke="#e00020" stroke-width="0.9" fill="none"/>
<rect x="1467.2" y="849.0" width="12" height="12" fill="none" stroke="#ff00e0" stroke-width="2.6"/><path d="M1465.9 862.3V847.7H1480.5" stroke="#10107a" stroke-width="0.9" fill="none"/><path d="M1465.9 862.3H1480.5V847.7" stroke="#e00020" stroke-width="0.9" fill="none"/>
<rect x="1467.9" y="858.8" width="12" height="12" fill="none" stroke="#ff00e0" stroke-width="2.6"/><path d="M1466.6 872.1V857.5H1481.2" stroke="#10107a" stroke-width="0.9" fill="none"/><path d="M1466.6 872.1H1481.2V857.5" stroke="#e00020" stroke-width="0.9" fill="none"/>
<rect x="1468.5" y="867.5" width="12" height="12" fill="none" stroke="#ff00e0" stroke-width="2.6"/><path d="M1467.2 880.8V866.2H1481.8" stroke="#10107a" stroke-width="0.9" fill="none"/><path d="M1467.2 880.8H1481.8V866.2" stroke="#e00020" stroke-width="0.9" fill="none"/>
<rect x="1469.1" y="876.2" width="12" height="12" fill="none" stroke="#ff00e0" stroke-width="2.6"/><path d="M1467.8 889.5V874.9H1482.4" stroke="#10107a" stroke-width="0.9" fill="none"/><path d="M1467.8 889.5H1482.4V874.9" stroke="#e00020" stroke-width="0.9" fill="none"/>
<rect x="1469.6" y="883.9" width="12" height="12" fill="none" stroke="#ff00e0" stroke-width="2.6"/><path d="M1468.3 897.2V882.6H1482.9" stroke="#10107a" stroke-width="0.9" fill="none"/><path d="M1468.3 897.2H1482.9V882.6" stroke="#e00020" stroke-width="0.9" fill="none"/>
<rect x="1418.7" y="767" width="12" height="12" fill="none" stroke="#c89038" stroke-width="2"/><rect x="1420.2" y="768.5" width="9" height="9" fill="none" stroke="#6a6a50" stroke-width="0.9"/><path d="M1418.7 767l12 12M1430.7 767l-12 12" stroke="#f0e8d8" stroke-width="0.7" opacity="0.5"/>
<rect x="1521.5" y="769.3" width="12" height="12" fill="none" stroke="#c89038" stroke-width="2"/><rect x="1523.0" y="770.8" width="9" height="9" fill="none" stroke="#6a6a50" stroke-width="0.9"/><path d="M1521.5 769.3l12 12M1533.5 769.3l-12 12" stroke="#f0e8d8" stroke-width="0.7" opacity="0.5"/>
<rect x="1547.3" y="764.8" width="12" height="12" fill="none" stroke="#c89038" stroke-width="2"/><rect x="1548.8" y="766.3" width="9" height="9" fill="none" stroke="#6a6a50" stroke-width="0.9"/><path d="M1547.3 764.8l12 12M1559.3 764.8l-12 12" stroke="#f0e8d8" stroke-width="0.7" opacity="0.5"/>
<rect x="1375.3" y="822.3" width="12" height="12" fill="none" stroke="#c89038" stroke-width="2"/><rect x="1376.8" y="823.8" width="9" height="9" fill="none" stroke="#6a6a50" stroke-width="0.9"/><path d="M1375.3 822.3l12 12M1387.3 822.3l-12 12" stroke="#f0e8d8" stroke-width="0.7" opacity="0.5"/>
<rect x="1406.5" y="824.8" width="12" height="12" fill="none" stroke="#c89038" stroke-width="2"/><rect x="1408.0" y="826.3" width="9" height="9" fill="none" stroke="#6a6a50" stroke-width="0.9"/><path d="M1406.5 824.8l12 12M1418.5 824.8l-12 12" stroke="#f0e8d8" stroke-width="0.7" opacity="0.5"/>
<rect x="1424" y="832" width="12" height="12" fill="none" stroke="#c89038" stroke-width="2"/><rect x="1425.5" y="833.5" width="9" height="9" fill="none" stroke="#6a6a50" stroke-width="0.9"/><path d="M1424 832l12 12M1436 832l-12 12" stroke="#f0e8d8" stroke-width="0.7" opacity="0.5"/>
<rect x="1440.3" y="853.2" width="12" height="12" fill="none" stroke="#c89038" stroke-width="2"/><rect x="1441.8" y="854.7" width="9" height="9" fill="none" stroke="#6a6a50" stroke-width="0.9"/><path d="M1440.3 853.2l12 12M1452.3 853.2l-12 12" stroke="#f0e8d8" stroke-width="0.7" opacity="0.5"/>
<rect x="1518.2" y="835.2" width="12" height="12" fill="none" stroke="#c89038" stroke-width="2"/><rect x="1519.7" y="836.7" width="9" height="9" fill="none" stroke="#6a6a50" stroke-width="0.9"/><path d="M1518.2 835.2l12 12M1530.2 835.2l-12 12" stroke="#f0e8d8" stroke-width="0.7" opacity="0.5"/>
<rect x="1376.5" y="869.8" width="12" height="12" fill="none" stroke="#c89038" stroke-width="2"/><rect x="1378.0" y="871.3" width="9" height="9" fill="none" stroke="#6a6a50" stroke-width="0.9"/><path d="M1376.5 869.8l12 12M1388.5 869.8l-12 12" stroke="#f0e8d8" stroke-width="0.7" opacity="0.5"/>
<rect x="1357.3" y="897.3" width="12" height="12" fill="none" stroke="#c89038" stroke-width="2"/><rect x="1358.8" y="898.8" width="9" height="9" fill="none" stroke="#6a6a50" stroke-width="0.9"/><path d="M1357.3 897.3l12 12M1369.3 897.3l-12 12" stroke="#f0e8d8" stroke-width="0.7" opacity="0.5"/>
<rect x="1599" y="794.8" width="12" height="12" fill="none" stroke="#c89038" stroke-width="2"/><rect x="1600.5" y="796.3" width="9" height="9" fill="none" stroke="#6a6a50" stroke-width="0.9"/><path d="M1599 794.8l12 12M1611 794.8l-12 12" stroke="#f0e8d8" stroke-width="0.7" opacity="0.5"/>
<rect x="1516.5" y="688.2" width="12" height="12" fill="none" stroke="#c89038" stroke-width="2"/><rect x="1518.0" y="689.7" width="9" height="9" fill="none" stroke="#6a6a50" stroke-width="0.9"/><path d="M1516.5 688.2l12 12M1528.5 688.2l-12 12" stroke="#f0e8d8" stroke-width="0.7" opacity="0.5"/>
<rect x="1577.3" y="704" width="12" height="12" fill="none" stroke="#c89038" stroke-width="2"/><rect x="1578.8" y="705.5" width="9" height="9" fill="none" stroke="#6a6a50" stroke-width="0.9"/><path d="M1577.3 704l12 12M1589.3 704l-12 12" stroke="#f0e8d8" stroke-width="0.7" opacity="0.5"/>
<rect x="1487.3" y="723.2" width="12" height="12" fill="none" stroke="#c89038" stroke-width="2"/><rect x="1488.8" y="724.7" width="9" height="9" fill="none" stroke="#6a6a50" stroke-width="0.9"/><path d="M1487.3 723.2l12 12M1499.3 723.2l-12 12" stroke="#f0e8d8" stroke-width="0.7" opacity="0.5"/>
<rect x="1456.5" y="686.5" width="12" height="12" fill="none" stroke="#c89038" stroke-width="2"/><rect x="1458.0" y="688.0" width="9" height="9" fill="none" stroke="#6a6a50" stroke-width="0.9"/><path d="M1456.5 686.5l12 12M1468.5 686.5l-12 12" stroke="#f0e8d8" stroke-width="0.7" opacity="0.5"/>
<rect x="1603" y="723" width="12" height="12" fill="none" stroke="#c89038" stroke-width="2"/><rect x="1604.5" y="724.5" width="9" height="9" fill="none" stroke="#6a6a50" stroke-width="0.9"/><path d="M1603 723l12 12M1615 723l-12 12" stroke="#f0e8d8" stroke-width="0.7" opacity="0.5"/>
<rect x="1639.8" y="742.3" width="12" height="12" fill="none" stroke="#c89038" stroke-width="2"/><rect x="1641.3" y="743.8" width="9" height="9" fill="none" stroke="#6a6a50" stroke-width="0.9"/><path d="M1639.8 742.3l12 12M1651.8 742.3l-12 12" stroke="#f0e8d8" stroke-width="0.7" opacity="0.5"/>
<rect x="1669" y="791.5" width="12" height="12" fill="none" stroke="#c89038" stroke-width="2"/><rect x="1670.5" y="793.0" width="9" height="9" fill="none" stroke="#6a6a50" stroke-width="0.9"/><path d="M1669 791.5l12 12M1681 791.5l-12 12" stroke="#f0e8d8" stroke-width="0.7" opacity="0.5"/>
<circle cx="1458.6" cy="802.8" r="5.6" fill="#000" opacity="0.55"/><circle cx="1457.0" cy="801.0" r="5.6" fill="url(#pC)"/><circle cx="1457.0" cy="801.5" r="0.8" fill="#a00000"/>
<circle cx="1452.6" cy="802.8" r="5.6" fill="#000" opacity="0.55"/><circle cx="1451.0" cy="801.0" r="5.6" fill="url(#pC)"/><circle cx="1451.0" cy="801.5" r="0.8" fill="#a00000"/>
<circle cx="1444.6" cy="802.8" r="5.6" fill="#000" opacity="0.55"/><circle cx="1443.0" cy="801.0" r="5.6" fill="url(#pC)"/><circle cx="1443.0" cy="801.5" r="0.8" fill="#a00000"/>
<circle cx="1436.6" cy="803.3" r="5.6" fill="#000" opacity="0.55"/><circle cx="1435.0" cy="801.5" r="5.6" fill="url(#pC)"/><circle cx="1435.0" cy="802.0" r="0.8" fill="#a00000"/>
<circle cx="1430.6" cy="802.8" r="5.6" fill="#000" opacity="0.55"/><circle cx="1429.0" cy="801.0" r="5.6" fill="url(#pC)"/><circle cx="1429.0" cy="801.5" r="0.8" fill="#a00000"/>
<circle cx="1423.3" cy="802.8" r="5.6" fill="#000" opacity="0.55"/><circle cx="1421.7" cy="801.0" r="5.6" fill="url(#pC)"/><circle cx="1421.7" cy="801.5" r="0.8" fill="#a00000"/>
<circle cx="1415.6" cy="802.8" r="5.6" fill="#000" opacity="0.55"/><circle cx="1414.0" cy="801.0" r="5.6" fill="url(#pC)"/><circle cx="1414.0" cy="801.5" r="0.8" fill="#a00000"/>
<circle cx="1408.3" cy="802.8" r="5.6" fill="#000" opacity="0.55"/><circle cx="1406.7" cy="801.0" r="5.6" fill="url(#pC)"/><circle cx="1406.7" cy="801.5" r="0.8" fill="#a00000"/>
<circle cx="1401.6" cy="802.3" r="5.6" fill="#000" opacity="0.55"/><circle cx="1400.0" cy="800.5" r="5.6" fill="url(#pC)"/><circle cx="1400.0" cy="801.0" r="0.8" fill="#a00000"/>
<circle cx="1394.1" cy="802.8" r="5.6" fill="#000" opacity="0.55"/><circle cx="1392.5" cy="801.0" r="5.6" fill="url(#pC)"/><circle cx="1392.5" cy="801.5" r="0.8" fill="#a00000"/>
<circle cx="1466.6" cy="813.8" r="5.6" fill="#000" opacity="0.55"/><circle cx="1465.0" cy="812.0" r="5.6" fill="url(#pM)"/><circle cx="1465.0" cy="812.5" r="0.8" fill="#2020c0"/>
<circle cx="1468.3" cy="823.5" r="5.6" fill="#000" opacity="0.55"/><circle cx="1466.7" cy="821.7" r="5.6" fill="url(#pM)"/><circle cx="1466.7" cy="822.2" r="0.8" fill="#2020c0"/>
<circle cx="1469.9" cy="832.6" r="5.6" fill="#000" opacity="0.55"/><circle cx="1468.3" cy="830.8" r="5.6" fill="url(#pM)"/><circle cx="1468.3" cy="831.3" r="0.8" fill="#2020c0"/>
<circle cx="1470.3" cy="841.8" r="5.6" fill="#000" opacity="0.55"/><circle cx="1468.7" cy="840.0" r="5.6" fill="url(#pM)"/><circle cx="1468.7" cy="840.5" r="0.8" fill="#2020c0"/>
<circle cx="1470.6" cy="850.8" r="5.6" fill="#000" opacity="0.55"/><circle cx="1469.0" cy="849.0" r="5.6" fill="url(#pM)"/><circle cx="1469.0" cy="849.5" r="0.8" fill="#2020c0"/>
<circle cx="1471.3" cy="860.8" r="5.6" fill="#000" opacity="0.55"/><circle cx="1469.7" cy="859.0" r="5.6" fill="url(#pM)"/><circle cx="1469.7" cy="859.5" r="0.8" fill="#2020c0"/>
<circle cx="1472.4" cy="870.8" r="5.6" fill="#000" opacity="0.55"/><circle cx="1470.8" cy="869.0" r="5.6" fill="url(#pM)"/><circle cx="1470.8" cy="869.5" r="0.8" fill="#2020c0"/>
<circle cx="1471.6" cy="879.8" r="5.6" fill="#000" opacity="0.55"/><circle cx="1470.0" cy="878.0" r="5.6" fill="url(#pM)"/><circle cx="1470.0" cy="878.5" r="0.8" fill="#2020c0"/>
<circle cx="1473.3" cy="887.6" r="5.6" fill="#000" opacity="0.55"/><circle cx="1471.7" cy="885.8" r="5.6" fill="url(#pM)"/><circle cx="1471.7" cy="886.3" r="0.8" fill="#2020c0"/>
<circle cx="1475.6" cy="895.1" r="5.6" fill="#000" opacity="0.55"/><circle cx="1474.0" cy="893.3" r="5.6" fill="url(#pM)"/><circle cx="1474.0" cy="893.8" r="0.8" fill="#2020c0"/>
<circle cx="1454.1" cy="820.1" r="5.6" fill="#000" opacity="0.55"/><circle cx="1452.5" cy="818.3" r="5.6" fill="url(#pB)"/>
<circle cx="1439.9" cy="831.8" r="5.6" fill="#000" opacity="0.55"/><circle cx="1438.3" cy="830.0" r="5.6" fill="url(#pB)"/>
<circle cx="1424.9" cy="852.6" r="5.6" fill="#000" opacity="0.55"/><circle cx="1423.3" cy="850.8" r="5.6" fill="url(#pB)"/>
<circle cx="1411.6" cy="866.0" r="5.6" fill="#000" opacity="0.55"/><circle cx="1410.0" cy="864.2" r="5.6" fill="url(#pB)"/>
<circle cx="1396.6" cy="885.1" r="5.6" fill="#000" opacity="0.55"/><circle cx="1395.0" cy="883.3" r="5.6" fill="url(#pB)"/>
<circle cx="1383.3" cy="898.5" r="5.6" fill="#000" opacity="0.55"/><circle cx="1381.7" cy="896.7" r="5.6" fill="url(#pB)"/>
<circle cx="1372.4" cy="910.1" r="5.6" fill="#000" opacity="0.55"/><circle cx="1370.8" cy="908.3" r="5.6" fill="url(#pB)"/>
<circle cx="1359.9" cy="924.3" r="5.6" fill="#000" opacity="0.55"/><circle cx="1358.3" cy="922.5" r="5.6" fill="url(#pB)"/>
<circle cx="1349.1" cy="936.0" r="5.6" fill="#000" opacity="0.55"/><circle cx="1347.5" cy="934.2" r="5.6" fill="url(#pB)"/>
<circle cx="1339.1" cy="946.0" r="5.6" fill="#000" opacity="0.55"/><circle cx="1337.5" cy="944.2" r="5.6" fill="url(#pB)"/>
<circle cx="1488.6" cy="803.8" r="5.6" fill="#000" opacity="0.55"/><circle cx="1487.0" cy="802.0" r="5.6" fill="url(#pR)"/>
<circle cx="1515.6" cy="805.8" r="5.6" fill="#000" opacity="0.55"/><circle cx="1514.0" cy="804.0" r="5.6" fill="url(#pR)"/>
<circle cx="1544.6" cy="805.8" r="5.6" fill="#000" opacity="0.55"/><circle cx="1543.0" cy="804.0" r="5.6" fill="url(#pR)"/>
<circle cx="1573.6" cy="802.8" r="5.6" fill="#000" opacity="0.55"/><circle cx="1572.0" cy="801.0" r="5.6" fill="url(#pR)"/>
<circle cx="1605.6" cy="801.8" r="5.6" fill="#000" opacity="0.55"/><circle cx="1604.0" cy="800.0" r="5.6" fill="url(#pR)"/>
<circle cx="1634.6" cy="798.8" r="5.6" fill="#000" opacity="0.55"/><circle cx="1633.0" cy="797.0" r="5.6" fill="url(#pR)"/>
<circle cx="1661.6" cy="798.8" r="5.6" fill="#000" opacity="0.55"/><circle cx="1660.0" cy="797.0" r="5.6" fill="url(#pR)"/>
<circle cx="1688.6" cy="796.8" r="5.6" fill="#000" opacity="0.55"/><circle cx="1687.0" cy="795.0" r="5.6" fill="url(#pR)"/>
<circle cx="1713.6" cy="796.8" r="5.6" fill="#000" opacity="0.55"/><circle cx="1712.0" cy="795.0" r="5.6" fill="url(#pR)"/>
<circle cx="1738.6" cy="796.8" r="5.6" fill="#000" opacity="0.55"/><circle cx="1737.0" cy="795.0" r="5.6" fill="url(#pR)"/>
<circle cx="1473.6" cy="794.3" r="5.6" fill="#000" opacity="0.55"/><circle cx="1472.0" cy="792.5" r="5.6" fill="url(#pY)"/><circle cx="1472.0" cy="793.0" r="0.8" fill="#000080"/>
<circle cx="1481.6" cy="783.5" r="5.6" fill="#000" opacity="0.55"/><circle cx="1480.0" cy="781.7" r="5.6" fill="url(#pY)"/><circle cx="1480.0" cy="782.2" r="0.8" fill="#000080"/>
<circle cx="1491.6" cy="772.8" r="5.6" fill="#000" opacity="0.55"/><circle cx="1490.0" cy="771.0" r="5.6" fill="url(#pY)"/><circle cx="1490.0" cy="771.5" r="0.8" fill="#000080"/>
<circle cx="1500.6" cy="762.8" r="5.6" fill="#000" opacity="0.55"/><circle cx="1499.0" cy="761.0" r="5.6" fill="url(#pY)"/><circle cx="1499.0" cy="761.5" r="0.8" fill="#000080"/>
<circle cx="1510.4" cy="750.8" r="5.6" fill="#000" opacity="0.55"/><circle cx="1508.8" cy="749.0" r="5.6" fill="url(#pY)"/><circle cx="1508.8" cy="749.5" r="0.8" fill="#000080"/>
<circle cx="1519.1" cy="740.8" r="5.6" fill="#000" opacity="0.55"/><circle cx="1517.5" cy="739.0" r="5.6" fill="url(#pY)"/><circle cx="1517.5" cy="739.5" r="0.8" fill="#000080"/>
<circle cx="1529.1" cy="731.8" r="5.6" fill="#000" opacity="0.55"/><circle cx="1527.5" cy="730.0" r="5.6" fill="url(#pY)"/><circle cx="1527.5" cy="730.5" r="0.8" fill="#000080"/>
<circle cx="1538.3" cy="720.8" r="5.6" fill="#000" opacity="0.55"/><circle cx="1536.7" cy="719.0" r="5.6" fill="url(#pY)"/><circle cx="1536.7" cy="719.5" r="0.8" fill="#000080"/>
<circle cx="1546.6" cy="709.3" r="5.6" fill="#000" opacity="0.55"/><circle cx="1545.0" cy="707.5" r="5.6" fill="url(#pY)"/><circle cx="1545.0" cy="708.0" r="0.8" fill="#000080"/>
<circle cx="1554.9" cy="699.3" r="5.6" fill="#000" opacity="0.55"/><circle cx="1553.3" cy="697.5" r="5.6" fill="url(#pY)"/><circle cx="1553.3" cy="698.0" r="0.8" fill="#000080"/>
<circle cx="1464.1" cy="788.5" r="5.6" fill="#000" opacity="0.55"/><circle cx="1462.5" cy="786.7" r="5.6" fill="url(#pG)"/><circle cx="1462.5" cy="787.2" r="0.8" fill="#000"/>
<circle cx="1463.3" cy="771.8" r="5.6" fill="#000" opacity="0.55"/><circle cx="1461.7" cy="770.0" r="5.6" fill="url(#pG)"/><circle cx="1461.7" cy="770.5" r="0.8" fill="#000"/>
<circle cx="1462.4" cy="758.5" r="5.6" fill="#000" opacity="0.55"/><circle cx="1460.8" cy="756.7" r="5.6" fill="url(#pG)"/><circle cx="1460.8" cy="757.2" r="0.8" fill="#000"/>
<circle cx="1461.6" cy="741.8" r="5.6" fill="#000" opacity="0.55"/><circle cx="1460.0" cy="740.0" r="5.6" fill="url(#pG)"/><circle cx="1460.0" cy="740.5" r="0.8" fill="#000"/>
<circle cx="1459.9" cy="725.1" r="5.6" fill="#000" opacity="0.55"/><circle cx="1458.3" cy="723.3" r="5.6" fill="url(#pG)"/><circle cx="1458.3" cy="723.8" r="0.8" fill="#000"/>
<circle cx="1458.1" cy="707.8" r="5.6" fill="#000" opacity="0.55"/><circle cx="1456.5" cy="706.0" r="5.6" fill="url(#pG)"/><circle cx="1456.5" cy="706.5" r="0.8" fill="#000"/>
<circle cx="1456.9" cy="692.6" r="5.6" fill="#000" opacity="0.55"/><circle cx="1455.3" cy="690.8" r="5.6" fill="url(#pG)"/><circle cx="1455.3" cy="691.3" r="0.8" fill="#000"/>
<circle cx="1455.6" cy="675.8" r="5.6" fill="#000" opacity="0.55"/><circle cx="1454.0" cy="674.0" r="5.6" fill="url(#pG)"/><circle cx="1454.0" cy="674.5" r="0.8" fill="#000"/>
<circle cx="1454.1" cy="660.8" r="5.6" fill="#000" opacity="0.55"/><circle cx="1452.5" cy="659.0" r="5.6" fill="url(#pG)"/><circle cx="1452.5" cy="659.5" r="0.8" fill="#000"/>
<circle cx="1452.4" cy="644.3" r="5.6" fill="#000" opacity="0.55"/><circle cx="1450.8" cy="642.5" r="5.6" fill="url(#pG)"/><circle cx="1450.8" cy="643.0" r="0.8" fill="#000"/>
<circle cx="1420.3" cy="787.1" r="5.2" fill="#000" opacity="0.55"/><circle cx="1418.7" cy="785.3" r="5.2" fill="url(#pW)"/><circle cx="1418.7" cy="785.3" r="5.2" fill="none" stroke="#222" stroke-width="0.8"/>
<circle cx="1521.3" cy="788.1" r="5.2" fill="#000" opacity="0.55"/><circle cx="1519.7" cy="786.3" r="5.2" fill="url(#pW)"/><circle cx="1519.7" cy="786.3" r="5.2" fill="none" stroke="#222" stroke-width="0.8"/>
<circle cx="1543.3" cy="783.8" r="5.2" fill="#000" opacity="0.55"/><circle cx="1541.7" cy="782.0" r="5.2" fill="url(#pW)"/><circle cx="1541.7" cy="782.0" r="5.2" fill="none" stroke="#222" stroke-width="0.8"/>
<circle cx="1378.3" cy="839.3" r="5.2" fill="#000" opacity="0.55"/><circle cx="1376.7" cy="837.5" r="5.2" fill="url(#pW)"/><circle cx="1376.7" cy="837.5" r="5.2" fill="none" stroke="#222" stroke-width="0.8"/>
<circle cx="1410.3" cy="841.3" r="5.2" fill="#000" opacity="0.55"/><circle cx="1408.7" cy="839.5" r="5.2" fill="url(#pW)"/><circle cx="1408.7" cy="839.5" r="5.2" fill="none" stroke="#222" stroke-width="0.8"/>
<circle cx="1427.1" cy="848.1" r="5.2" fill="#000" opacity="0.55"/><circle cx="1425.5" cy="846.3" r="5.2" fill="url(#pW)"/><circle cx="1425.5" cy="846.3" r="5.2" fill="none" stroke="#222" stroke-width="0.8"/>
<circle cx="1441.6" cy="869.3" r="5.2" fill="#000" opacity="0.55"/><circle cx="1440.0" cy="867.5" r="5.2" fill="url(#pW)"/><circle cx="1440.0" cy="867.5" r="5.2" fill="none" stroke="#222" stroke-width="0.8"/>
<circle cx="1517.4" cy="851.3" r="5.2" fill="#000" opacity="0.55"/><circle cx="1515.8" cy="849.5" r="5.2" fill="url(#pW)"/><circle cx="1515.8" cy="849.5" r="5.2" fill="none" stroke="#222" stroke-width="0.8"/>
<circle cx="1385.6" cy="884.3" r="5.2" fill="#000" opacity="0.55"/><circle cx="1384.0" cy="882.5" r="5.2" fill="url(#pW)"/><circle cx="1384.0" cy="882.5" r="5.2" fill="none" stroke="#222" stroke-width="0.8"/>
<circle cx="1364.1" cy="914.3" r="5.2" fill="#000" opacity="0.55"/><circle cx="1362.5" cy="912.5" r="5.2" fill="url(#pW)"/><circle cx="1362.5" cy="912.5" r="5.2" fill="none" stroke="#222" stroke-width="0.8"/>
<circle cx="1592.4" cy="813.5" r="5.2" fill="#000" opacity="0.55"/><circle cx="1590.8" cy="811.7" r="5.2" fill="url(#pW)"/><circle cx="1590.8" cy="811.7" r="5.2" fill="none" stroke="#222" stroke-width="0.8"/>
<circle cx="1522.4" cy="705.1" r="5.2" fill="#000" opacity="0.55"/><circle cx="1520.8" cy="703.3" r="5.2" fill="url(#pW)"/><circle cx="1520.8" cy="703.3" r="5.2" fill="none" stroke="#222" stroke-width="0.8"/>
<circle cx="1580.3" cy="716.0" r="5.2" fill="#000" opacity="0.55"/><circle cx="1578.7" cy="714.2" r="5.2" fill="url(#pW)"/><circle cx="1578.7" cy="714.2" r="5.2" fill="none" stroke="#222" stroke-width="0.8"/>
<circle cx="1492.4" cy="745.1" r="5.2" fill="#000" opacity="0.55"/><circle cx="1490.8" cy="743.3" r="5.2" fill="url(#pW)"/><circle cx="1490.8" cy="743.3" r="5.2" fill="none" stroke="#222" stroke-width="0.8"/>
<circle cx="1456.3" cy="707.3" r="5.2" fill="#000" opacity="0.55"/><circle cx="1454.7" cy="705.5" r="5.2" fill="url(#pW)"/><circle cx="1454.7" cy="705.5" r="5.2" fill="none" stroke="#222" stroke-width="0.8"/>
<circle cx="1606.6" cy="736.0" r="5.2" fill="#000" opacity="0.55"/><circle cx="1605.0" cy="734.2" r="5.2" fill="url(#pW)"/><circle cx="1605.0" cy="734.2" r="5.2" fill="none" stroke="#222" stroke-width="0.8"/>
<circle cx="1639.9" cy="755.1" r="5.2" fill="#000" opacity="0.55"/><circle cx="1638.3" cy="753.3" r="5.2" fill="url(#pW)"/><circle cx="1638.3" cy="753.3" r="5.2" fill="none" stroke="#222" stroke-width="0.8"/>
<circle cx="1667.4" cy="805.1" r="5.2" fill="#000" opacity="0.55"/><circle cx="1665.8" cy="803.3" r="5.2" fill="url(#pW)"/><circle cx="1665.8" cy="803.3" r="5.2" fill="none" stroke="#222" stroke-width="0.8"/>
<circle cx="1464.1" cy="803.5" r="5.6" fill="#000" opacity="0.55"/><circle cx="1462.5" cy="801.7" r="5.6" fill="url(#pW)"/>
</svg>
<div class="abs" style="left:0;top:1041px;width:1920px;height:1px;background:#fff"></div>
<div class="abs" style="left:0;top:1042px;width:1920px;height:1px;background:#000"></div>
<div class="abs" style="left:0;top:1043px;width:1920px;height:18px;background:#f0f0f0"></div>
<div class="abs" style="left:0;top:1042px;width:54px;height:19px;border:1px solid #000;border-bottom-width:2px;border-right-width:2px;box-sizing:border-box;background:#f0f0f0"></div>
<div class="abs" style="left:17px;top:1043px;width:1px;height:16px;background:#888"></div><div class="abs" style="left:35px;top:1043px;width:1px;height:16px;background:#888"></div>
<svg class="abs" style="left:0;top:1042px" width="53" height="18"><path d="M6 5l7 7M13 5l-7 7" stroke="#000" stroke-width="1.400"/><path d="M28 5v8l-4-4z M42 5v8l4-4z" fill="#000"/></svg>
<svg class="abs" style="left:53px;top:1041px" width="340" height="20" viewBox="53 1041 340 20"><path d="M55 1042.500L62.500 1060.500H119.500L127 1042.500V1041H55Z" fill="#fff"/><path d="M55 1042.500L62.500 1060.500M119.500 1060.500L127 1042.500" stroke="#000" fill="none" stroke-width="1.200"/><path d="M123 1051.500L127 1060.500H198L205.500 1042.500 M195.500 1042.500L203 1060.500H304L311.500 1042.500 M301.500 1042.500L309 1060.500H376L383.500 1042.500" fill="none" stroke="#000" stroke-width="1.100"/></svg>
<div class="abs lsb" style="left:67px;top:1045px;font-size:10.500px;line-height:14px">Measures</div>
<div class="abs seg" style="left:135px;top:1045px;font-size:10px;line-height:14px;letter-spacing:-0.2px">CIE Diagram</div>
<div class="abs seg" style="left:216px;top:1045px;font-size:10px;line-height:14px;letter-spacing:-0.2px">Color temperature</div>
<div class="abs seg" style="left:318px;top:1045px;font-size:10px;line-height:14px;letter-spacing:-0.2px">RGB Levels</div>
<svg class="abs" style="left:1750px;top:1044px" width="16" height="16"><path d="M1 2h13v9l-2 3h-3l-1-2-1 2h-3l-3-3z" fill="#7a7a10" stroke="#404000" stroke-width="0.800"/><rect x="4" y="3" width="7" height="5" fill="#e02020"/><path d="M5 6l3-2v3" stroke="#fff" stroke-width="1" fill="none"/><circle cx="11" cy="12" r="2" fill="#ffe800"/></svg>
<div class="abs chk sm" style="left:1846px;top:1045px"></div><div class="abs seg" style="left:1864px;top:1043px;font-size:11.500px;line-height:14px;letter-spacing:-0.2px">Reference</div>
<div class="abs" style="left:0;top:1061px;width:1920px;height:19px;background:linear-gradient(90deg,#e4eaf6,#eef2fb 40%,#eef2fb)"></div>
<div class="abs seg" style="left:2px;top:1064px;font-size:11.500px;line-height:16px;letter-spacing:-0.25px">Ready</div>
<div class="abs" style="left:1743px;top:1062px;width:74px;height:18px;border-left:1px solid #a8b8d0;border-top:1px solid #a8b8d0;border-right:1px solid #a8b8d0;box-sizing:border-box"></div>
<div class="abs" style="left:1820px;top:1062px;width:28px;height:18px;border-left:1px solid #a8b8d0;border-top:1px solid #a8b8d0;border-right:1px solid #a8b8d0;box-sizing:border-box"></div>
<div class="abs" style="left:1851px;top:1062px;width:33px;height:18px;border-left:1px solid #a8b8d0;border-top:1px solid #a8b8d0;border-right:1px solid #a8b8d0;box-sizing:border-box"></div>
<div class="abs" style="left:1887px;top:1062px;width:33px;height:18px;border-left:1px solid #a8b8d0;border-top:1px solid #a8b8d0;border-right:1px solid #a8b8d0;box-sizing:border-box"></div>
<div class="abs seg" style="left:1853px;top:1064px;font-size:11.500px;line-height:16px;letter-spacing:-0.2px">NUM</div>
</body></html>
